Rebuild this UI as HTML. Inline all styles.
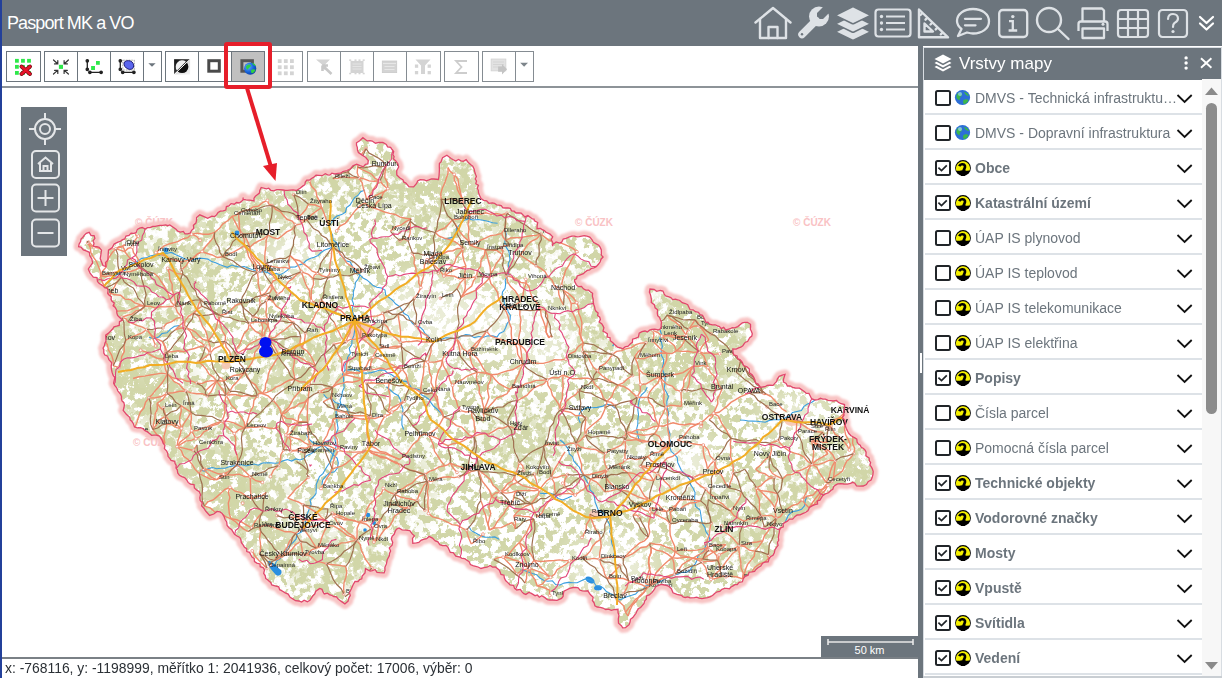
<!DOCTYPE html>
<html><head><meta charset="utf-8">
<style>
*{box-sizing:border-box;margin:0;padding:0}
html,body{width:1222px;height:678px;overflow:hidden;background:#fff;font-family:"Liberation Sans",sans-serif}
.hi{position:absolute}
</style></head><body>
<div style="position:absolute;left:0;top:0;width:1222px;height:46px;background:#6c757d"></div>
<div style="position:absolute;left:7px;top:12.5px;color:#fff;font-size:18px;letter-spacing:-0.9px;white-space:nowrap;line-height:21px">Pasport MK a VO</div>
<svg class="hi" style="left:752px;top:5px" width="42" height="36" viewBox="0 0 42 36"><g fill="none" stroke="#dee2e6" stroke-width="2.4" stroke-linejoin="round" stroke-linecap="round"><path d="M3.5 17.5 L21 3 L38.5 17.5"/><path d="M8 14 V33 H34 V14"/><path d="M16.5 33 V22 H25.5 V33"/></g></svg>
<svg class="hi" style="left:795px;top:5px" width="36" height="36" viewBox="0 0 36 36"><defs><mask id="wm"><rect width="36" height="36" fill="#fff"/><path d="M22 14 L22 8 L28 2 L40 -2 L40 6 L33 9 L28 14 Z" fill="#000"/></mask></defs><g fill="#dee2e6" mask="url(#wm)"><circle cx="24" cy="11.5" r="10"/></g><path d="M7 29.5 L21 15.5" stroke="#dee2e6" stroke-width="7.5" stroke-linecap="round"/><circle cx="7" cy="29.2" r="1.2" fill="#6c757d"/></svg>
<svg class="hi" style="left:835px;top:5px" width="36" height="36" viewBox="0 0 36 36"><g fill="#dee2e6" stroke="#6c757d" stroke-width="1.6" stroke-linejoin="round"><path d="M18 18 L34.5 26.2 Q35.5 26.8 34.5 27.4 L19 35 Q18 35.5 17 35 L1.5 27.4 Q0.5 26.8 1.5 26.2 Z"/><path d="M18 10 L34.5 18.2 Q35.5 18.8 34.5 19.4 L19 27 Q18 27.5 17 27 L1.5 19.4 Q0.5 18.8 1.5 18.2 Z"/><path d="M18 1.5 L34.5 9.7 Q35.5 10.3 34.5 10.9 L19 18.5 Q18 19 17 18.5 L1.5 10.9 Q0.5 10.3 1.5 9.7 Z"/></g></svg>
<svg class="hi" style="left:873px;top:7px" width="40" height="32" viewBox="0 0 40 32"><g fill="none" stroke="#dee2e6" stroke-width="2.2"><rect x="2.5" y="2.5" width="35" height="27" rx="3"/><path d="M13 9.5 H32 M13 16 H32 M13 22.5 H32"/></g><g fill="#dee2e6"><circle cx="8.5" cy="9.5" r="1.7"/><circle cx="8.5" cy="16" r="1.7"/><circle cx="8.5" cy="22.5" r="1.7"/></g></svg>
<svg class="hi" style="left:915px;top:5px" width="36" height="36" viewBox="0 0 36 36"><g fill="none" stroke="#dee2e6" stroke-width="2.4" stroke-linejoin="round" stroke-linecap="round"><path d="M4 4.5 L33 32.3 H4 Z"/><path d="M9.5 18.5 L18 26.5 H9.5 Z"/><path d="M7 8.5 L5.5 10 M12 13.2 L10.5 14.7 M17 18 L15.5 19.5 M22.2 22.9 L20.7 24.4 M27.3 27.8 L25.8 29.3"/></g></svg>
<svg class="hi" style="left:954px;top:5px" width="38" height="34" viewBox="0 0 38 34"><g fill="none" stroke="#dee2e6" stroke-width="2.3" stroke-linejoin="round" stroke-linecap="round"><path d="M7.5 24 C4.5 21.5 3 19 3 16 C3 9 10 4 19 4 C28 4 35 9 35 16.5 C35 23.5 28 28.5 19 28.5 C17 28.5 15 28 13 27.5 L4 31 Z"/><path d="M11 17.5 H27 M11 24 H21.5" transform="translate(0,-3.7)"/></g></svg>
<svg class="hi" style="left:996px;top:7px" width="34" height="32" viewBox="0 0 34 32"><g fill="none" stroke="#dee2e6" stroke-width="2.3"><rect x="3.2" y="3" width="28" height="27" rx="3.5"/><path d="M13 14.2 H16.8 V23.5 M12.6 23.5 H21.2"/></g><circle cx="16.8" cy="9.6" r="1.7" fill="#dee2e6"/></svg>
<svg class="hi" style="left:1034px;top:5px" width="38" height="36" viewBox="0 0 38 36"><g fill="none" stroke="#dee2e6" stroke-width="2.4" stroke-linecap="round"><circle cx="15" cy="15" r="12"/><path d="M24 24 L34.5 34"/></g></svg>
<svg class="hi" style="left:1074px;top:5px" width="38" height="36" viewBox="0 0 38 36"><g fill="none" stroke="#dee2e6" stroke-width="2.3" stroke-linejoin="round"><path d="M8.5 16 V3.5 H28 L30 5.5 V16"/><path d="M4.5 26 V19 C4.5 17.3 5.5 16.5 7 16.5 H31 C32.5 16.5 33.5 17.3 33.5 19 V26"/><rect x="8.5" y="23.5" width="21.5" height="9.5"/></g><circle cx="29" cy="19.2" r="1.5" fill="#dee2e6"/></svg>
<svg class="hi" style="left:1115px;top:7px" width="36" height="32" viewBox="0 0 36 32"><g fill="none" stroke="#dee2e6" stroke-width="2.2"><rect x="3" y="3" width="30" height="27" rx="3"/><path d="M13 3 V30 M23 3 V30 M3 12 H33 M3 21 H33"/></g></svg>
<svg class="hi" style="left:1156px;top:7px" width="34" height="32" viewBox="0 0 34 32"><g fill="none" stroke="#dee2e6" stroke-width="2.2"><rect x="3" y="3" width="28" height="27" rx="3.5"/><path d="M12 12 C12 8.5 14.5 7 17 7 C20 7 22 9 22 11.5 C22 14 20 15 18.5 16 C17.3 16.8 17 17.5 17 20" stroke-linecap="round"/></g><circle cx="17" cy="24.5" r="1.6" fill="#dee2e6"/></svg>
<svg class="hi" style="left:1197px;top:14px" width="19" height="18" viewBox="0 0 19 18"><g fill="none" stroke="#fff" stroke-width="2.2" stroke-linecap="round" stroke-linejoin="round"><path d="M3 3 L9.5 9 L16 3"/><path d="M3 9.5 L9.5 15.5 L16 9.5"/></g></svg>
<div style="position:absolute;left:0;top:46px;width:918px;height:41px;background:#fff"></div>
<div style="position:absolute;left:0;top:86px;width:918px;height:1.5px;background:#8d9398"></div>
<div style="position:absolute;left:6px;top:51px;width:35px;height:31px;border:1px solid #6c757d;background:#fff"></div>
<div style="position:absolute;left:44px;top:51px;width:118px;height:31px;border:1px solid #6c757d;background:#fff"></div>
<div style="position:absolute;left:77px;top:51px;width:1px;height:31px;background:#6c757d"></div>
<div style="position:absolute;left:110px;top:51px;width:1px;height:31px;background:#6c757d"></div>
<div style="position:absolute;left:143px;top:51px;width:1px;height:31px;background:#6c757d"></div>
<div style="position:absolute;left:165px;top:51px;width:100px;height:31px;border:1px solid #6c757d;background:#fff"></div>
<div style="position:absolute;left:198px;top:51px;width:1px;height:31px;background:#6c757d"></div>
<div style="position:absolute;left:231px;top:51px;width:1px;height:31px;background:#6c757d"></div>
<div style="position:absolute;left:232px;top:52px;width:32px;height:29px;background:#c0c0c0"></div>
<div style="position:absolute;left:269px;top:51px;width:34px;height:31px;border:1px solid #858c92;background:#fff"></div>
<div style="position:absolute;left:307px;top:51px;width:134px;height:31px;border:1px solid #858c92;background:#fff"></div>
<div style="position:absolute;left:340px;top:51px;width:1px;height:31px;background:#858c92"></div>
<div style="position:absolute;left:373px;top:51px;width:1px;height:31px;background:#858c92"></div>
<div style="position:absolute;left:406px;top:51px;width:1px;height:31px;background:#858c92"></div>
<div style="position:absolute;left:444px;top:51px;width:35px;height:31px;border:1px solid #858c92;background:#fff"></div>
<div style="position:absolute;left:482px;top:51px;width:52px;height:31px;border:1px solid #858c92;background:#fff"></div>
<div style="position:absolute;left:515px;top:51px;width:1px;height:31px;background:#858c92"></div>
<svg style="position:absolute;left:0;top:0" width="560" height="90" viewBox="0 0 560 90"><rect x="15.00" y="58.90" width="3.8" height="3.8" fill="#2ee84a"/><rect x="15.00" y="64.95" width="3.8" height="3.8" fill="#2ee84a"/><rect x="15.00" y="71.00" width="3.8" height="3.8" fill="#2ee84a"/><rect x="21.05" y="58.90" width="3.8" height="3.8" fill="#2ee84a"/><rect x="21.05" y="64.95" width="3.8" height="3.8" fill="#2ee84a"/><rect x="21.05" y="71.00" width="3.8" height="3.8" fill="#2ee84a"/><rect x="27.10" y="58.90" width="3.8" height="3.8" fill="#2ee84a"/><rect x="27.10" y="64.95" width="3.8" height="3.8" fill="#2ee84a"/><rect x="27.10" y="71.00" width="3.8" height="3.8" fill="#2ee84a"/><path d="M21.5 66.5 L30 74 M30 66.5 L21.5 74" stroke="#7a0a14" stroke-width="4" stroke-linecap="round"/><path d="M21.5 66.5 L30 74 M30 66.5 L21.5 74" stroke="#e8142a" stroke-width="2.4" stroke-linecap="round"/><rect x="58.9" y="64.8" width="4.1" height="4.1" fill="#2ee84a"/><g stroke="#333" stroke-width="1.2" fill="none" stroke-linecap="round"><path d="M53.5 60 L57.6 63.8 M57.8 60.6 V63.9 H54.5 M68.4 60 L64.3 63.8 M64.1 60.6 V63.9 H67.4 M53.5 74 L57.6 70.4 M54.5 70.3 H57.8 V73.5 M68.4 74 L64.3 70.4 M67.4 70.3 H64.1 V73.5"/></g><g stroke="#222" stroke-width="1.3" fill="#222"><path d="M87.3 60.7 V69.4 M89.9 72.3 H101.1"/><circle cx="87.3" cy="60.8" r="1.2"/><circle cx="87.3" cy="69.3" r="1.2"/><circle cx="89.9" cy="72.3" r="1.2"/><circle cx="101.1" cy="72.3" r="1.2"/></g><rect x="91.1" y="66" width="3.9" height="4" fill="#2ee84a"/><rect x="96" y="61" width="3.8" height="3.8" fill="#2ee84a"/><g stroke="#222" stroke-width="1.3" fill="#222"><path d="M120.3 60.7 V69.4 M122.7 72.3 H133.9"/><circle cx="120.3" cy="60.8" r="1.2"/><circle cx="120.3" cy="69.3" r="1.2"/><circle cx="122.7" cy="72.3" r="1.2"/><circle cx="133.9" cy="72.3" r="1.2"/></g><rect x="122.8" y="60.2" width="11.5" height="9.8" fill="none" stroke="#444" stroke-width="0.6" stroke-dasharray="0.8 0.8"/><path d="M124 63 C124.5 60.5 128 60.3 130.5 61 C133 62 134 64.5 133.5 67 C133 69.5 130 69.8 128 69 C125.5 68 123.6 65.5 124 63Z" fill="#5b66ee" stroke="#10106a" stroke-width="0.9"/><path d="M148.4 63.3 H155.6 L152 66.8Z" fill="#6c757d"/><defs><linearGradient id="ig" x1="0" y1="0" x2="1" y2="1"><stop offset="0" stop-color="#111"/><stop offset="0.5" stop-color="#333"/><stop offset="0.5" stop-color="#ddd"/><stop offset="1" stop-color="#f4f4f4"/></linearGradient><radialGradient id="gl" cx="0.35" cy="0.35" r="0.75"><stop offset="0" stop-color="#5fb0ff"/><stop offset="0.6" stop-color="#1560d8"/><stop offset="1" stop-color="#0a3a9a"/></radialGradient></defs><rect x="174.1" y="59.2" width="16" height="15.3" fill="url(#ig)"/><circle cx="182.1" cy="66.8" r="6.3" fill="#111"/><path d="M177 70.5 A6.3 6.3 0 0 1 186 61.8 Z" fill="#f0f0f0"/><path d="M174.1 74.5 L190.1 59.2" stroke="#fff" stroke-width="1"/><rect x="208.8" y="60.7" width="10.5" height="10.5" fill="none" stroke="#4a4a4a" stroke-width="3"/><rect x="241.9" y="60.7" width="10.5" height="10.5" fill="none" stroke="#555" stroke-width="3"/><circle cx="250.2" cy="68.6" r="6.1" fill="url(#gl)"/><path d="M246 66.5 C247.5 64 250 63.8 251 65.5 C250.5 67.5 248.5 67.5 248 69.5 C247 70 246 68.5 246 66.5Z M251 70 C252.5 68.8 254.8 69 255.5 70 C254.5 72.5 252.5 73.5 251.5 73 C251 72 251.2 71 251 70Z M252 62.8 C253.5 63 255.5 64.5 256 66 C254.5 66 253 65 252 62.8Z" fill="#30d040"/><rect x="277.80" y="59.20" width="3.8" height="3.8" fill="#d4d4d4"/><rect x="277.80" y="65.30" width="3.8" height="3.8" fill="#d4d4d4"/><rect x="277.80" y="71.40" width="3.8" height="3.8" fill="#d4d4d4"/><rect x="283.90" y="59.20" width="3.8" height="3.8" fill="#d4d4d4"/><rect x="283.90" y="65.30" width="3.8" height="3.8" fill="#d4d4d4"/><rect x="283.90" y="71.40" width="3.8" height="3.8" fill="#d4d4d4"/><rect x="290.00" y="59.20" width="3.8" height="3.8" fill="#d4d4d4"/><rect x="290.00" y="65.30" width="3.8" height="3.8" fill="#d4d4d4"/><rect x="290.00" y="71.40" width="3.8" height="3.8" fill="#d4d4d4"/><path d="M316 59.4 H330 L325 64.5 V70 L322 68 V64.5 Z" fill="#d4d4d4"/><path d="M322.5 65.5 L331.5 74 M322.5 65.5 V71 M322.5 65.5 H328" stroke="#c8c8c8" stroke-width="2.6" fill="none"/><rect x="350.5" y="60.8" width="13" height="12.2" fill="#d4d4d4"/><g fill="#fff"><rect x="352.5" y="59.4" width="2" height="1.4"/><rect x="356.5" y="59.4" width="2" height="1.4"/><rect x="360.5" y="59.4" width="2" height="1.4"/><rect x="352.5" y="73" width="2" height="1.4"/><rect x="356.5" y="73" width="2" height="1.4"/><rect x="360.5" y="73" width="2" height="1.4"/></g><g fill="#d4d4d4"><rect x="349.2" y="59.4" width="2" height="1.5"/><rect x="354.5" y="59.4" width="2" height="1.5"/><rect x="358.5" y="59.4" width="2" height="1.5"/><rect x="362.7" y="59.4" width="2" height="1.5"/><rect x="349.2" y="72.8" width="2" height="1.5"/><rect x="354.5" y="72.8" width="2" height="1.5"/><rect x="358.5" y="72.8" width="2" height="1.5"/><rect x="362.7" y="72.8" width="2" height="1.5"/></g><path d="M352.5 64 H361.5 M352.5 66.5 H361.5 M352.5 69 H361.5" stroke="#e8e8e8" stroke-width="0.8"/><rect x="382.3" y="61" width="14.4" height="11.6" fill="#d4d4d4" stroke="#cacaca" stroke-width="0.8"/><path d="M383 63.5 H396 M384.5 66.5 H394.5 M384.5 69.5 H394.5" stroke="#ececec" stroke-width="0.8"/><path d="M415.5 59.4 H430.5 L425 65.5 V74 H421 V65.5 Z" fill="#d4d4d4"/><g fill="#d4d4d4"><rect x="414.9" y="64.5" width="3.3" height="3.3"/><rect x="414.9" y="71" width="3.3" height="3.3"/><rect x="427.6" y="64.5" width="3.3" height="3.3"/><rect x="427.6" y="71" width="3.3" height="3.3"/></g><path d="M467 61 H456 L461.5 67 L456 73 H467" fill="none" stroke="#cdcdcd" stroke-width="1.8"/><rect x="491.1" y="59" width="14.8" height="11.9" fill="#e2e2e2" stroke="#d0d0d0" stroke-width="0.7"/><path d="M493 62 H504 M493 64.5 H504 M493 67 H504" stroke="#cfcfcf" stroke-width="0.7"/><path d="M498.1 66.5 H502 V63.9 L507.1 69.2 L502 74.5 V71.8 H498.1 Z" fill="#c4c4c4"/><path d="M520.2 62.7 H528 L524.1 66.8Z" fill="#7d858b"/></svg>
<div style="position:absolute;left:2px;top:88px;width:916px;height:569px;overflow:hidden">
<svg style="position:absolute;left:-2px;top:-88px" width="1222" height="678" viewBox="0 0 1222 678">
<defs>
<path id="czp" d="M79.2 243.8 L80.6 241.6 L81.0 239.0 L82.9 237.2 L84.2 235.4 L86.3 233.4 L89.2 232.4 L91.1 235.6 L94.1 235.6 L94.9 238.3 L93.0 240.9 L94.0 243.2 L93.4 246.3 L96.8 246.7 L99.1 247.4 L101.5 250.2 L100.9 254.5 L100.2 258.6 L101.6 262.1 L102.9 265.6 L105.9 266.6 L105.5 262.4 L107.6 260.5 L108.0 258.1 L108.2 254.1 L108.5 250.1 L112.3 247.6 L114.1 244.1 L117.9 242.1 L120.3 241.5 L122.2 239.9 L124.7 238.9 L126.0 236.1 L129.0 235.4 L131.1 233.1 L133.8 233.4 L136.1 232.7 L137.4 229.5 L139.7 228.2 L142.2 227.5 L145.2 229.1 L147.6 227.7 L150.2 227.6 L152.7 226.3 L155.2 226.4 L157.5 225.9 L159.9 225.4 L162.8 225.4 L165.6 224.9 L167.9 225.7 L169.8 225.0 L172.8 227.0 L176.0 229.3 L177.7 231.2 L180.3 232.1 L183.3 231.4 L185.0 233.9 L187.7 233.9 L190.2 233.0 L191.6 230.3 L193.8 228.5 L193.4 225.2 L195.9 223.1 L196.5 220.6 L196.6 217.6 L199.8 214.8 L204.0 216.7 L207.7 218.4 L211.9 216.2 L214.6 216.6 L216.5 214.9 L218.1 212.5 L220.4 211.2 L223.3 210.9 L225.8 210.0 L226.4 206.6 L229.0 206.0 L231.1 203.6 L234.3 204.2 L236.5 202.5 L239.7 202.8 L242.9 200.2 L243.2 197.5 L243.0 199.4 L246.0 199.9 L249.9 200.1 L254.0 200.9 L254.0 198.2 L255.4 196.3 L257.3 194.7 L259.4 193.1 L259.8 190.4 L261.2 187.4 L266.3 188.8 L268.7 188.2 L270.8 190.3 L273.7 190.9 L276.7 189.7 L279.9 189.7 L283.0 190.0 L285.3 190.4 L287.6 190.3 L289.8 190.1 L293.0 189.9 L296.3 190.5 L300.1 188.3 L303.0 185.9 L304.9 184.7 L305.3 182.1 L306.8 180.2 L309.7 180.1 L311.5 178.5 L313.6 177.4 L316.0 175.1 L318.9 175.3 L322.2 175.7 L325.3 173.7 L327.6 174.9 L329.9 175.1 L331.8 173.2 L334.9 174.0 L337.9 173.3 L340.6 173.2 L342.9 171.7 L347.0 170.5 L350.4 168.8 L352.9 165.7 L356.7 164.2 L360.0 165.7 L363.3 166.8 L365.4 164.3 L367.8 163.9 L368.3 160.6 L365.6 157.3 L362.2 155.1 L358.4 152.5 L357.5 150.0 L357.3 147.4 L356.5 145.2 L356.5 142.8 L359.7 140.8 L362.9 137.7 L365.3 139.4 L367.2 140.9 L369.9 140.7 L372.2 141.0 L375.5 143.2 L379.1 142.4 L382.8 142.5 L386.3 144.5 L387.6 146.9 L390.6 147.3 L392.1 149.5 L393.7 151.6 L392.8 154.5 L394.1 156.6 L393.5 159.0 L395.6 160.7 L397.9 163.7 L398.7 167.0 L396.7 170.7 L396.8 175.0 L399.6 177.7 L403.0 179.9 L403.9 182.2 L405.9 183.1 L408.9 186.6 L413.6 186.9 L416.6 183.5 L417.7 180.9 L420.2 179.7 L424.1 179.9 L426.4 180.8 L429.0 179.9 L431.5 178.8 L433.8 179.0 L438.4 179.5 L439.0 176.0 L439.3 172.0 L439.4 169.2 L439.3 166.3 L439.4 163.6 L441.1 161.6 L442.6 157.6 L446.9 155.2 L451.1 158.5 L453.3 159.8 L455.7 161.0 L458.5 159.5 L461.0 160.8 L463.3 161.4 L466.1 159.7 L467.7 161.7 L469.2 163.2 L470.8 164.7 L472.7 166.1 L474.1 168.9 L474.8 172.0 L475.5 174.2 L476.4 176.5 L475.2 178.9 L476.5 181.0 L475.8 183.7 L478.4 185.2 L477.3 188.2 L478.3 190.3 L478.5 192.7 L479.6 195.5 L481.0 198.6 L483.6 200.3 L486.7 200.9 L488.9 203.3 L492.3 202.9 L494.5 203.3 L496.6 204.8 L499.0 205.1 L501.2 205.6 L502.9 207.8 L505.2 208.0 L507.8 207.9 L510.2 208.3 L511.6 210.8 L514.1 211.2 L516.0 213.0 L518.8 213.0 L521.2 213.2 L523.0 214.9 L524.8 216.9 L527.9 215.6 L530.5 217.4 L532.4 218.9 L534.0 219.0 L534.4 220.9 L537.7 222.5 L537.2 225.4 L537.0 228.7 L540.5 228.4 L542.3 229.7 L544.3 230.6 L546.1 232.3 L550.0 234.1 L552.7 236.9 L551.2 239.7 L552.9 242.8 L552.6 246.2 L552.3 244.4 L554.4 243.4 L556.1 242.0 L559.6 243.1 L561.7 242.2 L563.2 239.0 L566.1 238.4 L568.9 237.2 L571.8 236.2 L574.4 236.1 L576.9 236.8 L579.3 236.7 L581.8 236.2 L584.2 235.7 L586.8 236.2 L589.8 237.0 L591.9 239.5 L593.4 242.3 L596.2 243.9 L598.7 245.3 L600.2 247.4 L601.3 249.9 L601.3 252.6 L601.3 255.1 L603.1 257.0 L601.0 259.2 L600.2 261.8 L598.4 264.3 L596.2 266.8 L593.9 267.8 L591.5 268.3 L589.7 270.0 L587.2 270.4 L585.2 271.9 L583.4 273.7 L580.3 274.8 L577.2 275.9 L576.5 278.8 L574.6 279.7 L574.7 281.6 L576.4 284.9 L578.5 286.7 L581.5 286.4 L583.4 288.8 L585.8 290.1 L588.6 290.2 L590.3 291.8 L592.6 293.3 L592.4 296.3 L593.2 299.2 L593.3 302.5 L593.8 304.7 L594.6 306.9 L595.0 309.2 L596.0 311.3 L598.1 313.1 L597.6 315.5 L599.7 317.2 L600.4 319.4 L599.1 322.1 L601.7 323.7 L603.0 325.8 L603.9 327.9 L603.0 331.2 L605.5 332.5 L607.4 333.9 L607.2 337.1 L610.0 337.7 L610.3 340.7 L612.9 342.7 L615.2 345.1 L617.4 347.1 L620.5 347.9 L622.9 348.8 L625.1 346.9 L628.2 346.2 L630.4 343.8 L632.4 342.3 L632.6 339.2 L635.3 338.3 L638.4 337.1 L639.2 333.2 L642.0 331.7 L645.0 331.0 L647.4 331.9 L649.6 330.2 L651.8 329.4 L654.8 329.1 L658.0 330.0 L660.2 329.0 L661.2 326.8 L661.2 324.3 L661.5 322.1 L660.5 320.0 L659.6 317.6 L657.7 315.8 L657.3 313.0 L657.6 309.7 L655.1 307.9 L654.3 304.7 L651.3 302.5 L651.4 299.4 L650.9 296.7 L650.4 294.4 L649.4 292.2 L650.0 289.0 L654.1 289.5 L656.6 291.3 L660.3 290.4 L662.9 291.0 L664.1 293.8 L665.6 296.0 L668.3 296.6 L670.8 297.6 L672.7 299.6 L675.4 299.1 L677.6 299.8 L679.8 300.5 L682.2 302.7 L685.3 303.5 L687.7 304.7 L688.9 307.2 L690.1 309.7 L693.1 309.8 L695.4 311.7 L698.4 312.3 L700.1 314.6 L702.5 315.3 L704.5 319.0 L705.9 322.4 L707.9 322.2 L709.5 324.2 L712.3 324.9 L715.3 324.8 L717.4 325.9 L719.5 326.6 L721.2 328.6 L723.7 327.4 L725.6 329.9 L728.0 329.3 L730.2 328.7 L732.2 327.6 L734.7 327.9 L737.8 326.6 L740.3 324.5 L742.3 322.9 L744.7 322.4 L747.5 322.3 L750.5 324.3 L750.6 326.8 L750.3 329.2 L751.4 331.2 L752.3 333.7 L751.8 336.1 L749.7 337.8 L747.6 341.5 L745.4 342.2 L744.2 343.6 L742.8 345.9 L740.8 347.2 L738.6 347.8 L736.1 349.1 L732.8 348.9 L733.0 352.1 L733.8 355.0 L737.1 355.9 L737.6 358.7 L740.2 359.8 L742.3 362.3 L743.5 365.5 L746.9 366.8 L749.3 369.0 L749.4 372.9 L752.1 374.8 L753.8 377.2 L754.9 380.0 L755.5 382.7 L758.1 384.1 L760.4 387.1 L762.4 387.0 L765.0 386.7 L767.2 385.4 L770.0 385.2 L773.1 385.4 L775.0 383.1 L776.7 381.5 L777.3 379.1 L779.2 376.3 L782.3 375.2 L785.0 374.5 L783.5 379.3 L783.4 382.0 L786.1 383.5 L787.4 386.0 L790.1 385.8 L792.6 387.3 L795.2 388.0 L799.5 388.1 L802.8 390.4 L804.6 391.8 L806.3 393.4 L808.9 393.4 L810.0 395.5 L811.5 398.6 L815.1 400.0 L817.9 399.6 L820.4 398.3 L822.8 399.2 L825.4 399.1 L828.0 400.4 L830.5 400.7 L833.3 401.0 L836.5 400.4 L838.3 402.3 L840.4 403.4 L844.5 404.6 L844.6 408.1 L843.7 410.9 L844.0 415.2 L842.3 417.7 L844.6 419.9 L845.5 422.5 L845.2 425.7 L846.2 428.2 L847.4 430.7 L848.7 433.3 L850.7 435.5 L852.8 436.7 L854.8 437.9 L856.8 439.2 L857.1 442.1 L858.3 444.1 L860.2 445.3 L861.2 447.3 L863.5 448.5 L865.1 450.1 L866.1 452.2 L865.9 455.9 L869.2 458.0 L869.3 460.5 L870.6 462.5 L869.9 465.2 L871.5 467.1 L872.5 469.2 L873.2 471.5 L872.9 474.6 L872.2 477.3 L871.1 480.1 L868.3 481.4 L866.4 484.5 L863.2 486.0 L859.7 486.1 L856.5 485.8 L854.8 483.2 L852.7 482.3 L850.4 483.4 L847.3 484.2 L844.0 484.0 L840.8 483.6 L837.6 483.9 L835.5 485.1 L833.7 486.6 L832.8 489.3 L830.8 490.5 L828.5 492.8 L825.3 493.9 L822.7 495.6 L821.0 498.3 L819.9 500.1 L817.3 501.0 L817.6 503.9 L814.9 504.6 L812.0 505.9 L809.5 507.5 L807.9 510.7 L805.2 512.5 L802.6 513.7 L800.1 514.9 L797.1 515.0 L794.8 516.7 L792.7 519.2 L789.5 519.1 L787.4 521.1 L785.0 522.4 L783.1 523.8 L783.3 526.8 L780.8 527.8 L779.6 529.8 L779.3 532.4 L778.7 534.8 L778.3 537.4 L778.7 540.2 L777.4 542.5 L778.1 545.4 L776.3 547.6 L774.9 549.9 L774.3 552.7 L773.0 555.2 L770.4 556.8 L769.0 558.8 L768.2 561.9 L765.2 562.0 L762.6 563.2 L760.8 566.1 L758.2 567.5 L755.9 569.4 L754.6 571.3 L752.0 571.8 L749.1 572.1 L748.1 575.2 L745.2 576.3 L743.3 578.5 L742.4 581.8 L739.1 582.4 L737.3 584.5 L734.9 584.6 L733.0 585.9 L731.1 586.9 L729.4 588.8 L726.9 588.4 L724.5 588.4 L721.9 589.3 L719.8 591.5 L717.1 591.8 L714.9 593.2 L712.8 595.3 L710.5 596.7 L707.6 597.6 L704.5 598.1 L701.9 598.6 L699.1 598.1 L696.7 597.2 L694.4 597.6 L690.0 597.8 L687.8 596.9 L685.3 597.5 L683.1 596.8 L681.3 595.3 L677.0 594.3 L673.0 592.8 L671.4 588.7 L668.6 586.2 L664.5 585.0 L661.1 584.4 L657.5 585.8 L655.5 587.0 L654.5 589.2 L652.1 592.4 L649.2 594.9 L646.4 596.0 L646.4 598.9 L644.7 600.9 L643.9 603.7 L642.2 605.6 L640.6 607.5 L638.3 608.8 L637.0 610.8 L636.0 613.3 L634.4 615.4 L632.8 617.6 L630.4 619.3 L630.0 622.1 L629.1 624.7 L625.5 627.6 L622.7 627.9 L621.4 625.7 L618.5 623.2 L618.3 619.0 L619.0 615.2 L618.0 612.6 L618.0 609.3 L613.9 609.6 L611.3 610.3 L608.7 609.1 L605.7 609.5 L603.0 608.0 L600.3 607.3 L597.2 607.0 L594.9 605.9 L594.1 602.9 L592.4 600.5 L593.2 597.3 L590.3 594.6 L587.8 590.8 L584.8 591.2 L582.4 590.9 L580.1 590.3 L578.2 587.9 L575.8 587.3 L573.2 587.5 L569.6 588.3 L566.3 590.0 L563.9 591.2 L563.4 593.5 L563.1 596.4 L561.5 598.4 L557.0 600.3 L552.3 600.0 L549.7 600.0 L547.3 599.6 L544.6 597.4 L541.7 595.8 L539.3 597.2 L537.4 595.0 L535.1 595.7 L533.0 594.4 L530.9 593.2 L528.8 592.5 L525.9 594.4 L523.8 593.6 L522.0 591.9 L520.4 589.4 L516.8 590.0 L514.6 588.4 L513.5 585.3 L510.0 584.8 L507.8 582.6 L505.6 580.6 L504.3 577.8 L504.0 575.2 L501.0 574.4 L499.4 570.2 L497.4 568.6 L495.4 567.0 L492.6 567.1 L490.1 565.5 L487.0 567.2 L484.0 567.7 L481.0 568.5 L478.1 567.0 L475.7 566.3 L472.9 565.7 L470.4 564.6 L469.2 561.7 L466.9 560.3 L464.8 558.7 L462.1 558.3 L460.0 557.1 L455.8 556.1 L453.2 552.7 L450.3 552.3 L449.2 549.9 L448.0 547.3 L446.0 545.4 L442.5 545.7 L439.8 544.6 L437.9 541.8 L435.3 540.9 L432.4 538.1 L429.1 536.4 L426.6 538.7 L423.4 539.4 L421.0 540.3 L418.8 542.4 L416.4 542.8 L412.8 543.3 L412.5 538.4 L414.4 535.8 L412.2 533.9 L409.8 530.7 L405.6 530.2 L402.1 529.8 L399.0 528.0 L396.5 529.2 L395.4 530.9 L394.1 534.3 L392.1 536.4 L391.3 539.0 L392.7 542.2 L392.1 545.2 L389.3 547.9 L390.6 551.1 L389.5 553.4 L389.3 555.8 L387.2 559.8 L386.4 563.9 L384.9 567.3 L385.0 570.2 L384.1 572.9 L379.7 572.6 L377.0 572.3 L375.1 569.5 L372.4 570.6 L370.1 571.0 L365.5 568.6 L365.0 572.9 L362.1 576.1 L361.8 578.8 L359.6 579.6 L358.1 581.5 L355.0 581.5 L353.1 584.8 L351.4 588.8 L350.4 590.8 L349.4 592.8 L350.3 595.4 L348.8 598.1 L348.1 601.1 L344.9 603.9 L341.3 601.4 L338.0 598.9 L336.6 596.8 L333.7 596.5 L331.7 595.3 L329.4 594.6 L327.4 593.1 L324.3 593.9 L322.9 591.6 L322.0 589.3 L319.7 588.5 L318.1 589.6 L315.6 591.5 L314.8 593.9 L313.0 595.7 L311.7 597.6 L309.9 600.2 L307.3 601.7 L304.1 600.2 L301.6 602.1 L298.8 601.0 L295.5 600.7 L292.8 598.9 L290.1 597.3 L288.2 594.1 L285.2 592.9 L283.0 591.5 L281.2 590.4 L279.7 589.7 L278.7 586.8 L275.0 585.9 L271.8 585.0 L270.7 582.4 L268.9 580.9 L267.6 579.8 L265.7 578.4 L265.3 575.8 L263.7 573.3 L264.5 569.9 L263.1 567.5 L260.2 566.7 L260.0 563.9 L256.8 563.1 L254.5 561.6 L254.2 558.5 L252.0 557.0 L250.8 554.8 L249.6 552.4 L246.8 551.6 L246.7 548.7 L244.5 547.3 L243.1 544.9 L241.4 542.7 L240.9 539.8 L239.8 537.4 L237.0 536.0 L234.5 534.4 L233.0 531.9 L231.5 529.4 L229.0 527.7 L227.1 525.5 L226.7 522.0 L225.1 519.5 L224.0 516.4 L222.3 513.6 L220.1 511.9 L217.0 511.4 L213.8 514.0 L209.6 515.4 L207.4 513.0 L205.5 510.9 L203.9 508.2 L201.6 505.8 L202.3 502.7 L200.2 500.5 L199.8 497.7 L200.5 494.6 L199.3 491.8 L196.6 489.9 L194.4 487.9 L194.0 484.5 L190.4 484.1 L188.1 482.4 L186.6 479.7 L184.6 477.6 L181.9 476.6 L179.4 475.3 L177.7 473.0 L177.3 469.8 L176.0 468.0 L176.2 465.4 L175.1 463.5 L174.7 461.3 L171.1 460.4 L169.9 458.6 L168.0 456.3 L167.7 453.2 L166.5 450.8 L164.4 448.6 L164.9 445.4 L163.1 443.2 L162.3 440.8 L161.2 438.8 L159.5 436.0 L156.3 435.2 L154.0 435.2 L151.6 435.3 L149.8 433.7 L147.5 431.9 L145.0 430.6 L143.0 428.7 L140.7 427.7 L137.4 427.8 L134.5 427.0 L133.4 423.7 L131.8 421.3 L130.2 419.9 L129.8 417.5 L128.2 415.9 L126.3 414.2 L124.8 412.3 L123.2 410.3 L124.0 407.5 L124.4 404.9 L123.9 402.7 L122.0 401.0 L121.4 398.9 L121.5 396.5 L120.6 394.4 L119.2 392.6 L117.7 390.8 L116.8 387.9 L114.7 385.4 L113.6 383.1 L114.2 380.3 L114.9 377.5 L113.2 375.5 L112.1 372.4 L111.4 369.2 L111.2 366.1 L111.8 362.7 L108.9 359.7 L107.7 356.2 L104.9 355.1 L103.8 353.0 L103.8 350.4 L103.1 348.0 L104.5 345.5 L104.9 343.2 L106.0 341.0 L105.8 338.4 L105.7 335.0 L108.2 333.4 L110.5 331.3 L112.6 329.0 L114.0 326.9 L116.6 326.2 L119.2 325.4 L119.5 321.6 L122.3 320.0 L119.4 317.2 L117.6 315.4 L116.8 313.0 L116.8 310.3 L115.3 307.6 L113.1 305.7 L114.3 303.0 L112.0 301.2 L111.0 299.3 L111.3 296.7 L109.2 295.3 L107.7 293.6 L108.1 290.6 L107.4 288.4 L104.6 287.6 L103.1 285.9 L101.2 284.6 L99.0 283.3 L97.5 281.5 L97.0 277.7 L93.3 277.2 L91.7 275.2 L90.1 273.1 L88.3 269.1 L90.5 265.8 L92.6 263.0 L91.9 259.0 L89.8 255.7 L89.4 252.3 L86.2 250.9 L83.3 249.9 L81.1 247.0 L78.6 246.6Z"/>
<clipPath id="cz"><use href="#czp"/></clipPath>
<filter id="tex" x="60" y="120" width="840" height="520" filterUnits="userSpaceOnUse" color-interpolation-filters="sRGB"><feTurbulence type="fractalNoise" baseFrequency="0.13" numOctaves="4" seed="9"/><feColorMatrix type="matrix" values="0 0 0 0 0.82 0 0 0 0 0.84 0 0 0 0 0.66 16 0 0 0 -7.8"/></filter>
<filter id="tex2" x="60" y="120" width="840" height="520" filterUnits="userSpaceOnUse" color-interpolation-filters="sRGB"><feTurbulence type="fractalNoise" baseFrequency="0.13" numOctaves="4" seed="9"/><feColorMatrix type="matrix" values="0 0 0 0 0.82 0 0 0 0 0.84 0 0 0 0 0.66 16 0 0 0 -6.9"/></filter>
<filter id="tex3" x="60" y="120" width="840" height="520" filterUnits="userSpaceOnUse" color-interpolation-filters="sRGB"><feTurbulence type="fractalNoise" baseFrequency="0.13" numOctaves="4" seed="4"/><feColorMatrix type="matrix" values="0 0 0 0 0.82 0 0 0 0 0.84 0 0 0 0 0.66 16 0 0 0 -7.6"/></filter>
<filter id="blur"><feGaussianBlur stdDeviation="14"/></filter>
<filter id="hb" x="0" y="0" width="1222" height="678" filterUnits="userSpaceOnUse"><feGaussianBlur stdDeviation="1.0"/></filter>
<mask id="fm" maskUnits="userSpaceOnUse" x="0" y="0" width="1222" height="678"><g filter="url(#blur)" fill="#fff"><ellipse cx="260" cy="212" rx="95" ry="20" transform="rotate(-17 260 212)"/><ellipse cx="170" cy="278" rx="45" ry="30" transform="rotate(0 170 278)"/><ellipse cx="118" cy="360" rx="22" ry="60" transform="rotate(0 118 360)"/><ellipse cx="298" cy="365" rx="35" ry="32" transform="rotate(0 298 365)"/><ellipse cx="235" cy="495" rx="85" ry="35" transform="rotate(42 235 495)"/><ellipse cx="335" cy="560" rx="55" ry="22" transform="rotate(0 335 560)"/><ellipse cx="440" cy="192" rx="60" ry="28" transform="rotate(0 440 192)"/><ellipse cx="520" cy="235" rx="35" ry="18" transform="rotate(15 520 235)"/><ellipse cx="588" cy="305" rx="18" ry="38" transform="rotate(0 588 305)"/><ellipse cx="597" cy="320" rx="14" ry="30" transform="rotate(0 597 320)"/><ellipse cx="695" cy="345" rx="55" ry="45" transform="rotate(20 695 345)"/><ellipse cx="690" cy="318" rx="35" ry="30" transform="rotate(0 690 318)"/><ellipse cx="720" cy="350" rx="30" ry="25" transform="rotate(0 720 350)"/><ellipse cx="675" cy="355" rx="35" ry="40" transform="rotate(0 675 355)"/><ellipse cx="700" cy="335" rx="30" ry="25" transform="rotate(0 700 335)"/><ellipse cx="840" cy="490" rx="40" ry="38" transform="rotate(0 840 490)"/><ellipse cx="800" cy="510" rx="35" ry="25" transform="rotate(0 800 510)"/><ellipse cx="850" cy="470" rx="25" ry="25" transform="rotate(0 850 470)"/><ellipse cx="770" cy="560" rx="30" ry="22" transform="rotate(-30 770 560)"/><ellipse cx="525" cy="440" rx="35" ry="25" transform="rotate(0 525 440)"/><ellipse cx="618" cy="475" rx="22" ry="30" transform="rotate(0 618 475)"/><ellipse cx="400" cy="485" rx="35" ry="30" transform="rotate(0 400 485)"/><ellipse cx="160" cy="395" rx="35" ry="30" transform="rotate(0 160 395)"/><ellipse cx="735" cy="520" rx="25" ry="25" transform="rotate(0 735 520)"/></g></mask>
</defs>
<g font-family="Liberation Sans" font-size="10" font-weight="bold" fill="#f9c2c4" text-anchor="middle"><text x="594" y="226">© ČÚZK</text><text x="812" y="226">© ČÚZK</text><text x="154" y="226">© ČÚZK</text><text x="152" y="446">© ČÚZK</text></g>
<use href="#czp" fill="#fff" stroke="#f8c4c4" stroke-width="10" stroke-linejoin="round" filter="url(#hb)"/>
<use href="#czp" fill="#fff"/>
<g clip-path="url(#cz)">
<rect x="60" y="120" width="840" height="520" filter="url(#tex)"/>
<g mask="url(#fm)"><rect x="60" y="120" width="840" height="520" filter="url(#tex2)"/><rect x="60" y="120" width="840" height="520" filter="url(#tex3)"/></g>
<g filter="url(#blur)" fill="#fff" opacity="0.55"><ellipse cx="290" cy="258" rx="35" ry="25" transform="rotate(0 290 258)"/><ellipse cx="450" cy="325" rx="75" ry="35" transform="rotate(-10 450 325)"/><ellipse cx="680" cy="465" rx="40" ry="35" transform="rotate(0 680 465)"/><ellipse cx="610" cy="565" rx="50" ry="30" transform="rotate(0 610 565)"/><ellipse cx="795" cy="415" rx="35" ry="22" transform="rotate(0 795 415)"/><ellipse cx="310" cy="520" rx="22" ry="20" transform="rotate(0 310 520)"/><ellipse cx="420" cy="300" rx="40" ry="25" transform="rotate(0 420 300)"/><ellipse cx="540" cy="340" rx="30" ry="40" transform="rotate(0 540 340)"/></g>
<g fill="#2a8fe0"><path d="M268 561 C272 560 276 566 281 570 C283 574 279 577 276 575 C273 572 270 568 268 565Z"/><ellipse cx="590" cy="580" rx="5" ry="3" transform="rotate(30 590 580)"/><ellipse cx="598" cy="588" rx="4" ry="2.5"/><circle cx="368" cy="515" r="2.2"/><circle cx="374" cy="523" r="2"/><circle cx="365" cy="530" r="1.8"/><circle cx="166" cy="250" r="2.5"/><circle cx="237" cy="233" r="2.4"/></g>
<g fill="#f7c6b4" opacity="0.9"><ellipse cx="360" cy="331" rx="14" ry="10"/><circle cx="594" cy="515" r="5"/><ellipse cx="792" cy="420" rx="8" ry="6"/><circle cx="226" cy="365" r="4.5"/><circle cx="665" cy="447" r="4"/><circle cx="829" cy="427" r="4"/></g>
<g fill="none" stroke="#3a9ee0" stroke-width="1.1"><path d="M149.0 337.2 L153.8 338.6 L158.6 337.1 L162.0 333.5 L167.0 332.8 L170.4 329.1 L174.5 326.3 L179.5 325.6"/><path d="M807.2 495.9 L805.2 500.5 L804.7 505.5 L801.5 509.3 L796.8 510.9 L791.9 511.8 L788.3 515.4 L786.1 519.9 L784.4 524.5 L783.0 529.4 L782.1 534.3"/><path d="M386.4 386.8 L390.3 390.0 L394.0 393.3 L398.4 395.7 L400.6 400.2 L401.5 405.1 L403.0 409.9 L402.3 414.9 L401.9 419.8 L401.9 424.8 L403.6 429.5"/><path d="M323.6 394.3 L326.9 398.0 L331.9 398.8 L335.3 402.5 L340.0 404.0 L344.8 405.5 L347.6 409.6 L348.6 414.5"/><path d="M615.4 408.3 L611.4 405.3 L606.6 404.2 L602.1 406.4 L597.2 407.4 L592.2 407.8 L587.2 407.4 L582.8 409.8 L579.4 413.5 L578.5 418.4 L580.3 423.1"/><path d="M499.2 539.2 L494.8 536.9 L489.8 537.2 L484.8 537.1 L480.0 535.6 L475.7 533.1 L471.3 530.7 L468.8 526.3"/><path d="M612.5 346.0 L615.9 342.4 L619.1 338.5 L621.6 334.2 L621.4 329.2 L620.6 324.2 L620.5 319.2 L619.4 314.3 L618.5 309.4 L615.3 305.6 L614.7 300.6"/><path d="M321.9 484.9 L322.7 480.0 L326.0 476.2 L329.6 472.8 L334.5 471.8 L337.6 467.9 L338.3 462.9 L337.1 458.0 L333.2 454.9 L329.9 451.1 L326.3 447.7 L322.6 444.3 L317.6 444.1 L312.8 442.5 L309.0 439.2 L306.4 435.0"/><path d="M443.4 239.0 L448.4 238.4 L453.2 237.0 L456.1 232.9 L456.7 227.9 L460.1 224.3 L463.5 220.6 L468.2 218.9 L473.0 220.0 L478.0 219.5 L482.9 220.3 L487.8 221.2 L492.6 222.7 L497.6 223.2"/><path d="M647.3 387.2 L645.0 391.7 L641.3 395.0 L639.3 399.6 L638.4 404.5 L637.8 409.5 L638.5 414.4 L637.9 419.4 L637.8 424.4 L636.6 429.2 L637.6 434.1 L638.8 438.9 L642.1 442.7"/><path d="M572.0 495.9 L567.5 498.1 L562.8 499.9 L558.1 498.4 L554.6 494.8 L549.9 493.1 L544.9 493.6 L540.0 493.2"/><path d="M275.0 565.0 L276.5 560.9 L280.4 558.6 L282.1 554.7 L285.3 551.9 L287.1 548.0 L290.0 545.0 L293.4 542.2 L296.1 538.9 L297.1 534.3 L301.3 532.1 L303.0 528.0 L305.2 524.3 L305.4 520.1 L306.4 516.1 L308.0 512.2 L309.5 508.4 L311.1 504.5 L310.0 500.0 L313.4 497.0 L316.0 493.6 L316.2 489.0 L316.3 484.4 L317.9 480.5 L319.5 476.6 L322.9 473.6 L325.0 470.0 L327.4 466.0 L330.0 462.2 L331.8 458.0 L333.2 453.7 L335.3 449.6 L336.3 445.2 L335.0 440.0 L335.1 435.9 L336.8 432.1 L338.1 428.2 L337.3 424.0 L336.8 419.9 L336.4 415.8 L336.0 411.7 L338.3 407.9 L340.9 404.2 L340.0 400.0 L341.8 395.9 L342.4 391.6 L344.2 387.5 L343.7 383.0 L343.6 378.6 L342.6 374.0 L345.0 370.0 L344.8 365.4 L346.9 361.4 L347.7 357.1 L350.4 353.2 L349.2 348.4 L351.8 344.5 L352.0 340.0 L353.9 335.4 L354.6 330.7 L355.3 325.9 L355.0 321.0 L354.9 316.7 L352.6 312.8 L352.1 308.6 L353.6 304.1 L352.0 300.0 L353.4 295.8 L353.3 291.2 L355.0 287.2 L355.3 282.7 L358.1 279.0 L360.0 275.0"/><path d="M505.0 230.0 L506.3 234.2 L505.1 238.8 L504.8 243.2 L506.3 247.4 L508.9 251.4 L509.5 255.7 L510.0 260.0 L508.1 263.8 L509.0 268.2 L508.6 272.3 L507.6 276.3 L505.2 279.9 L505.6 284.2 L505.1 288.3 L502.5 291.9 L502.0 296.0 L504.1 299.7 L504.4 304.1 L507.3 307.6 L508.1 311.7 L510.4 315.4 L510.0 320.0 L507.3 323.3 L505.7 327.5 L503.8 331.4 L499.4 333.4 L497.0 337.0 L492.6 335.9 L488.0 335.8 L483.4 337.3 L478.9 336.5 L474.3 337.6 L470.0 335.0 L465.8 334.6 L461.9 335.9 L458.2 338.2 L454.1 338.8 L449.8 338.1 L445.6 337.7 L441.8 339.3 L437.8 340.0 L434.0 342.0 L430.7 339.6 L428.4 336.1 L425.1 333.7 L423.0 329.9 L419.9 327.2 L415.7 325.9 L412.5 323.3 L410.0 320.0 L408.2 315.8 L404.1 313.6 L401.7 310.0 L399.3 306.3 L395.5 303.8 L392.7 300.5 L389.3 297.7 L385.7 295.0 L385.0 290.0 L381.4 288.0 L376.9 287.3 L373.1 285.6 L370.0 282.6 L366.8 279.9 L363.0 278.1 L360.0 275.0 L356.6 272.7 L353.7 269.9 L352.2 265.7 L350.3 261.9 L345.7 260.7 L343.4 257.3 L340.0 255.0 L339.6 250.6 L338.5 246.6 L336.7 242.8 L333.0 240.0 L332.6 235.1 L330.3 230.7 L329.0 226.0 L331.5 222.5 L333.7 218.7 L337.0 216.0 L341.6 214.6 L345.3 212.3 L346.6 207.6 L350.0 205.0 L352.3 201.3 L354.6 197.6 L358.2 195.2 L360.7 191.7 L365.0 190.0"/><path d="M660.0 330.0 L661.4 334.1 L659.7 338.4 L661.5 342.5 L662.4 346.6 L661.1 350.9 L661.2 355.1 L663.5 359.1 L663.5 363.3 L662.3 367.6 L663.3 371.8 L664.9 375.8 L665.0 380.0 L665.0 384.2 L664.1 388.5 L666.6 392.5 L668.4 396.6 L666.9 400.9 L666.9 405.1 L667.3 409.3 L668.8 413.4 L667.4 417.7 L667.9 421.9 L667.5 426.1 L668.8 430.2 L670.0 434.4 L669.3 438.6 L671.2 442.7 L670.0 447.0 L671.1 451.3 L674.5 454.3 L677.3 457.6 L677.7 462.4 L679.5 466.3 L681.3 470.3 L684.3 473.4 L687.2 476.7 L690.0 480.0 L690.6 484.6 L693.2 488.5 L695.1 492.6 L694.6 497.5 L694.9 502.2 L695.8 506.6 L700.0 510.0 L700.8 514.5 L701.4 519.1 L702.3 523.5 L704.9 527.4 L706.0 531.8 L708.8 535.6 L710.0 540.0 L707.4 543.1 L705.4 546.5 L704.3 550.6 L701.0 553.3 L697.9 556.0 L697.0 560.3 L695.3 563.9 L692.3 566.7 L690.0 570.0 L686.3 572.4 L681.7 572.3 L677.9 574.1 L673.6 574.9 L669.6 576.4 L665.8 578.4 L662.1 580.7 L658.2 582.6 L653.6 582.5 L650.0 585.0 L645.8 586.0 L642.9 589.5 L638.8 590.7 L635.7 593.9 L631.7 595.3 L627.6 596.5 L623.8 598.1 L620.0 600.0"/><path d="M520.0 570.0 L524.4 570.5 L528.4 572.0 L532.4 573.6 L536.5 574.7 L539.8 578.0 L543.6 580.2 L547.7 581.3 L552.4 580.8 L555.6 584.5 L560.0 585.0 L564.1 583.1 L568.4 582.4 L572.8 582.7 L577.2 582.7 L581.3 580.7 L585.4 578.9 L590.0 580.0 L593.6 581.8 L595.9 585.6 L600.4 586.0 L603.7 588.4 L606.4 591.5 L609.9 593.5 L613.7 595.0 L616.6 597.9 L620.0 600.0"/><path d="M740.0 420.0 L744.2 420.2 L748.4 421.0 L752.6 421.1 L756.8 421.3 L761.0 421.7 L765.2 422.2 L769.4 420.4 L773.6 419.7 L777.8 419.7 L782.0 420.0 L785.6 417.6 L789.6 416.0 L792.5 412.4 L796.9 411.5 L801.4 410.6 L803.9 406.4 L807.5 404.1 L811.5 402.4 L815.0 400.0"/><path d="M96.0 292.0 L99.4 289.2 L103.6 287.6 L105.8 283.4 L109.7 281.3 L112.7 278.1 L116.0 275.3 L119.8 273.1 L123.7 271.0 L127.3 268.6 L130.0 265.0 L134.0 263.0 L137.9 261.1 L141.6 258.4 L146.1 257.9 L150.0 255.9 L154.4 255.0 L159.2 255.4 L163.0 253.0 L167.2 253.2 L171.5 252.4 L175.3 254.6 L179.2 256.3 L183.1 257.9 L186.9 259.7 L190.9 260.7 L195.4 259.1 L199.7 258.1 L203.9 258.5 L207.9 259.1 L211.7 261.6 L215.7 262.7 L219.5 264.6 L223.5 265.9 L227.4 267.3 L232.0 265.0 L235.9 266.4 L239.9 267.0 L244.2 266.6 L248.0 268.1 L251.9 269.5 L255.8 270.8 L259.7 272.1 L264.0 271.6 L268.0 272.7 L271.7 274.9 L276.2 273.4 L280.0 275.0 L283.7 272.9 L287.2 270.4 L290.4 267.1 L295.2 267.0 L298.9 264.9 L303.1 263.7 L306.2 260.5 L310.0 258.4 L314.2 257.2 L318.1 255.5 L321.3 252.3 L324.9 250.0 L329.0 248.5 L333.0 247.0"/><path d="M200.0 470.0 L204.3 471.1 L208.3 468.6 L212.4 467.5 L216.7 468.7 L220.9 468.3 L225.1 468.3 L229.1 466.8 L233.3 465.9 L237.5 465.9 L241.5 464.6 L245.9 466.0 L250.0 465.0 L254.1 464.0 L258.4 465.2 L262.4 463.0 L266.6 462.8 L270.8 462.9 L275.1 463.3 L279.2 462.7 L283.2 460.7 L287.3 459.6 L291.7 461.1 L295.7 458.9 L300.0 460.0 L303.9 458.6 L306.7 455.6 L310.5 454.1 L313.8 451.8 L316.5 448.6 L320.1 446.8 L323.1 444.1 L326.1 441.4 L330.0 440.0"/><path d="M450.0 420.0 L446.1 417.9 L442.6 415.4 L440.0 412.0 L437.0 409.0 L433.7 406.3 L431.1 402.9 L428.8 399.2 L425.2 396.8 L421.3 394.7 L420.0 390.0 L416.0 388.8 L411.8 388.2 L409.2 384.2 L406.1 381.4 L401.7 381.1 L398.3 378.8 L394.7 377.0 L391.3 374.6 L387.5 373.1 L384.5 370.1 L380.0 370.0 L375.6 371.5 L371.2 372.6 L366.9 373.3 L362.5 372.9 L358.1 370.5 L353.8 369.4 L349.4 369.9 L345.0 370.0"/><path d="M560.0 440.0 L563.6 442.7 L566.1 446.1 L568.4 449.5 L569.3 453.9 L572.6 456.7 L573.7 460.9 L576.4 464.2 L579.4 467.2 L581.0 471.1 L583.2 474.7 L585.1 478.3 L587.2 482.0 L589.6 485.4 L590.0 490.0 L593.4 493.0 L594.5 497.4 L595.1 502.0 L596.7 506.0 L598.3 510.1 L602.8 512.4 L604.9 516.2 L607.0 520.0 L609.2 523.7 L610.5 527.6 L609.7 531.9 L611.8 535.7 L611.3 539.9 L612.0 544.0 L613.7 547.8 L614.8 551.7 L613.4 556.2 L615.0 560.0"/></g>
<g fill="none" stroke="#f08a6c" stroke-width="1.4"><path d="M355.0 321.0 L357.2 323.0 L360.0 324.3"/><path d="M355.0 321.0 L349.7 318.9 L345.3 315.1 L341.3 310.9 L336.0 308.6 L331.6 305.0 L325.7 303.8 L321.1 300.4"/><path d="M355.0 321.0 L360.4 318.5 L366.1 317.3 L371.8 316.4 L377.7 315.9 L383.0 313.3"/><path d="M355.0 321.0 L353.0 320.6 L352.0 322.3"/><path d="M232.0 362.0 L231.0 356.7 L229.6 351.4 L226.1 346.9 L225.2 341.6"/><path d="M232.0 362.0 L234.9 358.5 L235.8 353.9"/><path d="M782.0 420.0 L789.4 419.4 L796.7 420.8"/><path d="M670.0 447.0 L669.5 441.3 L669.1 435.7 L667.9 430.1 L667.7 424.4"/><path d="M670.0 447.0 L665.8 444.1 L661.8 441.0 L659.2 436.3 L654.6 433.8"/><path d="M670.0 447.0 L664.1 447.2 L659.0 443.8 L653.8 441.2 L647.8 441.6"/><path d="M670.0 447.0 L663.8 448.0 L659.0 452.1 L652.8 453.1 L647.7 456.5"/><path d="M463.0 204.0 L462.9 198.7 L459.7 194.2 L457.4 189.5 L456.6 184.4 L454.2 179.8 L454.2 174.4"/><path d="M329.0 226.0 L326.4 219.9 L324.3 213.7 L321.6 207.6"/><path d="M520.0 302.0 L515.1 305.0 L510.2 307.9 L504.1 307.8"/><path d="M520.0 302.0 L518.5 296.0 L515.2 291.0 L510.7 286.6 L507.5 281.6 L506.1 275.5"/><path d="M520.0 302.0 L522.9 296.0 L523.8 289.4 L526.2 283.2"/><path d="M520.0 345.0 L518.5 340.0 L519.2 335.0 L520.4 330.0 L520.2 325.0 L521.0 320.0 L519.8 315.0 L520.0 310.0"/><path d="M520.0 345.0 L521.1 351.3 L521.7 357.7 L523.0 364.0"/><path d="M520.0 345.0 L517.7 343.9 L515.3 343.6"/><path d="M520.0 345.0 L524.2 348.6 L526.9 353.3 L528.3 358.8 L531.8 362.8"/><path d="M303.0 520.0 L303.0 524.0 L303.0 528.0"/><path d="M303.0 520.0 L297.4 517.4 L291.2 517.2"/><path d="M303.0 520.0 L308.5 520.0 L314.0 519.6 L319.5 518.7 L324.9 520.1"/><path d="M303.0 528.0 L299.2 530.5 L295.6 533.3"/><path d="M303.0 528.0 L306.5 532.9 L310.1 537.8 L313.1 543.0 L316.4 548.1"/><path d="M303.0 528.0 L308.9 527.1 L314.7 526.0 L320.1 523.9 L324.9 520.1"/><path d="M478.0 470.0 L471.5 471.3 L465.5 474.4 L459.3 476.6"/><path d="M478.0 470.0 L482.4 473.0 L486.6 476.3 L490.6 479.8 L492.9 485.0 L496.8 488.6 L500.5 492.3"/><path d="M478.0 470.0 L480.2 475.5 L482.2 481.2 L486.0 485.9 L489.7 490.7 L491.6 496.3"/><path d="M724.0 532.0 L722.1 531.4 L720.5 530.1"/><path d="M724.0 532.0 L728.6 534.5 L732.5 537.7 L735.8 541.6 L739.2 545.5"/><path d="M268.0 235.0 L263.9 238.7 L258.7 240.9 L253.9 243.6 L249.8 247.3"/><path d="M268.0 235.0 L272.7 237.5 L278.0 238.9"/><path d="M268.0 235.0 L266.1 240.6 L266.0 246.3 L265.1 252.0 L264.7 257.8 L265.2 263.6"/><path d="M320.0 308.0 L319.5 304.0 L321.1 300.4"/><path d="M320.0 308.0 L316.1 312.8 L313.6 318.4 L310.5 323.7"/><path d="M320.0 308.0 L316.7 303.3 L311.4 300.9"/><path d="M181.0 262.0 L176.0 260.0 L170.6 259.0 L166.0 256.1 L160.8 254.6 L155.8 252.5"/><path d="M181.0 262.0 L186.9 260.7 L192.4 258.5 L197.0 254.4 L202.1 251.5"/><path d="M110.0 293.0 L115.0 294.8 L120.6 295.3 L124.9 299.1 L130.4 299.5 L134.9 302.8 L140.0 304.6 L145.0 306.2"/><path d="M110.0 293.0 L110.9 299.4 L112.5 305.6 L115.5 311.4"/><path d="M110.0 293.0 L114.0 287.7 L117.1 281.7 L121.8 276.9"/><path d="M371.0 446.0 L374.5 441.5 L377.1 436.5 L377.6 430.6 L379.7 425.4 L382.2 420.4 L385.2 415.7"/><path d="M371.0 446.0 L375.8 448.3 L380.1 451.5 L385.5 452.4 L390.1 455.2 L394.7 457.7 L399.7 459.4"/><path d="M306.0 453.0 L305.4 451.9 L305.0 453.1"/><path d="M434.0 342.0 L429.9 339.0 L426.3 335.4 L422.0 332.7 L418.3 329.2 L415.5 324.7"/><path d="M434.0 342.0 L431.1 346.6 L431.0 352.1 L429.5 357.1 L427.9 362.1"/><path d="M434.0 342.0 L428.4 341.8 L422.8 342.0 L417.2 340.7 L411.7 341.5 L406.1 341.6 L400.6 342.7"/><path d="M829.0 425.0 L833.0 420.4 L838.8 418.0 L843.3 414.0"/><path d="M829.0 425.0 L832.3 429.2 L834.9 434.1 L839.7 437.1 L843.5 440.9 L846.8 445.2 L849.4 450.0"/><path d="M850.0 413.0 L851.1 418.0 L851.6 423.1 L852.7 428.1 L852.3 433.3 L852.9 438.3 L852.6 443.5 L854.7 448.4 L853.7 453.6"/><path d="M850.0 413.0 L846.4 412.1 L843.3 414.0"/><path d="M828.0 442.0 L822.3 442.3 L816.9 441.0 L811.4 439.6"/><path d="M828.0 442.0 L824.4 437.7 L822.7 432.3"/><path d="M828.0 450.0 L822.7 446.2 L816.7 443.5 L811.4 439.6"/><path d="M828.0 450.0 L826.3 451.7 L827.7 453.8"/><path d="M828.0 450.0 L832.7 454.7 L835.4 460.6"/><path d="M749.0 393.0 L744.3 395.1 L739.7 397.2 L735.3 399.9 L730.9 402.4 L727.1 406.1 L723.0 409.2 L719.0 412.3 L713.6 413.3"/><path d="M307.0 220.0 L311.1 215.0 L316.2 211.2 L321.6 207.6"/><path d="M307.0 220.0 L306.1 219.8 L305.4 220.3"/><path d="M246.0 238.0 L248.1 242.5 L249.8 247.3"/><path d="M433.0 256.0 L433.1 260.0 L433.0 264.0"/><path d="M433.0 256.0 L437.8 253.8 L443.0 253.7 L447.7 251.3 L452.9 250.7 L457.7 248.4 L463.0 248.8"/><path d="M433.0 256.0 L430.5 258.6 L427.1 259.8"/><path d="M433.0 264.0 L437.0 267.7 L440.7 271.6 L443.9 276.0"/><path d="M433.0 264.0 L429.5 262.6 L427.1 259.8"/><path d="M374.0 208.0 L368.9 206.6 L365.0 203.0"/><path d="M374.0 208.0 L379.2 209.9 L384.4 212.0 L389.7 213.4 L395.2 214.5 L400.2 217.1 L405.6 218.2 L411.2 219.0"/><path d="M374.0 208.0 L376.7 202.7 L381.1 198.5 L383.3 192.8 L387.8 188.7"/><path d="M660.0 467.0 L663.3 462.3 L667.1 458.2 L672.6 456.3 L677.2 453.2 L681.3 449.4"/><path d="M660.0 467.0 L656.1 463.3 L651.2 460.7 L647.7 456.5"/><path d="M660.0 467.0 L653.5 466.6 L647.1 466.1 L640.6 466.1"/><path d="M713.0 474.0 L716.6 474.1 L720.0 472.9"/><path d="M713.0 474.0 L715.2 467.4 L714.5 460.6"/><path d="M713.0 474.0 L706.4 474.7 L699.6 474.5 L693.4 477.5"/><path d="M645.0 583.0 L647.8 584.7 L650.8 583.6"/><path d="M645.0 583.0 L646.7 578.1 L648.1 573.1 L650.0 568.1 L648.6 562.7 L649.0 557.5 L651.2 552.7 L651.1 547.4"/><path d="M527.0 567.0 L528.6 566.8 L529.4 568.3"/><path d="M527.0 567.0 L531.2 564.3 L534.1 560.2"/><path d="M527.0 567.0 L526.1 561.9 L523.7 557.3 L522.5 552.3 L521.2 547.3 L519.4 542.5"/><path d="M527.0 567.0 L522.7 563.9 L518.2 561.1 L513.1 559.8 L508.4 557.7 L503.1 557.1"/><path d="M510.0 505.0 L506.0 501.7 L500.5 501.3 L495.9 499.2 L491.6 496.3"/><path d="M510.0 505.0 L506.3 508.9 L503.8 513.9 L500.2 517.9 L496.9 522.2 L494.3 527.0 L489.4 530.0"/><path d="M510.0 505.0 L512.7 501.5 L513.9 497.2"/><path d="M460.0 356.0 L459.8 349.9 L458.4 344.0 L456.5 338.3"/><path d="M300.0 391.0 L296.6 394.7 L293.4 398.6 L291.0 403.1 L288.6 407.5 L284.6 410.7 L281.4 414.6"/><path d="M300.0 391.0 L305.1 388.3 L309.4 384.3"/><path d="M167.0 424.0 L172.1 424.7 L176.5 427.6 L181.5 428.5"/><path d="M167.0 424.0 L165.5 430.4 L163.8 436.8 L164.9 443.4"/><path d="M141.0 267.0 L139.6 261.7 L136.8 257.0 L133.5 252.6 L132.3 247.2"/><path d="M141.0 267.0 L137.0 263.1 L131.9 260.3 L128.2 256.1 L124.7 251.6"/><path d="M141.0 267.0 L135.9 269.6 L130.7 271.5 L125.1 272.1 L119.4 271.3"/><path d="M237.0 465.0 L238.0 459.6 L236.9 454.5 L234.7 449.4 L235.7 444.0 L235.6 438.7 L234.3 433.6"/><path d="M237.0 465.0 L232.9 468.6 L228.3 471.6 L223.5 474.2"/><path d="M237.0 465.0 L241.9 468.4 L246.2 472.5 L250.3 476.8"/><path d="M399.0 506.0 L403.9 508.0 L409.1 507.1"/><path d="M399.0 513.0 L394.5 516.3 L392.2 521.6 L389.4 526.4 L384.5 529.5 L381.4 534.0 L378.4 538.8 L373.9 542.1"/><path d="M399.0 513.0 L403.8 509.5 L409.1 507.1"/><path d="M483.0 413.0 L484.1 417.0 L483.0 421.0"/><path d="M483.0 413.0 L483.8 407.7 L482.5 402.7 L481.6 397.6 L479.1 392.8 L479.4 387.5 L477.4 382.6 L476.3 377.6 L477.2 372.3"/><path d="M483.0 413.0 L486.9 409.7 L490.0 405.4 L493.5 401.7 L496.8 397.8 L502.1 396.0 L507.0 393.8 L509.8 389.2"/><path d="M483.0 413.0 L484.9 407.7 L487.2 402.5 L489.0 397.2 L487.7 391.2 L487.9 385.5 L490.4 380.3 L491.3 374.8"/><path d="M521.0 430.0 L514.4 428.4 L508.2 425.8"/><path d="M617.0 489.0 L611.1 490.9 L605.0 491.9"/><path d="M617.0 489.0 L622.6 490.1 L628.1 491.7 L633.2 494.5 L638.4 496.9 L643.8 498.7 L649.5 499.6"/><path d="M617.0 489.0 L612.9 485.5 L608.8 481.9 L606.0 477.1"/><path d="M640.0 507.0 L644.0 502.3 L649.5 499.6"/><path d="M640.0 507.0 L636.7 511.4 L632.9 515.4"/><path d="M640.0 507.0 L644.5 510.2 L649.7 511.9"/><path d="M680.0 500.0 L676.1 495.7 L671.8 491.6 L669.5 486.0 L665.2 482.0 L661.3 477.6 L657.4 473.3"/><path d="M680.0 500.0 L676.3 504.8 L671.3 508.0 L666.6 511.6"/><path d="M680.0 500.0 L676.9 504.1 L674.6 508.9 L670.2 511.8"/><path d="M680.0 500.0 L685.2 499.5 L690.4 499.8 L695.6 500.4 L700.7 500.9"/><path d="M783.0 513.0 L787.3 509.0 L792.1 505.6 L798.0 503.8 L802.3 499.8"/><path d="M783.0 513.0 L780.4 516.7 L776.1 518.4"/><path d="M770.0 456.0 L764.8 459.9 L760.6 465.0 L755.7 469.2"/><path d="M770.0 456.0 L771.6 449.8 L770.8 443.4"/><path d="M660.0 377.0 L661.5 371.0 L664.2 365.4 L666.8 359.7 L666.7 353.3"/><path d="M660.0 377.0 L665.8 376.2 L671.5 374.9 L677.3 374.0 L683.0 372.7 L688.0 369.3 L693.1 366.2"/><path d="M660.0 377.0 L663.5 380.9 L667.1 384.5 L672.1 386.1 L675.7 389.9 L680.9 391.2"/><path d="M660.0 377.0 L658.1 382.8 L653.6 387.1 L649.9 391.8 L647.7 397.4"/><path d="M660.0 377.0 L655.0 378.7 L650.4 381.4 L645.8 384.0 L640.4 384.6"/><path d="M660.0 377.0 L661.7 381.9 L662.7 386.9 L664.2 391.9 L663.9 397.1 L663.7 402.4 L665.6 407.2"/><path d="M660.0 377.0 L654.8 375.1 L649.0 374.7 L643.4 373.7 L639.0 369.5"/><path d="M563.0 375.0 L558.1 377.8 L552.3 377.5 L547.2 379.8"/><path d="M563.0 375.0 L567.8 377.0 L572.5 378.8 L577.7 378.6 L582.8 378.2 L587.9 378.1 L592.7 379.9"/><path d="M563.0 375.0 L562.8 380.8 L563.2 386.7 L562.4 392.4 L562.4 398.3 L560.2 403.9 L560.3 409.8"/><path d="M523.0 364.0 L520.4 359.2 L517.7 354.3 L517.2 348.7 L515.3 343.6"/><path d="M523.0 364.0 L520.5 369.1 L518.4 374.5 L515.8 379.5 L513.8 384.9 L509.8 389.2"/><path d="M523.0 364.0 L518.0 366.6 L513.1 369.5 L507.7 370.8 L502.3 372.4 L497.1 374.3 L491.3 374.8"/><path d="M563.0 290.0 L568.3 293.4 L573.0 297.4 L576.7 302.6"/><path d="M563.0 290.0 L565.9 294.4 L569.1 298.7 L571.3 303.6"/><path d="M520.0 255.0 L523.8 250.5 L527.0 245.4 L531.2 241.3 L536.8 238.6 L540.7 234.1"/><path d="M520.0 255.0 L525.3 258.5 L530.7 262.1 L536.0 265.6"/><path d="M465.0 278.0 L459.6 278.8 L454.5 276.3 L449.3 275.6 L443.9 276.0"/><path d="M465.0 278.0 L465.2 283.2 L465.2 288.3 L463.6 293.1 L460.9 297.6"/><path d="M465.0 278.0 L464.8 272.1 L466.0 266.3"/><path d="M465.0 278.0 L460.2 282.8 L456.9 288.8"/><path d="M465.0 278.0 L470.8 277.6 L476.6 276.7"/><path d="M470.0 245.0 L469.0 239.8 L468.2 234.7 L469.0 229.5 L468.0 224.3 L469.1 219.2 L470.0 214.0"/><path d="M470.0 245.0 L474.9 247.0 L480.0 248.4 L485.2 249.8"/><path d="M470.0 245.0 L475.4 243.3 L480.2 240.3 L485.4 238.1 L490.5 235.6 L496.2 234.9 L501.6 233.3"/><path d="M470.0 245.0 L467.9 240.2 L463.8 236.8 L460.6 232.8 L457.8 228.4 L455.2 224.0 L452.3 219.8"/><path d="M470.0 214.0 L475.3 213.5 L480.6 214.2 L485.8 212.8 L491.1 214.3 L496.4 213.4 L501.7 214.7 L507.0 213.3"/><path d="M470.0 214.0 L464.4 216.8 L458.6 219.1 L452.3 219.8"/><path d="M241.0 303.0 L235.4 305.7 L230.8 310.0 L225.9 314.0 L219.6 315.3"/><path d="M262.0 269.0 L259.1 263.5 L254.6 258.9 L250.9 253.8 L249.8 247.3"/><path d="M262.0 269.0 L264.6 266.9 L265.2 263.6"/><path d="M262.0 269.0 L260.6 271.9 L257.4 272.4"/><path d="M333.0 247.0 L337.4 250.2 L340.7 254.5 L344.0 258.8 L347.1 263.3 L351.6 266.3 L356.0 269.5 L360.0 273.0"/><path d="M333.0 247.0 L331.6 251.9 L331.4 257.0 L330.4 262.0 L329.8 267.0 L330.1 272.2 L328.1 277.1"/><path d="M293.0 354.0 L294.9 348.6 L299.1 344.8"/><path d="M293.0 354.0 L297.5 356.3 L301.8 358.7 L306.1 361.3 L310.8 363.3 L315.2 365.7"/><path d="M293.0 354.0 L294.6 359.0 L294.0 364.2 L292.9 369.4 L294.0 374.4 L295.0 379.5"/><path d="M389.0 383.0 L388.4 388.7 L389.9 394.6 L390.0 400.3 L389.6 406.1 L387.8 411.7"/><path d="M389.0 383.0 L383.5 383.3 L377.9 383.5 L372.4 382.8 L366.9 383.4"/><path d="M389.0 383.0 L393.8 378.8 L398.1 374.1 L402.2 369.2"/><path d="M420.0 436.0 L424.0 434.0 L428.4 434.8"/><path d="M420.0 436.0 L417.7 440.9 L413.4 443.9 L410.3 448.1 L407.5 452.5 L403.8 456.1 L399.7 459.4"/><path d="M252.0 499.0 L256.7 496.7 L262.0 495.7 L266.2 492.3"/><path d="M252.0 499.0 L246.4 496.2 L241.3 492.6 L235.0 491.2 L230.0 487.3"/><path d="M252.0 499.0 L250.7 493.5 L250.5 488.0 L250.4 482.4 L250.3 476.8"/><path d="M283.0 556.0 L288.0 553.1 L292.1 549.2 L295.7 544.5 L300.7 541.7"/><path d="M283.0 556.0 L284.6 550.9 L287.4 546.6 L289.3 541.7 L292.3 537.4 L295.6 533.3"/><path d="M283.0 556.0 L282.4 555.7 L282.0 556.2"/><path d="M132.0 432.0 L137.5 434.0 L143.2 435.0 L148.9 436.5 L154.6 437.6 L159.6 440.8 L164.9 443.4"/><path d="M132.0 432.0 L134.8 427.3 L136.9 422.3 L138.5 417.1 L140.4 412.0 L144.0 407.8 L145.5 402.4 L148.9 398.1"/><path d="M104.0 340.0 L107.1 335.1 L110.6 330.4 L113.4 325.4 L117.4 321.1 L121.8 317.3"/><path d="M104.0 340.0 L106.0 335.3 L107.2 330.2 L110.4 326.0 L111.1 320.7 L112.0 315.5 L115.5 311.4"/><path d="M104.0 340.0 L107.3 344.6 L108.5 350.0 L111.5 354.8 L113.1 360.0 L113.3 365.8"/><path d="M245.0 372.0 L241.1 376.7 L237.2 381.5 L232.9 385.9 L229.8 391.3"/><path d="M245.0 372.0 L248.5 367.6 L251.8 363.0 L254.0 357.9 L255.0 352.1 L258.8 347.8 L260.6 342.5 L263.5 337.7"/><path d="M245.0 372.0 L239.8 374.7 L233.8 375.5 L228.5 378.0 L223.7 381.4"/><path d="M245.0 372.0 L247.7 376.9 L250.5 381.7 L255.5 384.8 L258.2 389.7 L262.2 393.6"/><path d="M365.0 203.0 L359.9 205.9 L355.8 209.9 L352.3 214.4 L348.8 219.0 L345.2 223.4 L339.9 226.1 L336.7 230.9"/><path d="M386.0 166.0 L385.0 171.8 L384.8 177.5 L387.5 183.0 L387.8 188.7"/><path d="M615.0 598.0 L619.6 601.9 L623.9 606.1 L625.4 612.3"/><path d="M720.0 570.0 L714.9 574.1 L711.0 579.4"/><path d="M720.0 570.0 L723.2 565.9 L726.1 561.6 L729.3 557.6 L732.5 553.5 L737.1 550.4 L739.2 545.5"/><path d="M720.0 570.0 L719.2 565.0 L718.4 560.0 L719.1 554.9"/><path d="M720.0 577.0 L715.6 578.5 L711.0 579.4"/><path d="M720.0 577.0 L722.9 576.0 L726.0 576.7"/><path d="M722.0 389.0 L718.7 385.1 L717.2 380.0 L714.0 376.0 L710.3 372.4 L708.0 367.7"/><path d="M722.0 389.0 L720.0 393.8 L717.6 398.4 L717.8 403.9 L715.6 408.6 L713.6 413.3"/><path d="M685.0 340.0 L679.3 338.3 L673.5 337.5 L667.8 335.7 L661.7 336.1"/><path d="M685.0 340.0 L681.6 346.1 L676.4 350.9"/><path d="M540.7 234.1 L544.8 237.1 L548.9 240.3 L554.0 241.2 L559.1 242.3 L563.7 244.2 L568.4 246.1 L572.9 248.4 L576.9 251.7"/><path d="M540.7 234.1 L535.8 235.4 L530.7 235.7 L525.7 236.6 L520.7 237.5 L515.6 237.6 L510.5 238.0 L505.9 240.7"/><path d="M450.2 463.1 L447.6 464.9 L444.5 465.7"/><path d="M450.2 463.1 L455.8 465.5 L461.7 467.2 L467.3 469.8"/><path d="M450.2 463.1 L453.2 468.0 L457.0 472.4"/><path d="M249.8 247.3 L250.2 252.6 L251.5 257.7 L254.8 262.2 L256.7 267.1 L257.4 272.4"/><path d="M308.5 477.2 L304.2 481.3 L300.0 485.4 L295.4 489.2 L291.7 493.8 L287.7 498.2"/><path d="M135.4 233.4 L136.1 235.6 L138.3 236.1"/><path d="M370.4 369.4 L370.8 363.2 L373.1 357.5"/><path d="M370.4 369.4 L375.7 369.2 L381.0 368.0 L386.3 369.4 L391.6 367.8 L396.9 367.0 L402.2 369.2"/><path d="M370.4 369.4 L364.2 370.5 L358.6 373.2"/><path d="M338.3 450.3 L335.2 456.3 L333.0 462.5 L332.2 469.1"/><path d="M338.3 450.3 L337.5 445.1 L337.3 439.8 L334.8 434.8 L335.2 429.4 L334.6 424.1 L332.8 419.0"/><path d="M338.3 450.3 L344.1 451.6 L350.0 452.0 L355.9 452.1 L361.7 451.6 L367.5 449.5"/><path d="M338.3 450.3 L333.1 447.9 L328.0 445.5 L322.1 445.6"/><path d="M400.0 240.7 L403.8 239.2 L407.8 239.9"/><path d="M420.9 287.6 L418.7 283.0 L418.9 277.7 L416.2 273.2 L415.9 268.1 L414.0 263.4 L414.6 258.0 L412.5 253.3"/><path d="M420.9 287.6 L418.0 293.4 L414.1 298.6"/><path d="M420.9 287.6 L421.8 282.0 L423.5 276.5 L424.0 270.8 L424.5 265.1 L427.1 259.8"/><path d="M619.2 463.7 L622.5 469.2 L627.9 472.8"/><path d="M619.2 463.7 L622.9 462.9 L624.9 459.8"/><path d="M380.5 345.6 L385.6 347.2 L390.8 348.1 L396.0 348.0 L401.2 346.3"/><path d="M400.6 465.7 L396.5 462.2 L391.2 461.0 L386.9 457.8 L381.7 456.4 L376.4 455.3 L371.5 453.2 L367.5 449.5"/><path d="M400.6 465.7 L400.5 465.1 L400.4 464.4"/><path d="M400.6 465.7 L405.3 468.0 L410.1 469.8 L415.1 471.2 L420.1 472.6 L424.9 474.6"/><path d="M504.1 307.8 L500.9 303.2 L498.5 298.3 L497.6 292.6 L494.7 287.9 L490.9 283.7 L489.4 278.3"/><path d="M504.1 307.8 L506.6 312.6 L508.4 317.6 L509.3 323.0 L511.4 327.9 L511.2 333.6 L511.7 339.1 L515.3 343.6"/><path d="M199.2 473.5 L195.1 469.4 L192.1 464.3 L188.4 459.8 L183.6 456.2 L181.3 450.6 L177.0 446.6"/><path d="M199.2 473.5 L204.8 476.4 L210.4 479.1 L216.8 479.7"/><path d="M199.2 473.5 L200.9 470.8 L203.4 468.8"/><path d="M597.2 371.1 L600.3 366.3 L605.5 363.4 L609.1 359.1 L612.4 354.5"/><path d="M597.2 371.1 L601.7 375.5 L606.8 379.1 L612.2 382.2 L617.8 385.2"/><path d="M597.2 371.1 L593.0 366.7 L590.1 361.3 L587.5 355.8 L583.1 351.6"/><path d="M326.6 563.9 L321.7 562.4 L316.7 561.4 L312.7 557.7 L308.3 554.9 L302.8 555.0"/><path d="M326.6 563.9 L332.9 564.7 L339.3 565.4 L345.6 566.5"/><path d="M627.9 472.8 L630.9 477.8 L634.2 482.5 L638.7 486.2 L641.6 491.2 L644.6 496.2 L649.5 499.6"/><path d="M627.9 472.8 L633.4 473.4 L638.3 475.6 L643.1 478.3 L648.3 479.9 L653.7 480.7"/><path d="M639.5 517.3 L636.6 514.9 L632.9 515.4"/><path d="M514.8 475.6 L517.4 469.2 L519.4 462.6"/><path d="M514.8 475.6 L512.5 480.8 L507.4 483.8 L504.2 488.2 L500.5 492.3"/><path d="M514.8 475.6 L515.0 479.5 L517.5 482.4"/><path d="M357.6 167.1 L357.2 172.6 L358.8 177.8"/><path d="M357.6 167.1 L362.2 169.6 L367.0 171.8 L371.7 174.2 L375.2 178.5 L379.9 180.8"/><path d="M357.6 167.1 L358.9 162.1 L360.2 157.1 L362.7 152.6 L366.0 148.5"/><path d="M300.7 541.7 L301.9 548.3 L302.8 555.0"/><path d="M278.0 238.9 L282.4 235.5 L286.7 231.9 L291.9 229.5 L295.4 225.0"/><path d="M581.9 557.5 L575.8 559.6 L569.5 560.8"/><path d="M581.9 557.5 L586.6 555.0 L590.2 551.1 L592.6 546.2 L596.0 542.3 L600.5 539.5"/><path d="M581.9 557.5 L587.6 559.4 L593.6 558.4 L599.5 559.2"/><path d="M443.6 417.1 L440.8 422.4 L437.7 427.5 L433.1 431.1 L428.4 434.8"/><path d="M443.6 417.1 L448.7 418.7 L452.4 422.4 L456.5 425.6 L461.6 427.0 L465.3 430.9 L468.9 434.8 L474.0 436.4"/><path d="M443.6 417.1 L441.3 412.4 L438.5 407.8 L437.5 402.4 L435.3 397.6 L432.6 393.0"/><path d="M443.6 417.1 L442.2 412.0 L438.8 407.6 L437.9 402.3 L437.3 396.8 L433.9 392.5"/><path d="M517.8 400.5 L522.2 397.8 L526.8 395.4 L530.3 391.4 L534.0 387.8 L538.8 385.7 L543.8 383.9 L547.2 379.8"/><path d="M122.7 246.7 L123.6 245.2 L125.3 244.9"/><path d="M122.7 246.7 L118.9 246.7 L115.7 248.9"/><path d="M122.7 246.7 L124.2 249.0 L124.7 251.6"/><path d="M175.2 306.3 L170.1 306.5 L165.1 306.9 L160.1 306.7 L155.1 308.0 L150.1 306.2 L145.0 306.2"/><path d="M175.2 306.3 L171.2 302.2 L169.1 296.9 L167.2 291.5 L164.6 286.5 L161.4 282.0 L158.5 277.1 L154.1 273.3"/><path d="M175.2 306.3 L177.4 312.3 L181.9 316.9"/><path d="M175.2 306.3 L175.2 300.6 L174.2 295.2 L172.1 290.0 L172.2 284.3 L169.8 279.2 L169.4 273.6 L167.7 268.3"/><path d="M373.1 357.5 L374.6 353.1 L377.2 349.3"/><path d="M373.1 357.5 L378.5 358.1 L383.1 360.7 L387.8 362.9 L392.7 364.8 L397.1 367.9 L402.2 369.2"/><path d="M373.1 357.5 L368.7 360.8 L366.5 366.0 L363.3 370.3 L358.6 373.2"/><path d="M607.3 469.5 L605.2 464.4 L604.0 459.1 L605.0 453.5"/><path d="M607.3 469.5 L605.5 473.1 L606.0 477.1"/><path d="M607.3 469.5 L602.2 473.7 L596.6 476.9 L590.5 479.2"/><path d="M607.3 469.5 L601.6 471.5 L595.7 472.8 L590.0 474.5 L583.9 475.1"/><path d="M605.5 407.5 L604.8 407.1 L605.0 406.3"/><path d="M605.5 407.5 L603.3 412.9 L600.8 418.1 L596.4 421.8 L591.7 425.5 L587.4 429.3 L585.5 434.9"/><path d="M180.8 405.6 L181.3 411.3 L179.8 417.1 L179.6 422.8 L181.5 428.5"/><path d="M180.8 405.6 L185.9 408.8 L191.0 412.2"/><path d="M332.2 469.1 L329.6 474.1 L326.6 478.8 L324.1 483.9 L321.0 488.5"/><path d="M332.2 469.1 L337.0 467.3 L341.9 465.8 L346.2 463.3 L350.2 460.0 L354.1 456.6 L358.0 453.3 L363.3 452.4 L367.5 449.5"/><path d="M424.8 361.2 L426.5 361.1 L427.9 362.1"/><path d="M424.8 361.2 L423.7 366.4 L423.7 371.7 L422.9 376.9 L421.7 382.1 L420.8 387.3 L421.2 392.7"/><path d="M666.7 353.3 L661.5 349.9 L657.2 345.4 L652.8 340.9"/><path d="M666.7 353.3 L671.9 353.6 L676.4 350.9"/><path d="M666.7 353.3 L660.6 353.0 L655.0 355.0 L649.3 356.5 L643.7 358.9 L637.7 358.4"/><path d="M693.1 366.2 L689.8 370.8 L686.7 375.4 L683.9 380.3 L683.6 386.3 L680.9 391.2"/><path d="M693.1 366.2 L698.1 366.3 L703.2 365.4 L708.0 367.7"/><path d="M693.1 366.2 L690.3 371.8 L689.8 378.1 L689.0 384.2 L686.7 390.0"/><path d="M125.8 340.1 L131.1 337.4 L136.5 335.1 L142.0 332.8 L146.9 329.5"/><path d="M125.8 340.1 L124.1 345.6 L124.3 351.5 L121.6 356.6 L121.1 362.3 L119.0 367.6"/><path d="M672.4 557.9 L667.6 561.2 L663.5 565.1 L659.5 569.0 L655.8 573.2 L653.8 578.8 L650.8 583.6"/><path d="M672.4 557.9 L677.5 558.2 L682.6 557.6 L687.8 557.1 L692.9 558.3"/><path d="M672.4 557.9 L674.4 555.2 L675.0 551.8"/><path d="M672.4 557.9 L667.6 554.2 L662.4 551.3 L656.4 550.1 L651.1 547.4"/><path d="M672.4 557.9 L673.9 563.2 L674.2 568.5 L674.6 573.9"/><path d="M290.6 450.8 L295.9 450.2 L300.7 447.8 L306.2 448.2 L311.0 445.6"/><path d="M290.6 450.8 L290.4 445.7 L290.8 440.5 L288.0 435.8"/><path d="M290.6 450.8 L298.0 450.9 L305.0 453.1"/><path d="M628.0 616.0 L629.9 610.5 L632.3 605.2 L636.4 601.0 L639.2 596.1 L643.7 592.2 L647.1 587.6"/><path d="M628.0 616.0 L626.8 614.1 L625.4 612.3"/><path d="M645.8 342.8 L642.6 348.0 L637.9 352.0 L634.6 357.0"/><path d="M645.8 342.8 L640.6 343.1 L635.8 344.7 L631.4 347.6 L626.4 348.7 L621.7 350.6 L616.6 351.4 L612.4 354.5"/><path d="M290.0 255.5 L294.0 259.3 L299.6 260.7 L303.8 264.2 L308.3 267.3 L312.2 271.2 L317.5 273.1"/><path d="M290.0 255.5 L288.3 262.0 L289.8 268.6"/><path d="M290.0 255.5 L294.8 260.2 L298.4 265.8 L301.3 271.8"/><path d="M251.6 528.0 L246.7 525.2 L241.8 522.2 L236.8 519.7 L231.0 518.8"/><path d="M251.6 528.0 L254.7 522.0 L258.5 516.6 L263.0 511.6"/><path d="M155.8 252.5 L159.8 249.3 L163.9 246.2 L168.4 244.1 L173.4 242.8 L178.2 241.3 L182.7 239.0 L187.7 237.7 L191.5 234.2"/><path d="M232.2 216.2 L235.8 215.4 L238.6 212.8"/><path d="M232.2 216.2 L234.4 220.7 L236.8 225.1 L239.0 229.7 L241.8 233.9"/><path d="M232.2 216.2 L228.0 220.5 L222.9 223.8 L219.3 228.6 L214.6 232.4"/><path d="M658.8 425.9 L663.4 426.2 L667.7 424.4"/><path d="M658.8 425.9 L656.4 421.3 L654.8 416.5 L654.2 411.3 L652.8 406.3 L649.3 402.3 L647.7 397.4"/><path d="M658.8 425.9 L657.1 430.0 L654.6 433.8"/><path d="M658.8 425.9 L653.3 426.8 L648.2 429.2 L642.8 430.2 L637.1 429.6 L631.9 432.2 L626.3 432.1"/><path d="M658.8 425.9 L659.8 419.2 L663.1 413.4 L665.6 407.2"/><path d="M607.0 578.7 L611.5 574.5 L615.9 570.2 L619.6 565.3"/><path d="M607.0 578.7 L604.6 574.1 L603.5 568.9 L600.8 564.3 L599.5 559.2"/><path d="M607.0 578.7 L612.6 578.1 L618.0 578.2 L623.5 578.5 L628.7 580.8"/><path d="M229.8 391.3 L227.6 393.2 L225.9 395.4"/><path d="M647.1 587.6 L649.5 586.1 L650.8 583.6"/><path d="M647.1 587.6 L644.2 592.4 L640.4 596.3 L635.5 599.3 L632.3 603.8 L628.8 608.0 L625.4 612.3"/><path d="M647.1 587.6 L641.3 584.5 L635.0 582.7 L628.7 580.8"/><path d="M647.1 587.6 L651.4 584.8 L656.1 582.7 L660.3 579.7 L664.6 576.9 L669.7 575.7 L674.6 573.9"/><path d="M485.2 249.8 L487.1 255.3 L488.4 261.0 L490.0 266.5 L490.6 272.3 L489.4 278.3"/><path d="M485.2 249.8 L491.2 250.0 L497.2 250.6 L502.3 254.5"/><path d="M485.2 249.8 L484.3 255.4 L481.0 260.3 L480.7 266.2 L477.3 271.0 L476.6 276.7"/><path d="M549.8 595.6 L549.5 592.9 L550.0 590.4"/><path d="M343.8 593.8 L343.7 588.3 L344.0 582.8 L345.8 577.5 L346.8 572.1 L345.6 566.5"/><path d="M796.7 420.8 L802.5 424.9 L808.6 428.8"/><path d="M796.7 420.8 L796.5 427.2 L796.2 433.7"/><path d="M461.2 202.0 L461.3 196.1 L460.1 190.5 L458.7 185.0 L458.0 179.3 L454.2 174.4"/><path d="M564.7 487.1 L564.6 480.5 L567.4 474.6"/><path d="M564.7 487.1 L570.4 490.5 L575.2 495.1"/><path d="M308.3 398.2 L307.6 404.2 L307.5 410.2 L307.2 416.3 L307.6 422.3"/><path d="M308.3 398.2 L304.6 402.3 L299.3 403.7 L295.2 407.0 L290.0 408.5 L286.2 412.5 L281.4 414.6"/><path d="M308.3 398.2 L305.6 402.6 L303.7 407.4 L301.0 411.7 L298.6 416.3 L298.1 421.6"/><path d="M308.3 398.2 L309.0 391.3 L309.4 384.3"/><path d="M387.8 411.7 L392.8 407.4 L398.7 404.4 L404.3 400.9"/><path d="M387.8 411.7 L389.8 412.9 L391.9 412.1"/><path d="M809.0 507.8 L812.2 503.0 L815.6 498.2 L819.2 493.8 L822.6 489.1 L826.2 484.5 L831.6 481.5"/><path d="M809.0 507.8 L813.9 504.2 L818.1 500.1 L820.7 494.6 L825.0 490.5 L827.9 485.3"/><path d="M809.0 507.8 L805.3 504.1 L802.3 499.8"/><path d="M105.3 287.9 L107.8 292.4 L109.8 297.1 L112.2 301.7 L114.6 306.2 L115.5 311.4"/><path d="M105.3 287.9 L102.2 282.2 L100.5 275.9"/><path d="M238.6 212.8 L238.9 218.2 L239.4 223.5 L239.6 228.8 L241.8 233.9"/><path d="M238.6 212.8 L243.5 211.0 L248.7 209.8 L253.1 206.9 L258.5 206.1 L262.6 202.5 L267.4 200.4"/><path d="M209.9 353.4 L208.0 349.7 L205.4 346.4"/><path d="M209.9 353.4 L214.3 348.6 L220.3 345.8 L225.2 341.6"/><path d="M209.9 353.4 L204.4 357.8 L198.7 362.0"/><path d="M209.9 353.4 L210.3 346.9 L208.2 340.8"/><path d="M680.8 508.3 L685.3 505.2 L690.2 503.0 L695.7 502.5 L700.7 500.9"/><path d="M231.0 518.8 L225.6 516.6 L220.6 513.2 L214.8 511.9 L210.2 507.9 L204.5 506.2"/><path d="M231.0 518.8 L235.5 521.7 L239.4 525.4 L243.4 528.9 L248.1 531.5"/><path d="M231.0 518.8 L229.3 513.6 L228.8 508.3 L228.3 503.1 L229.9 497.8 L228.3 492.6 L230.0 487.3"/><path d="M257.3 395.8 L252.1 396.2 L246.8 395.4 L241.6 396.2 L236.4 394.8 L231.1 394.5 L225.9 395.4"/><path d="M257.3 395.8 L253.9 400.6 L253.2 406.5 L250.2 411.6 L248.6 417.1 L246.9 422.7 L244.8 428.1"/><path d="M257.3 395.8 L259.1 393.3 L262.2 393.6"/><path d="M181.5 428.5 L184.3 422.8 L187.9 417.7 L191.0 412.2"/><path d="M181.5 428.5 L180.2 434.6 L178.0 440.4 L177.0 446.6"/><path d="M181.5 428.5 L176.2 424.5 L170.0 421.6 L165.8 416.2"/><path d="M605.0 453.5 L600.0 452.2 L595.6 449.5 L590.3 449.0 L585.2 448.2 L580.2 446.9 L576.0 443.4"/><path d="M605.0 453.5 L610.0 450.1 L615.7 447.8 L621.1 445.1 L625.0 440.1"/><path d="M227.4 474.9 L221.9 476.8 L216.8 479.7"/><path d="M227.4 474.9 L225.7 473.1 L223.5 474.2"/><path d="M227.4 474.9 L233.2 475.0 L239.0 474.1 L244.5 476.5 L250.3 476.8"/><path d="M710.5 494.1 L714.6 497.3 L718.1 501.3 L722.7 504.0 L726.3 507.8 L730.5 511.0"/><path d="M710.5 494.1 L707.8 492.0 L705.8 489.2"/><path d="M657.4 473.3 L655.8 477.1 L653.7 480.7"/><path d="M657.4 473.3 L651.6 471.4 L646.4 467.9 L640.6 466.1"/><path d="M305.4 333.1 L304.9 338.2 L304.1 343.1 L301.7 347.7"/><path d="M680.9 391.2 L681.3 398.7 L681.6 406.2"/><path d="M576.0 443.4 L581.3 439.8 L585.5 434.9"/><path d="M576.0 443.4 L576.7 448.9 L578.2 454.1 L579.9 459.3 L581.6 464.5 L581.5 470.1 L583.9 475.1"/><path d="M576.0 443.4 L570.5 443.2 L565.2 445.1 L559.7 445.1 L554.2 444.7 L548.7 444.0 L543.5 446.3"/><path d="M272.1 205.6 L275.6 209.3 L280.3 211.5 L283.5 215.6 L287.0 219.3 L292.2 221.0 L295.4 225.0"/><path d="M272.1 205.6 L268.7 203.9 L267.4 200.4"/><path d="M157.0 403.4 L162.9 399.3 L167.0 393.3"/><path d="M157.0 403.4 L157.5 408.8 L155.2 413.8 L154.8 419.1 L153.4 424.2 L152.8 429.4"/><path d="M157.0 403.4 L160.2 407.5 L164.2 411.0 L165.8 416.2"/><path d="M725.8 544.5 L720.4 549.5 L713.5 552.0"/><path d="M725.8 544.5 L719.6 545.3 L713.2 544.9 L707.3 547.6"/><path d="M701.8 562.2 L707.0 561.4 L712.2 561.2 L717.3 560.2"/><path d="M701.8 562.2 L701.2 560.2 L702.8 558.9"/><path d="M701.8 562.2 L705.7 567.5 L707.4 573.9 L711.0 579.4"/><path d="M701.8 562.2 L697.5 559.9 L692.9 558.3"/><path d="M756.3 487.9 L761.0 485.6 L764.7 481.7 L768.9 478.7 L774.2 477.6"/><path d="M756.3 487.9 L756.7 493.6 L759.2 498.9 L759.6 504.6 L759.2 510.4 L761.1 515.9"/><path d="M756.3 487.9 L760.5 491.3 L764.4 494.9 L768.1 498.8 L771.7 502.8 L774.7 507.4"/><path d="M756.3 487.9 L761.2 490.8 L766.7 491.3 L772.1 492.3 L777.4 493.6"/><path d="M666.6 511.6 L662.1 508.9 L658.6 504.9 L654.0 502.3 L649.5 499.6"/><path d="M666.6 511.6 L660.9 510.7 L655.4 508.7 L649.7 507.8"/><path d="M667.7 424.4 L673.1 422.8 L678.8 424.2 L684.4 425.0 L689.9 423.7 L695.5 424.5 L700.9 422.9"/><path d="M667.7 424.4 L667.5 418.6 L667.6 412.8 L665.6 407.2"/><path d="M647.7 397.4 L642.4 397.5 L637.1 397.2"/><path d="M525.8 279.3 L526.1 281.3 L526.2 283.2"/><path d="M529.4 568.3 L534.8 570.1 L540.2 572.1 L545.5 574.4 L550.5 577.3"/><path d="M529.4 568.3 L526.7 572.9 L526.6 578.3 L524.9 583.2"/><path d="M529.4 568.3 L522.5 570.2 L516.5 574.0"/><path d="M529.4 568.3 L531.1 574.5 L535.0 579.7 L537.1 585.8"/><path d="M191.0 412.2 L191.4 418.4 L190.5 424.6 L191.7 430.7"/><path d="M196.6 383.1 L201.7 383.6 L206.5 381.5 L211.5 380.6 L216.6 381.2"/><path d="M196.6 383.1 L191.9 381.1 L186.6 381.2 L181.9 379.1 L176.7 378.8 L171.8 377.4 L167.5 374.1"/><path d="M321.6 207.6 L315.3 205.0 L308.5 204.3"/><path d="M321.6 207.6 L319.9 201.9 L317.0 196.7 L315.9 190.8 L311.5 186.3 L309.5 180.7"/><path d="M205.4 346.4 L199.8 346.7 L194.5 348.5 L189.1 349.7 L183.8 351.7 L178.1 350.8 L172.6 351.6 L167.1 352.3"/><path d="M205.4 346.4 L201.4 342.8 L196.6 340.0 L192.8 336.3 L190.2 331.3 L186.1 327.8"/><path d="M278.6 465.6 L280.4 460.5 L280.8 454.9 L283.5 450.0"/><path d="M278.6 465.6 L273.5 470.2 L270.6 476.5"/><path d="M202.1 251.5 L207.2 253.5 L212.3 255.0 L217.2 257.5 L222.9 256.8"/><path d="M202.1 251.5 L197.2 254.2 L193.3 258.2 L188.8 261.4 L185.7 266.3 L181.3 269.6"/><path d="M202.1 251.5 L205.4 246.8 L209.2 242.5 L212.9 238.1 L214.6 232.4"/><path d="M650.8 583.6 L649.3 578.4 L650.6 573.2 L649.3 568.1 L648.5 562.9 L649.1 557.7 L650.9 552.6 L651.1 547.4"/><path d="M650.8 583.6 L655.6 581.7 L660.1 579.3 L665.3 578.4 L669.9 576.1 L674.6 573.9"/><path d="M274.8 560.3 L278.8 558.9 L282.0 556.2"/><path d="M274.8 560.3 L275.5 558.7 L275.8 557.0"/><path d="M333.9 516.4 L336.8 521.3 L339.8 526.0 L344.3 529.4 L348.4 533.2 L353.4 536.1 L356.6 540.6"/><path d="M333.9 516.4 L333.7 514.5 L332.3 513.2"/><path d="M333.9 516.4 L339.1 517.4 L343.9 519.8 L349.3 519.8 L354.5 520.6 L359.5 522.4"/><path d="M540.5 310.2 L543.2 309.3 L545.7 310.6"/><path d="M540.5 310.2 L538.5 305.4 L535.5 301.3 L532.2 297.3 L530.4 292.5 L529.2 287.4 L526.2 283.2"/><path d="M540.5 310.2 L541.3 316.0 L543.5 321.3 L545.4 326.8 L546.3 332.6 L549.0 337.8"/><path d="M782.6 478.9 L777.3 476.5 L772.5 473.6 L769.2 468.7"/><path d="M782.6 478.9 L786.8 475.0 L792.6 474.4 L797.2 471.3 L802.4 469.6 L807.3 467.2 L811.8 464.1"/><path d="M332.8 419.0 L338.1 417.8 L343.4 419.0 L348.7 417.8 L354.0 417.8 L359.3 418.7 L364.6 419.3 L369.9 418.0"/><path d="M332.8 419.0 L331.9 424.9 L328.9 429.8 L327.1 435.3 L324.0 440.2 L322.1 445.6"/><path d="M313.2 278.6 L314.3 275.1 L317.5 273.1"/><path d="M313.2 278.6 L307.9 274.0 L301.3 271.8"/><path d="M313.2 278.6 L313.6 284.2 L311.5 289.7 L311.2 295.2 L311.4 300.9"/><path d="M165.5 351.8 L164.8 346.5 L162.6 341.7"/><path d="M165.5 351.8 L164.2 355.5 L163.3 359.2"/><path d="M278.6 356.6 L275.6 360.8 L273.1 365.2 L270.2 369.5 L268.3 374.2 L267.7 379.4 L265.6 384.1 L265.2 389.4 L262.2 393.6"/><path d="M278.6 356.6 L277.2 351.6 L274.8 347.2 L272.1 342.9 L269.4 338.5"/><path d="M162.6 341.7 L156.5 338.7 L151.0 335.1 L146.9 329.5"/><path d="M162.6 341.7 L165.2 346.8 L167.1 352.3"/><path d="M552.3 337.2 L550.4 336.0 L549.0 337.8"/><path d="M811.4 439.6 L815.0 443.7 L819.5 446.8 L824.4 449.3 L827.7 453.8"/><path d="M811.4 439.6 L812.5 445.7 L813.7 451.8 L813.2 457.9 L811.8 464.1"/><path d="M567.4 474.6 L562.0 475.7 L556.9 477.5 L551.3 477.5"/><path d="M762.8 540.8 L756.9 542.0 L750.9 542.8 L745.2 544.7 L739.2 545.5"/><path d="M762.8 540.8 L759.1 546.1 L755.0 551.1"/><path d="M762.8 540.8 L764.5 535.7 L767.8 531.6 L770.6 527.2 L774.3 523.4 L776.1 518.4"/><path d="M121.8 317.3 L126.7 315.5 L131.8 314.2 L135.9 310.9 L141.1 310.0 L145.0 306.2"/><path d="M121.8 317.3 L125.8 318.5 L128.1 321.9"/><path d="M769.0 557.8 L767.5 556.5 L768.4 554.8"/><path d="M769.0 557.8 L765.1 562.0 L759.5 564.0 L754.9 567.2 L751.7 572.3 L747.1 575.6 L742.4 578.8"/><path d="M632.3 375.5 L627.5 378.8 L623.2 382.8 L617.8 385.2"/><path d="M216.6 381.2 L213.8 386.3 L211.3 391.5 L207.4 395.8"/><path d="M216.6 381.2 L220.2 380.7 L223.7 381.4"/><path d="M216.6 381.2 L213.4 377.1 L208.9 374.1 L206.3 369.4 L202.9 365.4 L198.7 362.0"/><path d="M216.6 381.2 L219.9 385.8 L223.2 390.4 L225.9 395.4"/><path d="M216.6 381.2 L210.8 385.7 L205.5 390.7"/><path d="M266.8 568.4 L262.9 564.2 L258.7 560.3 L255.0 556.0 L252.2 550.9"/><path d="M334.0 344.3 L339.9 342.9 L345.8 341.9"/><path d="M427.5 481.6 L423.7 485.8 L421.5 490.8 L418.8 495.6 L417.1 500.9"/><path d="M427.5 481.6 L432.8 481.1 L437.9 478.7 L443.1 477.3 L448.5 476.8 L454.0 477.6 L459.3 476.6"/><path d="M427.5 481.6 L428.4 486.9 L427.3 492.2 L428.2 497.5 L427.7 502.9 L428.2 508.2 L428.5 513.5"/><path d="M466.5 530.1 L468.4 537.3 L471.3 544.0"/><path d="M466.5 530.1 L461.8 527.9 L457.3 525.3 L452.0 524.6 L447.4 522.0 L442.7 519.8 L437.8 518.1 L432.7 516.9 L428.5 513.5"/><path d="M369.9 418.0 L369.1 416.9 L370.2 416.1"/><path d="M369.9 418.0 L365.1 415.7 L359.8 415.7 L354.4 415.8 L349.2 415.3 L344.7 412.0 L339.5 411.6 L334.7 409.3"/><path d="M369.9 418.0 L367.9 423.2 L366.9 428.4 L367.0 433.6 L368.3 439.0 L368.0 444.3 L367.5 449.5"/><path d="M369.9 418.0 L375.1 418.5 L380.1 416.6 L385.2 415.7"/><path d="M708.0 367.7 L706.1 361.9 L704.0 356.2 L699.4 351.8"/><path d="M317.5 273.1 L322.4 276.0 L328.1 277.1"/><path d="M489.4 278.3 L485.3 282.5 L480.9 286.2 L476.4 289.8 L471.2 292.4 L465.7 294.5 L460.9 297.6"/><path d="M489.4 278.3 L491.3 273.2 L494.1 268.5 L496.2 263.5 L499.7 259.2 L502.3 254.5"/><path d="M700.9 422.9 L705.0 419.5 L708.9 415.8 L713.6 413.3"/><path d="M700.9 422.9 L695.5 425.2 L690.2 427.9 L686.4 432.6 L682.7 437.5 L677.3 439.9"/><path d="M700.9 422.9 L702.5 424.6 L701.1 426.5"/><path d="M225.2 341.6 L225.5 336.0 L222.4 331.2 L220.8 326.0 L219.5 320.8 L219.6 315.3"/><path d="M531.3 503.8 L526.2 506.0 L521.5 508.6 L517.2 511.9 L513.8 516.3"/><path d="M531.3 503.8 L534.7 499.5 L538.0 495.1 L539.7 489.7"/><path d="M531.3 503.8 L534.0 510.5 L537.2 516.9"/><path d="M409.6 387.4 L415.8 389.3 L421.2 392.7"/><path d="M409.6 387.4 L407.7 381.1 L406.2 374.6 L402.2 369.2"/><path d="M373.9 542.1 L372.2 535.5 L371.6 528.7"/><path d="M373.9 542.1 L376.7 536.7 L378.0 530.7 L378.5 524.6 L381.0 519.0"/><path d="M266.2 300.6 L266.6 306.7 L265.9 313.0 L267.4 319.1"/><path d="M266.2 300.6 L268.5 298.1 L268.2 294.7"/><path d="M266.2 300.6 L269.7 299.6 L272.9 301.3"/><path d="M507.0 213.3 L505.8 218.3 L505.6 223.7 L504.8 228.8 L501.6 233.3"/><path d="M93.9 247.0 L91.2 244.6 L88.6 242.1"/><path d="M93.9 247.0 L90.4 245.7 L87.8 242.8"/><path d="M93.9 247.0 L99.3 248.3 L104.7 249.7 L110.2 249.1 L115.7 248.9"/><path d="M637.1 397.2 L640.3 391.3 L640.4 384.6"/><path d="M637.1 397.2 L632.9 393.2 L628.6 389.3 L623.8 386.3 L617.8 385.2"/><path d="M307.6 422.3 L302.9 421.6 L298.1 421.6"/><path d="M307.6 422.3 L307.7 428.2 L308.3 434.1 L308.7 439.9 L311.0 445.6"/><path d="M145.0 306.2 L138.9 305.8 L133.3 308.4 L127.6 310.7 L121.5 310.9 L115.5 311.4"/><path d="M383.2 488.5 L388.7 492.0 L394.8 494.3"/><path d="M383.2 488.5 L381.4 493.5 L377.2 496.9 L373.7 500.7 L369.7 504.3 L367.1 508.8 L365.8 514.2 L363.4 518.8 L359.5 522.4"/><path d="M345.8 341.9 L341.5 337.7 L339.1 332.5 L336.3 327.5 L334.1 322.1"/><path d="M345.8 341.9 L350.4 339.4 L355.5 339.1 L360.5 338.0"/><path d="M345.8 341.9 L347.6 337.1 L350.1 332.5 L349.7 327.0 L352.0 322.3"/><path d="M536.0 265.6 L540.8 268.4 L545.1 271.7 L547.8 276.5 L552.0 279.9 L554.2 285.3 L558.4 288.6"/><path d="M513.8 516.3 L518.9 515.4 L523.8 516.6 L528.9 516.6 L533.6 518.9"/><path d="M513.8 516.3 L515.5 522.5 L515.3 529.0"/><path d="M138.3 236.1 L134.4 241.1 L132.3 247.2"/><path d="M167.0 393.3 L161.4 396.5 L155.3 397.8 L148.9 398.1"/><path d="M167.0 393.3 L173.3 392.7 L179.6 391.3 L186.0 391.2"/><path d="M207.4 395.8 L202.3 393.6 L196.6 393.8 L191.2 392.9 L186.0 391.2"/><path d="M303.3 504.9 L298.4 502.0 L293.0 500.2 L287.7 498.2"/><path d="M303.3 504.9 L308.0 507.4 L312.5 510.2 L317.3 512.6 L320.8 516.8 L324.9 520.1"/><path d="M204.5 506.2 L207.8 501.8 L213.1 500.0 L217.1 496.6 L221.1 493.1 L224.9 489.3 L230.0 487.3"/><path d="M625.0 440.1 L630.7 440.2 L636.5 439.6 L642.1 442.0 L647.8 441.6"/><path d="M625.0 440.1 L625.6 446.6 L625.0 453.2 L624.9 459.8"/><path d="M741.5 491.6 L740.1 497.2 L737.3 502.0 L734.1 506.6 L730.5 511.0"/><path d="M605.0 491.9 L600.9 486.8 L596.5 482.1 L590.5 479.2"/><path d="M241.8 233.9 L244.4 239.5 L244.4 245.7"/><path d="M146.9 329.5 L142.4 327.2 L137.6 325.7 L132.9 323.7 L128.1 321.9"/><path d="M146.9 329.5 L150.8 334.5 L153.5 340.1 L155.6 346.0"/><path d="M731.0 438.4 L728.4 434.0 L726.0 429.5 L722.9 425.5 L720.6 420.9 L718.4 416.2 L713.6 413.3"/><path d="M731.0 438.4 L730.3 444.3 L730.9 450.1 L730.3 456.0 L732.3 461.7 L733.3 467.5 L733.2 473.3"/><path d="M717.3 560.2 L716.7 555.5 L713.5 552.0"/><path d="M404.3 400.9 L400.4 404.9 L396.9 409.3 L391.9 412.1"/><path d="M444.5 465.7 L440.9 461.0 L437.9 456.1 L434.5 451.3 L433.4 445.3 L431.2 439.9 L428.4 434.8"/><path d="M444.5 465.7 L439.2 466.9 L434.5 469.7 L429.4 471.4 L424.9 474.6"/><path d="M755.7 469.2 L759.8 472.4 L764.8 473.7 L769.0 476.7 L774.2 477.6"/><path d="M281.4 414.6 L286.4 418.4 L292.7 419.0 L298.1 421.6"/><path d="M281.4 414.6 L279.8 409.1 L276.7 404.4 L272.8 400.2"/><path d="M281.4 414.6 L283.6 421.5 L288.3 427.0"/><path d="M441.1 199.1 L440.8 193.5 L442.3 188.3 L444.6 183.3 L446.3 178.2 L448.1 173.1 L448.0 167.5"/><path d="M163.3 359.2 L164.5 364.3 L165.4 369.4 L167.5 374.1"/><path d="M163.3 359.2 L157.2 358.2 L151.6 355.7 L146.4 352.1 L140.6 350.3"/><path d="M826.1 482.4 L822.8 477.6 L819.6 472.8 L816.9 467.5 L811.8 464.1"/><path d="M826.1 482.4 L829.1 477.2 L830.4 471.3 L832.4 465.8 L835.4 460.6"/><path d="M654.6 433.8 L648.9 434.6 L643.2 435.2 L637.6 434.2 L631.9 433.2 L626.3 432.1"/><path d="M344.3 374.7 L340.2 378.7 L336.2 382.8 L332.6 387.3"/><path d="M344.3 374.7 L341.8 370.0 L341.9 364.5 L341.5 359.2 L338.2 354.8 L336.7 349.8"/><path d="M344.3 374.7 L346.7 373.9 L346.4 371.5"/><path d="M344.3 374.7 L350.2 375.9 L356.1 377.5 L362.0 378.9"/><path d="M344.3 374.7 L351.3 372.5 L358.6 373.2"/><path d="M177.0 446.6 L182.6 447.9 L188.1 449.3 L193.7 450.5"/><path d="M177.0 446.6 L181.4 443.9 L185.7 441.1 L190.9 440.4 L195.8 438.7"/><path d="M177.0 446.6 L180.1 442.1 L184.4 438.7 L188.8 435.4 L191.7 430.7"/><path d="M565.0 451.9 L561.8 456.8 L559.2 461.9 L556.0 466.8 L553.2 471.9 L551.3 477.5"/><path d="M471.8 411.3 L465.8 412.0 L460.0 410.4"/><path d="M471.8 411.3 L471.8 416.4 L474.0 421.2 L474.3 426.2 L475.3 431.2 L474.0 436.4"/><path d="M702.8 558.9 L708.1 555.5 L713.5 552.0"/><path d="M702.8 558.9 L697.8 558.6 L692.9 558.3"/><path d="M702.8 558.9 L705.9 553.6 L707.3 547.6"/><path d="M822.7 432.3 L815.4 431.5 L808.6 428.8"/><path d="M713.5 552.0 L711.6 550.5 L709.2 550.0"/><path d="M713.5 552.0 L710.0 550.3 L707.3 547.6"/><path d="M647.8 441.6 L642.0 440.3 L636.3 438.6 L630.7 436.7 L626.3 432.1"/><path d="M647.7 456.5 L642.1 458.2 L636.5 459.5 L630.5 458.2 L624.9 459.8"/><path d="M295.6 533.3 L290.6 531.6 L285.3 531.8 L280.4 529.8 L275.4 527.8 L270.4 526.2 L265.3 525.0 L259.7 527.0"/><path d="M201.9 306.3 L197.5 309.4 L193.7 313.2"/><path d="M428.4 434.8 L433.7 436.8 L438.8 439.2 L442.8 443.5 L448.0 445.7"/><path d="M197.0 444.9 L195.4 447.7 L193.7 450.5"/><path d="M417.1 500.9 L411.6 499.2 L405.8 498.2 L400.1 496.9 L394.8 494.3"/><path d="M605.0 406.3 L606.7 404.1 L606.8 401.4"/><path d="M460.0 410.4 L457.6 405.7 L456.3 400.6 L453.6 395.9 L452.8 390.7 L452.5 385.3"/><path d="M443.9 276.0 L449.1 272.7 L454.4 269.9 L460.1 267.8 L466.0 266.3"/><path d="M443.9 276.0 L446.3 270.9 L450.5 267.1 L454.5 263.1 L456.2 257.5 L459.7 253.2 L463.0 248.8"/><path d="M407.8 239.9 L410.0 233.9 L410.3 227.6 L410.3 221.3"/><path d="M623.6 593.8 L627.0 587.7 L628.7 580.8"/><path d="M263.5 337.7 L265.1 331.5 L268.0 325.7"/><path d="M263.5 337.7 L260.4 333.8 L255.5 331.5 L252.0 327.8 L249.2 323.5"/><path d="M263.5 337.7 L258.4 339.5 L253.5 341.9 L248.8 344.5 L245.3 348.9 L240.5 351.5 L235.8 353.9"/><path d="M263.5 337.7 L261.9 332.8 L262.7 327.5 L261.4 322.4"/><path d="M551.3 477.5 L546.7 480.8 L542.9 485.1 L539.7 489.7"/><path d="M551.3 477.5 L554.2 482.7 L554.7 488.4 L555.7 494.1"/><path d="M547.2 379.8 L541.6 380.2 L536.0 380.4 L530.8 382.5 L525.4 383.6 L520.6 387.1 L514.9 387.2 L509.8 389.2"/><path d="M547.2 379.8 L548.1 385.4 L551.0 390.0 L552.4 395.4 L555.8 399.9 L558.9 404.5 L560.3 409.8"/><path d="M831.6 481.5 L834.0 477.0 L838.5 474.0 L842.6 470.8 L844.5 465.8 L846.7 461.1 L850.7 457.8 L853.7 453.6"/><path d="M831.6 481.5 L833.7 476.5 L834.3 471.2 L835.0 466.0 L835.4 460.6"/><path d="M606.8 401.4 L611.7 396.8 L614.0 390.5 L617.8 385.2"/><path d="M606.8 401.4 L603.2 397.7 L601.5 392.6 L599.1 388.0 L594.9 384.6 L592.7 379.9"/><path d="M606.8 401.4 L611.4 402.4 L614.8 405.7"/><path d="M720.0 472.9 L722.9 478.0 L725.4 483.4 L729.0 488.0"/><path d="M720.0 472.9 L716.0 467.3 L714.5 460.6"/><path d="M308.5 204.3 L305.8 209.5 L302.2 213.8 L297.8 217.7"/><path d="M517.4 490.6 L523.0 490.6 L528.5 490.4 L534.1 490.8 L539.7 489.7"/><path d="M517.4 490.6 L511.9 492.4 L506.3 493.1 L500.5 492.3"/><path d="M517.4 490.6 L514.7 493.4 L513.9 497.2"/><path d="M223.7 381.4 L222.1 378.6 L219.2 377.2"/><path d="M289.8 268.6 L284.9 267.4 L279.7 267.9 L274.8 266.9 L269.8 266.3 L265.2 263.6"/><path d="M133.1 378.5 L138.8 376.8 L144.5 376.1 L150.2 375.0 L155.9 374.1 L161.6 373.1 L167.5 374.1"/><path d="M448.0 445.7 L453.1 443.6 L458.7 442.8 L463.7 440.6 L468.6 437.7 L474.0 436.4"/><path d="M298.1 421.6 L299.3 422.2 L298.1 422.8"/><path d="M778.2 440.7 L774.4 441.7 L770.8 443.4"/><path d="M778.2 440.7 L781.6 444.7 L785.4 448.2 L789.6 451.3 L794.5 453.1 L799.7 454.6 L804.2 457.1 L807.5 461.3 L811.8 464.1"/><path d="M483.0 534.1 L479.4 537.7 L475.4 540.9 L471.3 544.0"/><path d="M539.7 489.7 L534.0 488.3 L528.2 487.1 L522.5 485.7 L517.5 482.4"/><path d="M539.7 489.7 L537.2 484.8 L535.9 479.5 L534.2 474.3"/><path d="M713.6 413.3 L712.2 417.2 L709.1 419.8"/><path d="M515.3 343.6 L509.9 342.8 L505.1 340.7 L500.0 339.3 L495.1 337.6 L490.2 335.7 L486.5 331.1"/><path d="M322.9 392.7 L321.2 392.3 L319.4 391.9"/><path d="M569.5 560.8 L564.5 560.6 L559.4 559.9 L554.3 560.5 L549.3 560.8 L544.2 561.3 L539.2 561.4 L534.1 560.2"/><path d="M569.5 560.8 L565.9 564.4 L561.6 567.0 L557.2 569.6 L554.5 574.3 L550.5 577.3"/><path d="M282.0 556.2 L278.8 555.6 L275.8 557.0"/><path d="M448.0 167.5 L450.3 171.7 L454.2 174.4"/><path d="M305.4 220.3 L301.2 220.0 L297.8 217.7"/><path d="M305.4 220.3 L301.0 223.9 L295.4 225.0"/><path d="M486.5 331.1 L483.7 335.8 L480.2 340.1 L477.6 345.0 L474.2 349.3 L469.3 352.4"/><path d="M486.5 331.1 L483.1 335.6 L479.4 339.8 L475.3 343.7 L471.8 348.1 L467.7 352.0"/><path d="M332.6 387.3 L332.0 392.9 L331.5 398.5 L332.7 403.9 L334.7 409.3"/><path d="M332.6 387.3 L325.7 388.7 L319.4 391.9"/><path d="M332.6 387.3 L337.1 384.5 L342.1 383.4 L346.9 381.8 L352.4 382.3 L357.4 381.0 L362.0 378.9"/><path d="M677.3 439.9 L682.3 441.8 L687.6 442.2 L692.7 443.8 L698.0 444.5 L703.3 445.0"/><path d="M661.7 336.1 L667.9 335.1 L674.1 335.3 L680.2 336.5 L686.4 335.7"/><path d="M661.7 336.1 L666.0 339.2 L670.3 342.3 L674.4 345.6 L676.4 350.9"/><path d="M661.7 336.1 L658.0 332.5 L653.2 330.5"/><path d="M460.9 297.6 L463.9 293.3 L467.4 289.4 L471.7 286.1 L473.5 280.9 L476.6 276.7"/><path d="M279.6 426.7 L273.9 428.5 L268.1 428.0 L262.2 426.4 L256.4 427.3 L250.6 427.3 L244.8 428.1"/><path d="M533.6 518.9 L531.0 523.7 L528.4 528.6 L526.0 533.6 L522.8 538.2 L519.4 542.5"/><path d="M744.2 521.4 L739.0 518.7 L734.1 515.7 L730.5 511.0"/><path d="M744.2 521.4 L749.5 518.5 L755.7 518.3 L761.1 515.9"/><path d="M132.3 247.2 L127.9 248.4 L124.7 251.6"/><path d="M474.0 436.4 L478.8 434.6 L483.9 433.9 L489.2 433.7 L493.8 431.2 L498.2 428.2 L503.6 428.1 L508.2 425.8"/><path d="M371.9 568.1 L368.9 563.8 L365.7 559.6 L363.5 554.8 L361.2 550.1 L360.2 544.6 L356.6 540.6"/><path d="M316.4 548.1 L321.2 546.2 L326.5 546.9 L331.4 545.2 L336.7 545.7 L341.4 542.9 L346.5 542.6 L351.5 541.1 L356.6 540.6"/><path d="M316.4 548.1 L311.6 549.9 L307.8 553.5 L302.8 555.0"/><path d="M316.4 548.1 L320.1 543.1 L322.0 537.1 L324.3 531.3 L327.3 525.9"/><path d="M301.3 271.8 L303.0 276.6 L304.8 281.5 L306.6 286.2 L309.4 290.7 L309.8 296.0 L311.4 300.9"/><path d="M301.3 271.8 L296.5 274.7 L292.7 278.6 L288.2 281.8 L285.2 286.6 L282.1 291.3 L277.5 294.4"/><path d="M466.0 266.3 L463.9 260.7 L462.6 254.9 L463.0 248.8"/><path d="M501.6 233.3 L503.2 237.3 L505.9 240.7"/><path d="M371.6 528.7 L376.6 524.1 L381.0 519.0"/><path d="M371.6 528.7 L366.3 524.2 L359.5 522.4"/><path d="M576.7 302.6 L578.8 307.4 L578.5 312.7 L580.6 317.5 L581.9 322.5 L581.7 327.7 L580.9 333.0 L580.8 338.3 L583.3 343.0"/><path d="M576.7 302.6 L574.0 303.3 L571.3 303.6"/><path d="M563.6 305.1 L560.8 299.9 L558.9 294.5 L558.4 288.6"/><path d="M579.0 390.5 L575.6 394.6 L570.8 397.5 L566.7 401.0 L564.1 405.9 L560.3 409.8"/><path d="M477.2 372.3 L471.9 374.1 L466.7 376.3 L462.2 379.7 L456.9 381.7 L452.5 385.3"/><path d="M477.2 372.3 L473.9 367.9 L471.5 363.0 L470.3 357.8 L469.3 352.4"/><path d="M477.2 372.3 L484.4 373.0 L491.3 374.8"/><path d="M181.9 316.9 L176.4 318.4 L171.8 321.6 L166.5 323.5 L162.8 328.0"/><path d="M366.7 199.8 L365.3 194.1 L363.4 188.6 L362.2 182.8 L358.8 177.8"/><path d="M366.7 199.8 L370.2 195.2 L372.8 190.0 L376.2 185.3 L379.9 180.8"/><path d="M366.7 199.8 L372.2 197.4 L377.5 194.7 L382.9 192.2 L387.8 188.7"/><path d="M652.8 340.9 L653.9 335.7 L653.2 330.5"/><path d="M167.5 374.1 L164.9 378.5 L162.2 382.8 L158.9 386.7 L155.5 390.4 L152.4 394.4 L148.9 398.1"/><path d="M167.5 374.1 L170.9 377.9 L174.2 381.7 L179.0 384.0 L182.2 387.9 L186.0 391.2"/><path d="M360.0 324.3 L360.9 331.1 L360.5 338.0"/><path d="M565.9 359.2 L560.2 359.9 L554.4 359.8 L548.9 361.9 L543.3 363.4 L537.6 363.3 L531.8 362.8"/><path d="M565.9 359.2 L569.3 354.1 L575.0 351.5 L578.3 346.4 L583.3 343.0"/><path d="M634.6 357.0 L637.3 363.1 L639.0 369.5"/><path d="M634.6 357.0 L635.8 358.5 L637.7 358.4"/><path d="M216.8 479.7 L219.8 476.6 L223.5 474.2"/><path d="M216.8 479.7 L211.4 477.3 L207.3 473.1 L203.4 468.8"/><path d="M667.1 315.1 L670.8 319.4 L675.9 322.4 L680.0 326.3 L683.3 331.0 L686.4 335.7"/><path d="M692.9 558.3 L686.8 556.6 L680.4 555.7 L675.0 551.8"/><path d="M692.9 558.3 L698.0 555.2 L703.4 552.5 L707.3 547.6"/><path d="M692.9 558.3 L687.5 561.2 L682.3 564.4 L678.8 569.7 L674.6 573.9"/><path d="M222.9 256.8 L228.3 254.1 L233.9 251.8 L239.2 248.9 L244.4 245.7"/><path d="M752.7 524.6 L757.6 520.8 L761.1 515.9"/><path d="M649.7 507.8 L650.2 509.9 L649.7 511.9"/><path d="M582.0 537.5 L583.2 536.6 L583.3 535.0"/><path d="M276.1 279.8 L272.2 274.6 L267.7 269.7 L265.2 263.6"/><path d="M276.1 279.8 L273.0 281.1 L271.5 284.0"/><path d="M164.9 443.4 L161.5 438.2 L156.6 434.2 L152.8 429.4"/><path d="M623.8 437.0 L625.7 434.9 L626.3 432.1"/><path d="M523.6 470.4 L522.8 465.8 L519.4 462.6"/><path d="M283.5 450.0 L285.7 442.9 L288.0 435.8"/><path d="M600.5 539.5 L601.2 546.1 L599.8 552.6 L599.5 559.2"/><path d="M600.5 539.5 L599.2 534.1 L595.9 529.6 L593.5 524.6 L591.5 519.5 L590.0 514.2"/><path d="M394.8 494.3 L398.5 490.6 L403.2 488.3 L407.4 485.4 L412.1 483.1 L415.6 479.2 L419.7 476.0 L424.9 474.6"/><path d="M311.0 445.6 L305.2 443.2 L300.0 439.5 L294.0 437.8 L288.0 435.8"/><path d="M311.0 445.6 L316.5 445.2 L322.1 445.6"/><path d="M269.8 292.8 L272.1 288.7 L271.5 284.0"/><path d="M288.0 435.8 L291.8 431.8 L294.8 427.2 L298.1 422.8"/><path d="M288.0 435.8 L286.6 436.4 L285.9 435.0"/><path d="M356.6 540.6 L352.2 537.2 L346.9 535.4 L342.7 531.8 L338.1 528.7 L333.4 525.9 L327.3 525.9"/><path d="M356.6 540.6 L357.1 534.5 L357.1 528.2 L359.5 522.4"/><path d="M381.0 519.0 L375.6 519.3 L370.2 519.9 L364.9 521.6 L359.5 522.4"/><path d="M330.4 398.1 L326.7 399.9 L323.2 401.9"/><path d="M545.7 310.6 L547.6 315.9 L547.6 321.4 L546.6 327.0 L546.2 332.6 L549.0 337.8"/><path d="M703.3 445.0 L703.2 451.1 L704.3 457.1 L706.3 462.9 L707.5 468.9"/><path d="M703.3 445.0 L707.9 449.6 L710.1 455.9 L714.5 460.6"/><path d="M261.0 295.8 L265.5 292.8 L268.4 288.4 L271.5 284.0"/><path d="M261.0 295.8 L259.7 290.0 L258.2 284.2 L258.2 278.2 L257.4 272.4"/><path d="M261.0 295.8 L264.7 296.1 L268.2 294.7"/><path d="M261.0 295.8 L259.6 300.1 L260.5 304.5"/><path d="M827.9 485.3 L823.2 489.0 L817.3 490.5 L813.1 495.0 L807.0 496.2 L802.3 499.8"/><path d="M175.1 329.9 L179.7 325.4 L184.7 321.3"/><path d="M175.1 329.9 L180.5 328.2 L186.1 327.8"/><path d="M391.9 412.1 L389.0 414.8 L385.2 415.7"/><path d="M315.2 365.7 L314.3 372.2 L311.6 378.2 L309.4 384.3"/><path d="M315.2 365.7 L313.0 360.3 L310.4 355.3 L306.9 350.9 L301.7 347.7"/><path d="M225.9 395.4 L228.9 399.9 L231.1 404.9 L235.2 408.7 L238.2 413.2 L241.6 417.5 L244.2 422.2 L244.8 428.1"/><path d="M225.9 395.4 L225.2 400.6 L224.4 405.7 L225.0 411.0 L224.0 416.1 L221.9 421.1"/><path d="M390.5 231.3 L394.9 226.9 L400.9 225.2 L405.7 221.6 L411.2 219.0"/><path d="M739.2 545.5 L744.7 546.6 L749.4 550.2 L755.0 551.1"/><path d="M739.2 545.5 L734.4 548.4 L729.0 549.9 L724.1 552.4 L719.1 554.9"/><path d="M739.2 545.5 L739.0 551.1 L739.7 556.7 L740.8 562.1 L741.0 567.7 L743.2 573.1 L742.4 578.8"/><path d="M726.0 576.7 L731.6 576.1 L737.1 577.0 L742.4 578.8"/><path d="M121.8 276.9 L116.4 277.3 L111.2 275.4 L105.8 276.8 L100.5 275.9"/><path d="M119.0 367.6 L116.1 366.7 L113.3 365.8"/><path d="M208.2 340.8 L211.9 336.3 L214.8 331.5 L216.6 326.2 L217.8 320.6 L219.6 315.3"/><path d="M208.2 340.8 L207.1 335.5 L205.5 330.5 L202.5 326.2 L200.7 321.3 L198.8 316.4 L193.7 313.2"/><path d="M208.2 340.8 L203.0 339.5 L199.1 336.0 L195.5 332.0 L190.9 329.7 L186.1 327.8"/><path d="M640.4 384.6 L639.5 379.6 L639.3 374.5 L639.0 369.5"/><path d="M509.8 389.2 L504.4 386.7 L499.2 383.7 L495.1 379.5 L491.3 374.8"/><path d="M500.5 492.3 L495.5 493.0 L491.6 496.3"/><path d="M500.5 492.3 L506.5 489.6 L511.3 484.9 L517.5 482.4"/><path d="M491.6 496.3 L489.9 501.8 L488.8 507.4 L490.7 513.2 L489.3 518.7 L488.0 524.2 L489.4 530.0"/><path d="M711.0 523.0 L709.9 529.1 L709.2 535.3 L706.9 541.3 L707.3 547.6"/><path d="M707.5 468.9 L710.5 464.2 L714.5 460.6"/><path d="M606.0 477.1 L600.9 477.9 L595.5 477.3 L590.5 479.2"/><path d="M585.5 434.9 L584.6 429.3 L585.4 423.8 L585.8 418.2"/><path d="M650.4 543.3 L655.7 544.2 L661.0 544.8 L665.8 546.9 L670.7 548.5 L675.0 551.8"/><path d="M650.4 543.3 L646.5 546.8 L641.1 547.5 L636.9 550.6 L632.8 553.6 L628.2 555.8 L623.4 557.7"/><path d="M432.6 393.0 L433.0 392.3 L433.9 392.5"/><path d="M802.3 499.8 L804.9 495.0 L807.3 490.2 L806.9 484.6 L806.5 479.1 L807.0 473.7 L808.9 468.8 L811.8 464.1"/><path d="M555.7 494.1 L562.2 493.9 L568.8 493.4 L575.2 495.1"/><path d="M555.7 494.1 L551.3 498.1 L547.7 502.7 L544.4 507.6 L541.9 513.2 L537.2 516.9"/><path d="M234.3 433.6 L238.9 429.6 L244.8 428.1"/><path d="M234.3 433.6 L230.0 429.6 L225.5 425.8 L221.9 421.1"/><path d="M244.8 428.1 L239.3 425.6 L233.9 422.8 L228.1 421.4 L221.9 421.1"/><path d="M272.8 400.2 L268.1 395.9 L262.2 393.6"/><path d="M349.3 357.0 L346.6 364.0 L346.4 371.5"/><path d="M360.5 338.0 L364.9 340.5 L368.8 343.7 L372.4 347.4 L377.2 349.3"/><path d="M360.5 338.0 L358.6 332.2 L356.0 326.9 L352.0 322.3"/><path d="M489.4 530.0 L488.2 525.0 L486.5 520.2 L485.6 515.1 L483.4 510.4 L482.7 505.3 L480.7 500.6"/><path d="M489.4 530.0 L495.0 527.9 L501.3 527.6 L506.8 524.8 L512.4 522.5"/><path d="M346.4 371.5 L352.5 372.6 L358.6 373.2"/><path d="M653.7 480.7 L650.1 475.1 L644.9 471.0 L640.6 466.1"/><path d="M761.1 515.9 L766.3 515.6 L771.5 515.5 L776.1 518.4"/><path d="M452.3 219.8 L448.9 224.1 L445.0 227.8 L440.0 230.0 L435.2 232.5"/><path d="M695.1 319.9 L697.7 322.4 L699.1 325.7"/><path d="M695.1 319.9 L692.0 324.7 L688.7 329.4"/><path d="M681.6 406.2 L676.2 405.8 L670.8 405.2 L665.6 407.2"/><path d="M585.8 418.2 L581.1 415.5 L575.3 415.6 L570.8 412.3 L565.5 411.2 L560.3 409.8"/><path d="M686.4 335.7 L686.7 332.3 L688.7 329.4"/><path d="M686.4 335.7 L690.1 339.4 L693.7 343.1 L696.6 347.4 L699.4 351.8"/><path d="M506.1 275.5 L511.3 277.0 L516.4 278.8 L520.7 282.4 L526.2 283.2"/><path d="M182.6 274.0 L177.1 273.6 L172.4 270.8 L167.7 268.3"/><path d="M309.4 384.3 L304.8 382.0 L299.6 381.7 L295.0 379.5"/><path d="M293.1 322.7 L288.4 319.1 L284.3 314.8 L281.4 309.5 L276.3 306.2 L272.9 301.3"/><path d="M293.1 322.7 L288.7 326.4 L284.5 330.3 L279.6 333.4 L275.3 337.1 L269.4 338.5"/><path d="M259.7 527.0 L260.6 532.4 L259.6 537.8 L260.4 543.2 L260.7 548.6 L259.5 554.0"/><path d="M367.5 449.5 L371.7 452.8 L376.4 454.7 L380.9 457.5 L386.3 458.1 L391.1 460.0 L395.4 463.0 L400.4 464.4"/><path d="M367.5 449.5 L372.7 451.7 L378.3 452.7 L383.9 453.4 L389.2 455.3 L394.5 457.2 L399.7 459.4"/><path d="M298.1 422.8 L292.7 423.8 L288.3 427.0"/><path d="M534.1 560.2 L531.4 554.9 L527.9 550.3 L523.8 546.3 L519.4 542.5"/><path d="M534.1 560.2 L537.9 564.7 L541.9 569.1 L546.1 573.2 L550.5 577.3"/><path d="M675.0 551.8 L674.6 546.0 L672.1 540.6 L670.2 535.0 L669.9 529.2 L670.1 523.3"/><path d="M675.0 551.8 L680.3 549.9 L685.7 550.1 L691.3 550.6 L696.7 550.1 L702.0 549.1 L707.3 547.6"/><path d="M575.2 495.1 L579.6 491.7 L584.3 488.6 L588.6 485.1 L590.5 479.2"/><path d="M766.1 394.0 L771.1 396.5 L774.7 400.5 L778.4 404.6 L781.9 408.8 L786.6 411.6"/><path d="M766.1 394.0 L764.2 394.4 L763.0 392.8"/><path d="M223.5 474.2 L218.2 473.8 L213.3 471.9 L208.5 469.7 L203.4 468.8"/><path d="M268.0 325.7 L268.0 322.4 L267.4 319.1"/><path d="M268.0 325.7 L270.2 331.9 L269.4 338.5"/><path d="M268.0 325.7 L265.2 323.1 L261.4 322.4"/><path d="M827.7 453.8 L822.3 457.1 L816.8 460.2 L811.8 464.1"/><path d="M755.0 551.1 L754.2 556.3 L750.9 560.4 L747.6 564.4 L745.7 569.1 L744.3 574.1 L742.4 578.8"/><path d="M705.8 489.2 L700.9 486.1 L696.5 482.5 L693.4 477.5"/><path d="M676.4 350.9 L682.1 351.4 L687.9 351.2 L693.6 352.4 L699.4 351.8"/><path d="M125.3 244.9 L120.5 247.0 L115.7 248.9"/><path d="M452.5 385.3 L450.0 380.5 L448.6 375.2 L446.1 370.4 L443.3 365.6 L442.3 360.2"/><path d="M195.8 438.7 L193.8 434.7 L191.7 430.7"/><path d="M195.8 438.7 L200.5 436.3 L203.9 431.9 L208.6 429.5 L212.3 425.5 L217.6 424.1 L221.9 421.1"/><path d="M435.2 232.5 L439.2 236.2 L444.4 238.1 L449.7 239.6 L454.7 241.6 L459.2 244.7 L463.0 248.8"/><path d="M288.3 427.0 L287.9 431.2 L285.9 435.0"/><path d="M200.1 240.3 L196.5 236.3 L191.5 234.2"/><path d="M469.3 352.4 L474.0 355.1 L477.7 358.8 L480.6 363.4 L483.1 368.2 L486.1 372.6 L491.3 374.8"/><path d="M469.3 352.4 L468.1 353.5 L467.7 352.0"/><path d="M295.0 379.5 L289.6 380.0 L285.0 382.3 L280.8 385.2 L276.0 387.1 L271.8 390.2 L267.2 392.4 L262.2 393.6"/><path d="M300.8 337.0 L299.9 342.5 L301.7 347.7"/><path d="M427.9 362.1 L435.2 362.0 L442.3 360.2"/><path d="M427.9 362.1 L429.1 367.1 L429.4 372.3 L431.6 377.1 L431.0 382.5 L433.1 387.3 L433.9 392.5"/><path d="M774.7 507.4 L775.3 512.9 L776.1 518.4"/><path d="M774.7 507.4 L777.3 500.7 L777.4 493.6"/><path d="M421.2 392.7 L427.6 394.0 L433.9 392.5"/><path d="M184.7 321.3 L188.4 316.4 L193.7 313.2"/><path d="M184.7 321.3 L184.3 324.8 L186.1 327.8"/><path d="M271.5 284.0 L274.2 289.4 L277.5 294.4"/><path d="M502.3 254.5 L503.0 250.8 L501.0 247.8"/><path d="M267.4 319.1 L260.1 318.7 L253.1 316.5"/><path d="M267.4 319.1 L265.0 321.9 L261.4 322.4"/><path d="M599.5 559.2 L605.4 557.6 L611.3 557.0 L617.3 557.0 L623.4 557.7"/><path d="M719.6 353.8 L714.4 354.4 L709.5 352.8 L704.3 353.4 L699.4 351.8"/><path d="M257.4 272.4 L254.9 267.0 L251.9 261.8 L248.7 256.8 L247.2 251.0 L244.4 245.7"/><path d="M397.9 314.1 L398.9 319.8 L399.8 325.5 L400.5 331.2 L400.5 337.0 L400.6 342.7"/><path d="M649.7 511.9 L650.6 517.0 L648.9 521.9 L648.6 526.9 L649.8 532.0 L648.2 537.0"/><path d="M649.7 511.9 L655.2 514.2 L660.4 516.8 L665.6 519.3 L670.1 523.3"/><path d="M377.2 349.3 L383.1 347.9 L389.2 347.4 L395.1 346.3 L401.2 346.3"/><path d="M512.4 522.5 L514.1 525.6 L515.3 529.0"/><path d="M383.0 313.3 L384.6 318.3 L383.2 323.4"/><path d="M193.7 313.2 L197.3 309.5 L198.5 304.5 L200.7 300.0"/><path d="M843.3 414.0 L843.5 419.3 L844.5 424.4 L844.6 429.7 L845.6 434.8 L848.3 439.6 L850.3 444.6 L849.4 450.0"/><path d="M733.2 473.3 L732.1 478.3 L730.1 483.1 L729.0 488.0"/><path d="M214.6 232.4 L208.9 234.2 L203.1 234.3 L197.2 233.1 L191.5 234.2"/><path d="M519.4 542.5 L515.4 546.3 L511.8 550.4 L508.4 554.9 L503.1 557.1"/><path d="M648.2 537.0 L644.4 540.8 L639.4 543.2 L635.3 546.7 L631.2 550.2 L627.5 554.2 L623.4 557.7"/><path d="M590.0 514.2 L589.6 519.8 L586.4 524.5 L586.1 530.2 L583.3 535.0"/><path d="M699.1 325.7 L704.9 330.0 L711.1 333.9"/><path d="M699.1 325.7 L693.4 326.2 L688.7 329.4"/><path d="M699.1 325.7 L702.8 330.2 L706.0 334.9 L708.8 340.0"/><path d="M191.7 430.7 L197.2 430.5 L202.0 428.3 L207.1 426.9 L212.0 424.7 L216.9 422.8 L221.9 421.1"/><path d="M249.2 323.5 L248.2 329.1 L244.2 333.4 L241.9 338.4 L240.1 343.7 L236.9 348.4 L235.8 353.9"/><path d="M249.2 323.5 L255.2 321.8 L261.4 322.4"/><path d="M358.8 177.8 L353.6 177.7 L348.4 177.6 L343.1 176.5 L338.0 178.4 L332.8 178.6"/><path d="M358.8 177.8 L364.1 178.8 L369.1 180.9 L374.5 181.2 L379.9 180.8"/><path d="M442.3 360.2 L444.2 355.2 L448.4 351.7 L451.9 347.8 L454.8 343.4 L456.5 338.3"/><path d="M442.3 360.2 L441.4 365.7 L438.5 370.7 L437.0 376.0 L435.8 381.5 L435.8 387.2 L433.9 392.5"/><path d="M87.8 242.8 L90.2 247.3 L90.8 252.5 L93.2 257.0 L96.3 261.2 L98.3 265.9 L100.1 270.6 L100.5 275.9"/><path d="M508.5 245.6 L504.4 245.5 L501.0 247.8"/><path d="M811.8 464.1 L817.9 464.6 L823.7 462.8 L829.3 460.2 L835.4 460.6"/><path d="M268.2 294.7 L270.2 298.3 L272.9 301.3"/><path d="M670.2 511.8 L671.2 517.5 L670.1 523.3"/><path d="M550.5 577.3 L545.9 579.9 L542.3 584.1 L537.1 585.8"/><path d="M400.6 342.7 L397.0 339.0 L392.9 335.7 L389.7 331.5 L387.2 326.8 L383.2 323.4"/><path d="M327.3 525.9 L327.5 522.4 L324.9 520.1"/><path d="M493.9 559.6 L498.3 557.6 L503.1 557.1"/><path d="M115.7 248.9 L120.2 250.1 L124.7 251.6"/><path d="M115.7 248.9 L112.1 252.8 L109.2 257.1 L107.2 261.9 L106.1 267.2 L102.6 271.2 L100.5 275.9"/><path d="M332.3 513.2 L337.8 515.0 L343.1 517.1 L348.4 519.5 L354.0 520.9 L359.5 522.4"/><path d="M427.2 481.3 L426.4 477.8 L424.9 474.6"/><path d="M516.5 574.0 L513.7 569.3 L510.6 564.9 L506.6 561.1 L503.1 557.1"/><path d="M456.5 338.3 L459.9 343.1 L462.6 348.5 L467.7 352.0"/><path d="M537.1 585.8 L543.7 587.5 L550.0 590.4"/><path d="M262.4 482.3 L255.8 480.7 L250.3 476.8"/><path d="M119.4 271.3 L113.0 272.6 L106.6 273.7 L100.5 275.9"/><path d="M501.0 247.8 L501.6 249.9 L503.3 251.1"/><path d="M583.1 351.6 L582.3 347.3 L583.3 343.0"/><path d="M583.3 343.0 L581.5 338.2 L579.3 333.5 L579.7 328.0 L576.6 323.5 L575.5 318.5 L573.2 313.8 L570.9 309.1 L571.3 303.6"/><path d="M699.4 351.8 L701.6 347.1 L704.7 343.1 L708.8 340.0"/><path d="M379.9 180.8 L383.4 185.3 L387.8 188.7"/><path d="M561.5 285.8 L562.5 280.4 L564.2 275.3 L565.7 270.1 L568.7 265.7 L571.0 260.8 L573.6 256.1 L576.9 251.7"/><path d="M152.8 429.4 L156.6 424.5 L160.2 419.4 L165.8 416.2"/></g>
<g fill="#fff" stroke="#ee8f7c" stroke-width="0.8"><circle cx="540.7" cy="234.1" r="1.4"/><circle cx="308.5" cy="477.2" r="1.4"/><circle cx="370.4" cy="369.4" r="1.4"/><circle cx="338.3" cy="450.3" r="1.4"/><circle cx="400.0" cy="240.7" r="1.4"/><circle cx="420.9" cy="287.6" r="1.4"/><circle cx="400.6" cy="465.7" r="1.4"/><circle cx="504.1" cy="307.8" r="1.4"/><circle cx="597.2" cy="371.1" r="1.4"/><circle cx="326.6" cy="563.9" r="1.4"/><circle cx="639.5" cy="517.3" r="1.4"/><circle cx="721.7" cy="526.0" r="1.4"/><circle cx="347.4" cy="172.0" r="1.4"/><circle cx="300.7" cy="541.7" r="1.4"/><circle cx="175.2" cy="306.3" r="1.4"/><circle cx="373.1" cy="357.5" r="1.4"/><circle cx="607.3" cy="469.5" r="1.4"/><circle cx="438.3" cy="272.9" r="1.4"/><circle cx="290.6" cy="450.8" r="1.4"/><circle cx="645.8" cy="342.8" r="1.4"/><circle cx="251.6" cy="528.0" r="1.4"/><circle cx="155.8" cy="252.5" r="1.4"/><circle cx="229.8" cy="391.3" r="1.4"/><circle cx="549.8" cy="595.6" r="1.4"/><circle cx="343.8" cy="593.8" r="1.4"/><circle cx="461.2" cy="202.0" r="1.4"/><circle cx="564.7" cy="487.1" r="1.4"/><circle cx="209.9" cy="353.4" r="1.4"/><circle cx="257.3" cy="395.8" r="1.4"/><circle cx="181.5" cy="428.5" r="1.4"/><circle cx="605.0" cy="453.5" r="1.4"/><circle cx="657.4" cy="473.3" r="1.4"/><circle cx="305.4" cy="333.1" r="1.4"/><circle cx="680.9" cy="391.2" r="1.4"/><circle cx="576.0" cy="443.4" r="1.4"/><circle cx="272.1" cy="205.6" r="1.4"/><circle cx="701.8" cy="562.2" r="1.4"/><circle cx="756.3" cy="487.9" r="1.4"/><circle cx="525.8" cy="279.3" r="1.4"/><circle cx="529.4" cy="568.3" r="1.4"/><circle cx="196.6" cy="383.1" r="1.4"/><circle cx="205.4" cy="346.4" r="1.4"/><circle cx="278.6" cy="465.6" r="1.4"/><circle cx="202.1" cy="251.5" r="1.4"/><circle cx="333.9" cy="516.4" r="1.4"/><circle cx="165.5" cy="351.8" r="1.4"/><circle cx="278.6" cy="356.6" r="1.4"/><circle cx="619.6" cy="565.3" r="1.4"/><circle cx="811.4" cy="439.6" r="1.4"/><circle cx="567.4" cy="474.6" r="1.4"/><circle cx="121.8" cy="317.3" r="1.4"/><circle cx="632.3" cy="375.5" r="1.4"/><circle cx="266.8" cy="568.4" r="1.4"/><circle cx="334.0" cy="344.3" r="1.4"/><circle cx="427.5" cy="481.6" r="1.4"/><circle cx="466.5" cy="530.1" r="1.4"/><circle cx="708.0" cy="367.7" r="1.4"/><circle cx="317.5" cy="273.1" r="1.4"/><circle cx="252.2" cy="550.9" r="1.4"/><circle cx="700.9" cy="422.9" r="1.4"/><circle cx="225.2" cy="341.6" r="1.4"/><circle cx="328.1" cy="277.1" r="1.4"/><circle cx="373.9" cy="542.1" r="1.4"/><circle cx="266.2" cy="300.6" r="1.4"/><circle cx="507.0" cy="213.3" r="1.4"/><circle cx="93.9" cy="247.0" r="1.4"/><circle cx="637.1" cy="397.2" r="1.4"/><circle cx="383.2" cy="488.5" r="1.4"/><circle cx="345.8" cy="341.9" r="1.4"/><circle cx="536.0" cy="265.6" r="1.4"/><circle cx="138.3" cy="236.1" r="1.4"/><circle cx="167.0" cy="393.3" r="1.4"/><circle cx="207.4" cy="395.8" r="1.4"/><circle cx="303.3" cy="504.9" r="1.4"/><circle cx="625.0" cy="440.1" r="1.4"/><circle cx="241.8" cy="233.9" r="1.4"/><circle cx="146.9" cy="329.5" r="1.4"/><circle cx="415.5" cy="324.7" r="1.4"/><circle cx="686.7" cy="390.0" r="1.4"/><circle cx="404.3" cy="400.9" r="1.4"/><circle cx="177.0" cy="446.6" r="1.4"/><circle cx="768.4" cy="554.8" r="1.4"/><circle cx="167.1" cy="352.3" r="1.4"/><circle cx="428.4" cy="434.8" r="1.4"/><circle cx="417.1" cy="500.9" r="1.4"/><circle cx="460.0" cy="410.4" r="1.4"/><circle cx="443.9" cy="276.0" r="1.4"/><circle cx="299.1" cy="344.8" r="1.4"/><circle cx="407.8" cy="239.9" r="1.4"/><circle cx="623.6" cy="593.8" r="1.4"/><circle cx="263.5" cy="337.7" r="1.4"/><circle cx="551.3" cy="477.5" r="1.4"/><circle cx="547.2" cy="379.8" r="1.4"/><circle cx="831.6" cy="481.5" r="1.4"/><circle cx="720.0" cy="472.9" r="1.4"/><circle cx="403.5" cy="413.6" r="1.4"/><circle cx="778.2" cy="440.7" r="1.4"/><circle cx="483.0" cy="534.1" r="1.4"/><circle cx="539.7" cy="489.7" r="1.4"/><circle cx="713.6" cy="413.3" r="1.4"/><circle cx="569.5" cy="560.8" r="1.4"/><circle cx="282.0" cy="556.2" r="1.4"/><circle cx="370.2" cy="416.1" r="1.4"/><circle cx="486.5" cy="331.1" r="1.4"/><circle cx="661.7" cy="336.1" r="1.4"/><circle cx="459.3" cy="476.6" r="1.4"/><circle cx="412.5" cy="253.3" r="1.4"/><circle cx="132.3" cy="247.2" r="1.4"/><circle cx="474.0" cy="436.4" r="1.4"/><circle cx="198.7" cy="362.0" r="1.4"/><circle cx="371.9" cy="568.1" r="1.4"/><circle cx="301.3" cy="271.8" r="1.4"/><circle cx="371.6" cy="528.7" r="1.4"/><circle cx="576.7" cy="302.6" r="1.4"/><circle cx="579.0" cy="390.5" r="1.4"/><circle cx="711.0" cy="579.4" r="1.4"/><circle cx="709.2" cy="550.0" r="1.4"/><circle cx="181.9" cy="316.9" r="1.4"/><circle cx="193.7" cy="450.5" r="1.4"/><circle cx="652.8" cy="340.9" r="1.4"/><circle cx="565.9" cy="359.2" r="1.4"/><circle cx="740.5" cy="361.4" r="1.4"/><circle cx="162.8" cy="328.0" r="1.4"/><circle cx="409.1" cy="507.1" r="1.4"/><circle cx="163.4" cy="407.8" r="1.4"/><circle cx="649.5" cy="499.6" r="1.4"/><circle cx="752.7" cy="524.6" r="1.4"/><circle cx="582.0" cy="537.5" r="1.4"/><circle cx="623.8" cy="437.0" r="1.4"/><circle cx="387.6" cy="311.6" r="1.4"/><circle cx="523.6" cy="470.4" r="1.4"/><circle cx="283.5" cy="450.0" r="1.4"/><circle cx="394.8" cy="494.3" r="1.4"/><circle cx="311.0" cy="445.6" r="1.4"/><circle cx="288.0" cy="435.8" r="1.4"/><circle cx="356.6" cy="540.6" r="1.4"/><circle cx="703.3" cy="445.0" r="1.4"/><circle cx="519.4" cy="462.6" r="1.4"/><circle cx="261.0" cy="295.8" r="1.4"/><circle cx="774.2" cy="477.6" r="1.4"/><circle cx="827.9" cy="485.3" r="1.4"/><circle cx="391.9" cy="412.1" r="1.4"/><circle cx="148.9" cy="398.1" r="1.4"/><circle cx="277.1" cy="515.6" r="1.4"/><circle cx="225.9" cy="395.4" r="1.4"/><circle cx="270.3" cy="565.0" r="1.4"/><circle cx="739.2" cy="545.5" r="1.4"/><circle cx="321.0" cy="488.5" r="1.4"/><circle cx="726.0" cy="576.7" r="1.4"/><circle cx="121.8" cy="276.9" r="1.4"/><circle cx="119.0" cy="367.6" r="1.4"/><circle cx="640.4" cy="384.6" r="1.4"/><circle cx="500.5" cy="492.3" r="1.4"/><circle cx="361.9" cy="270.2" r="1.4"/><circle cx="711.0" cy="523.0" r="1.4"/><circle cx="336.7" cy="349.8" r="1.4"/><circle cx="140.6" cy="350.3" r="1.4"/><circle cx="293.8" cy="194.9" r="1.4"/><circle cx="454.2" cy="174.4" r="1.4"/><circle cx="585.5" cy="434.9" r="1.4"/><circle cx="467.3" cy="469.8" r="1.4"/><circle cx="802.3" cy="499.8" r="1.4"/><circle cx="234.3" cy="433.6" r="1.4"/><circle cx="272.8" cy="400.2" r="1.4"/><circle cx="761.1" cy="515.9" r="1.4"/><circle cx="585.8" cy="418.2" r="1.4"/><circle cx="686.4" cy="335.7" r="1.4"/><circle cx="506.1" cy="275.5" r="1.4"/><circle cx="230.0" cy="487.3" r="1.4"/><circle cx="309.4" cy="384.3" r="1.4"/><circle cx="293.1" cy="322.7" r="1.4"/><circle cx="321.1" cy="300.4" r="1.4"/><circle cx="302.8" cy="555.0" r="1.4"/><circle cx="440.4" cy="298.2" r="1.4"/><circle cx="265.2" cy="263.6" r="1.4"/><circle cx="297.8" cy="217.7" r="1.4"/><circle cx="626.3" cy="432.1" r="1.4"/><circle cx="295.4" cy="225.0" r="1.4"/><circle cx="414.1" cy="298.6" r="1.4"/><circle cx="319.4" cy="391.9" r="1.4"/><circle cx="367.5" cy="449.5" r="1.4"/><circle cx="219.6" cy="315.3" r="1.4"/><circle cx="575.2" cy="495.1" r="1.4"/><circle cx="155.6" cy="346.0" r="1.4"/><circle cx="223.5" cy="474.2" r="1.4"/><circle cx="705.8" cy="489.2" r="1.4"/><circle cx="452.5" cy="385.3" r="1.4"/><circle cx="424.8" cy="510.0" r="1.4"/><circle cx="195.8" cy="438.7" r="1.4"/><circle cx="200.1" cy="240.3" r="1.4"/><circle cx="469.3" cy="352.4" r="1.4"/><circle cx="701.1" cy="426.5" r="1.4"/><circle cx="427.9" cy="362.1" r="1.4"/><circle cx="665.6" cy="407.2" r="1.4"/><circle cx="186.0" cy="391.2" r="1.4"/><circle cx="853.7" cy="453.6" r="1.4"/><circle cx="267.4" cy="319.1" r="1.4"/><circle cx="463.0" cy="248.8" r="1.4"/><circle cx="362.0" cy="378.9" r="1.4"/><circle cx="599.5" cy="559.2" r="1.4"/><circle cx="427.1" cy="259.8" r="1.4"/><circle cx="719.6" cy="353.8" r="1.4"/><circle cx="257.4" cy="272.4" r="1.4"/><circle cx="764.5" cy="527.2" r="1.4"/><circle cx="649.7" cy="511.9" r="1.4"/><circle cx="612.4" cy="354.5" r="1.4"/><circle cx="267.4" cy="200.4" r="1.4"/><circle cx="428.5" cy="513.5" r="1.4"/><circle cx="203.4" cy="468.8" r="1.4"/><circle cx="336.7" cy="230.9" r="1.4"/><circle cx="383.0" cy="313.3" r="1.4"/><circle cx="640.6" cy="466.1" r="1.4"/><circle cx="88.6" cy="242.1" r="1.4"/><circle cx="776.1" cy="518.4" r="1.4"/><circle cx="181.3" cy="269.6" r="1.4"/><circle cx="733.2" cy="473.3" r="1.4"/><circle cx="352.0" cy="322.3" r="1.4"/><circle cx="592.7" cy="379.9" r="1.4"/><circle cx="614.8" cy="405.7" r="1.4"/><circle cx="366.9" cy="383.4" r="1.4"/><circle cx="699.1" cy="325.7" r="1.4"/><circle cx="191.7" cy="430.7" r="1.4"/><circle cx="249.2" cy="323.5" r="1.4"/><circle cx="358.8" cy="177.8" r="1.4"/><circle cx="253.1" cy="316.5" r="1.4"/><circle cx="200.7" cy="300.0" r="1.4"/><circle cx="87.8" cy="242.8" r="1.4"/><circle cx="811.8" cy="464.1" r="1.4"/><circle cx="385.2" cy="415.7" r="1.4"/><circle cx="268.2" cy="294.7" r="1.4"/><circle cx="670.1" cy="523.3" r="1.4"/><circle cx="550.5" cy="577.3" r="1.4"/><circle cx="400.6" cy="342.7" r="1.4"/><circle cx="191.5" cy="234.2" r="1.4"/><circle cx="327.3" cy="525.9" r="1.4"/><circle cx="115.7" cy="248.9" r="1.4"/><circle cx="767.1" cy="406.8" r="1.4"/><circle cx="332.3" cy="513.2" r="1.4"/><circle cx="558.4" cy="288.6" r="1.4"/><circle cx="427.2" cy="481.3" r="1.4"/><circle cx="562.7" cy="483.2" r="1.4"/><circle cx="711.1" cy="333.9" r="1.4"/><circle cx="516.5" cy="574.0" r="1.4"/><circle cx="456.5" cy="338.3" r="1.4"/><circle cx="433.9" cy="392.5" r="1.4"/><circle cx="534.2" cy="474.3" r="1.4"/><circle cx="260.5" cy="304.5" r="1.4"/><circle cx="503.1" cy="557.1" r="1.4"/><circle cx="457.0" cy="472.4" r="1.4"/><circle cx="242.7" cy="503.2" r="1.4"/><circle cx="262.4" cy="482.3" r="1.4"/><circle cx="653.2" cy="330.5" r="1.4"/><circle cx="501.0" cy="247.8" r="1.4"/><circle cx="402.2" cy="369.2" r="1.4"/><circle cx="849.4" cy="450.0" r="1.4"/><circle cx="583.1" cy="351.6" r="1.4"/><circle cx="688.7" cy="329.4" r="1.4"/><circle cx="719.1" cy="554.9" r="1.4"/><circle cx="270.6" cy="476.5" r="1.4"/><circle cx="235.8" cy="353.9" r="1.4"/><circle cx="699.4" cy="351.8" r="1.4"/><circle cx="379.9" cy="180.8" r="1.4"/><circle cx="561.5" cy="285.8" r="1.4"/><circle cx="714.5" cy="460.6" r="1.4"/><circle cx="476.6" cy="276.7" r="1.4"/><circle cx="693.4" cy="477.5" r="1.4"/><circle cx="623.4" cy="557.7" r="1.4"/><circle cx="309.5" cy="180.7" r="1.4"/><circle cx="165.8" cy="416.2" r="1.4"/><circle cx="269.4" cy="338.5" r="1.4"/><circle cx="285.9" cy="435.0" r="1.4"/><circle cx="366.0" cy="148.5" r="1.4"/><circle cx="560.3" cy="409.8" r="1.4"/><circle cx="383.2" cy="323.4" r="1.4"/><circle cx="221.9" cy="421.1" r="1.4"/><circle cx="674.6" cy="573.9" r="1.4"/><circle cx="311.4" cy="300.9" r="1.4"/><circle cx="424.9" cy="474.6" r="1.4"/><circle cx="277.5" cy="294.4" r="1.4"/><circle cx="624.9" cy="459.8" r="1.4"/><circle cx="835.4" cy="460.6" r="1.4"/><circle cx="576.9" cy="251.7" r="1.4"/><circle cx="387.8" cy="188.7" r="1.4"/><circle cx="186.1" cy="327.8" r="1.4"/><circle cx="763.0" cy="392.8" r="1.4"/><circle cx="250.3" cy="476.8" r="1.4"/><circle cx="167.7" cy="268.3" r="1.4"/></g>
<g fill="none" stroke="#a07050" stroke-width="1.2"><path d="M610.0 516.0 L607.0 520.3 L604.8 524.8 L604.8 530.3 L603.4 535.2 L600.5 539.5"/><path d="M610.0 516.0 L604.9 516.7 L599.8 517.0 L594.8 516.7 L590.0 514.2"/><path d="M782.0 420.0 L781.6 425.3 L780.0 430.3 L780.0 435.7 L778.2 440.7"/><path d="M782.0 420.0 L778.1 414.4 L772.1 411.1 L767.1 406.8"/><path d="M463.0 204.0 L466.0 209.3 L470.0 214.0"/><path d="M463.0 204.0 L461.6 203.4 L461.2 202.0"/><path d="M303.0 520.0 L303.7 515.0 L303.6 509.9 L303.3 504.9"/><path d="M303.0 528.0 L299.4 524.1 L294.9 521.1 L291.2 517.2"/><path d="M478.0 470.0 L483.1 471.8 L488.5 471.8 L493.8 472.3 L499.1 473.0 L504.5 472.5 L509.6 474.2 L514.8 475.6"/><path d="M478.0 470.0 L478.1 464.3 L477.4 458.7 L475.5 453.2 L476.4 447.5 L475.9 441.8 L474.0 436.4"/><path d="M478.0 470.0 L472.6 471.0 L467.3 469.8"/><path d="M478.0 470.0 L478.8 475.1 L480.6 480.0 L481.0 485.1 L479.9 490.4 L480.6 495.4 L480.7 500.6"/><path d="M268.0 235.0 L269.6 229.2 L269.4 223.2 L271.4 217.5 L272.2 211.7 L272.1 205.6"/><path d="M268.0 235.0 L262.8 234.1 L257.6 232.8 L252.3 233.1 L247.0 233.9 L241.8 233.9"/><path d="M181.0 262.0 L180.6 265.8 L181.3 269.6"/><path d="M434.0 342.0 L430.7 346.3 L428.7 351.2 L426.3 356.0 L424.8 361.2"/><path d="M434.0 342.0 L439.4 339.9 L445.3 340.3 L450.7 338.1 L456.5 338.3"/><path d="M829.0 425.0 L827.8 430.6 L826.9 436.3 L828.0 442.0"/><path d="M829.0 425.0 L823.4 425.7 L817.9 425.8 L812.6 424.5 L807.2 424.5 L802.1 421.6 L796.7 420.8"/><path d="M749.0 393.0 L754.3 395.4 L757.8 400.2 L762.6 403.2 L767.1 406.8"/><path d="M749.0 393.0 L756.0 392.7 L763.0 392.8"/><path d="M307.0 220.0 L310.2 224.4 L313.5 228.6 L318.6 231.1 L321.7 235.6 L326.6 238.3 L329.6 242.8 L333.0 247.0"/><path d="M246.0 238.0 L244.9 234.9 L241.8 233.9"/><path d="M433.0 256.0 L428.0 254.2 L422.7 255.0 L417.8 253.2 L412.5 253.3"/><path d="M433.0 256.0 L434.7 250.2 L434.5 244.3 L433.3 238.2 L435.2 232.5"/><path d="M433.0 264.0 L434.9 268.9 L438.3 272.9"/><path d="M520.0 310.0 L514.8 308.7 L509.7 306.6 L504.1 307.8"/><path d="M520.0 310.0 L525.1 310.1 L530.2 310.7 L535.4 310.2 L540.5 310.2"/><path d="M660.0 467.0 L659.0 470.3 L657.4 473.3"/><path d="M660.0 467.0 L664.8 468.3 L669.4 470.5 L674.1 472.3 L679.3 472.3 L683.6 475.5 L688.5 476.3 L693.4 477.5"/><path d="M713.0 474.0 L711.2 478.9 L711.7 484.0 L710.8 489.0 L710.5 494.1"/><path d="M510.0 505.0 L515.3 504.9 L520.6 504.3 L525.9 503.4 L531.3 503.8"/><path d="M510.0 505.0 L508.1 499.8 L504.6 495.9 L500.5 492.3"/><path d="M460.0 356.0 L463.9 360.5 L467.7 365.1 L472.0 369.1 L477.2 372.3"/><path d="M167.0 424.0 L161.9 424.9 L157.7 428.0 L152.8 429.4"/><path d="M167.0 424.0 L165.2 420.3 L165.8 416.2"/><path d="M141.0 267.0 L142.0 272.6 L141.5 278.3 L143.2 283.8 L144.8 289.3 L146.2 294.8 L144.6 300.6 L145.0 306.2"/><path d="M141.0 267.0 L146.9 271.5 L154.1 273.3"/><path d="M237.0 465.0 L231.7 469.4 L227.4 474.9"/><path d="M237.0 465.0 L239.1 459.9 L241.3 454.9 L242.4 449.6 L241.9 444.0 L241.4 438.4 L242.2 433.0 L244.8 428.1"/><path d="M399.0 506.0 L396.5 500.3 L394.8 494.3"/><path d="M399.0 506.0 L394.6 504.4 L390.0 504.9"/><path d="M483.0 413.0 L488.0 411.4 L492.8 408.9 L497.7 407.1 L503.2 406.8 L507.6 403.2 L512.5 401.2 L517.8 400.5"/><path d="M483.0 413.0 L488.3 415.0 L493.9 416.5 L498.9 419.2 L503.5 422.5 L508.2 425.8"/><path d="M483.0 421.0 L476.4 417.3 L471.8 411.3"/><path d="M617.0 489.0 L622.5 491.4 L627.2 494.9 L630.5 500.2 L635.3 503.5 L640.0 507.0"/><path d="M680.0 500.0 L681.8 495.0 L685.4 491.0 L686.9 485.8 L690.9 482.1 L693.4 477.5"/><path d="M783.0 513.0 L781.5 508.2 L779.8 503.4 L779.4 498.3 L777.4 493.6"/><path d="M770.0 456.0 L771.3 461.2 L773.2 466.2 L777.5 469.7 L780.1 474.3 L782.6 478.9"/><path d="M770.0 456.0 L769.0 462.3 L769.2 468.7"/><path d="M580.0 410.0 L580.8 403.4 L579.8 397.0 L579.0 390.5"/><path d="M580.0 410.0 L582.1 414.6 L585.8 418.2"/><path d="M580.0 410.0 L573.5 409.3 L566.9 408.3 L560.3 409.8"/><path d="M523.0 364.0 L527.0 368.4 L531.9 371.5 L536.7 374.8 L542.2 376.9 L547.2 379.8"/><path d="M523.0 364.0 L527.4 363.6 L531.8 362.8"/><path d="M563.0 290.0 L564.3 295.0 L563.8 300.0 L563.6 305.1"/><path d="M520.0 255.0 L516.6 260.2 L513.8 265.7 L509.1 270.1 L506.1 275.5"/><path d="M241.0 303.0 L246.5 302.7 L251.3 300.4 L255.7 296.8 L261.0 295.8"/><path d="M241.0 303.0 L242.3 297.1 L245.3 292.2 L247.8 287.0 L250.1 281.6 L252.3 276.2 L257.4 272.4"/><path d="M241.0 303.0 L243.1 308.1 L243.7 313.8 L245.5 319.0 L249.2 323.5"/><path d="M241.0 303.0 L244.0 308.4 L248.8 312.2 L253.1 316.5"/><path d="M262.0 269.0 L264.8 274.2 L267.9 279.2 L271.5 284.0"/><path d="M333.0 247.0 L329.6 250.9 L326.9 255.1 L323.5 259.0 L320.8 263.3 L319.6 268.5 L317.5 273.1"/><path d="M333.0 247.0 L337.1 250.4 L342.2 252.4 L345.2 257.2 L349.9 259.7 L354.5 262.5 L358.5 266.0 L361.9 270.2"/><path d="M360.0 273.0 L354.7 273.6 L349.5 275.8 L344.1 275.5 L338.6 274.7 L333.4 276.8 L328.1 277.1"/><path d="M293.0 354.0 L289.1 349.7 L283.8 347.5 L279.4 343.8 L274.6 340.8 L269.4 338.5"/><path d="M389.0 383.0 L394.0 384.8 L399.2 385.9 L404.7 385.4 L409.6 387.4"/><path d="M420.0 436.0 L417.9 430.7 L413.7 426.8 L410.3 422.4 L407.5 417.5 L403.5 413.6"/><path d="M252.0 499.0 L254.9 503.9 L258.4 508.2 L263.0 511.6"/><path d="M283.0 556.0 L278.4 557.2 L274.8 560.3"/><path d="M283.0 556.0 L289.5 554.4 L296.1 553.7 L302.8 555.0"/><path d="M245.0 372.0 L246.9 377.1 L250.2 381.4 L252.4 386.3 L255.7 390.6 L257.3 395.8"/><path d="M245.0 372.0 L243.0 367.3 L239.6 363.4 L238.6 358.2 L235.8 353.9"/><path d="M386.0 166.0 L380.3 166.8 L374.6 165.6 L369.0 166.9 L363.3 168.0 L357.6 167.1"/><path d="M386.0 166.0 L383.5 170.7 L382.3 176.0 L379.9 180.8"/><path d="M386.0 166.0 L383.0 161.4 L378.7 158.2 L373.9 155.6 L369.0 153.1 L366.0 148.5"/><path d="M615.0 598.0 L614.1 592.7 L613.1 587.5 L609.3 583.4 L607.0 578.7"/><path d="M720.0 570.0 L720.8 573.5 L720.0 577.0"/><path d="M720.0 570.0 L719.7 564.8 L717.3 560.2"/><path d="M722.0 389.0 L717.0 389.9 L712.0 390.9 L706.9 389.6 L701.8 388.2 L696.8 390.0 L691.8 391.2 L686.7 390.0"/><path d="M685.0 340.0 L689.7 344.0 L694.4 348.1 L699.4 351.8"/><path d="M736.0 372.0 L739.1 367.0 L740.5 361.4"/><path d="M736.0 372.0 L740.4 375.6 L744.6 379.5 L749.4 382.5 L753.6 386.4 L758.9 388.8 L763.0 392.8"/><path d="M540.7 234.1 L535.4 231.9 L530.5 229.0 L526.1 225.4 L521.1 222.7 L516.6 219.2 L511.6 216.6 L507.0 213.3"/><path d="M540.7 234.1 L541.4 239.6 L538.8 244.6 L539.2 250.0 L539.2 255.4 L536.2 260.3 L536.0 265.6"/><path d="M450.2 463.1 L450.7 457.1 L448.8 451.5 L448.0 445.7"/><path d="M249.8 247.3 L247.4 245.5 L244.4 245.7"/><path d="M308.5 477.2 L306.8 474.0 L308.2 470.6"/><path d="M400.0 240.7 L394.9 236.4 L390.5 231.3"/><path d="M400.0 240.7 L404.0 236.6 L405.5 231.2 L407.6 226.1 L410.3 221.3"/><path d="M619.2 463.7 L613.2 466.4 L607.3 469.5"/><path d="M380.5 345.6 L380.6 340.0 L381.3 334.4 L382.3 328.9 L383.2 323.4"/><path d="M504.1 307.8 L501.7 313.3 L498.4 318.1 L494.8 322.7 L490.4 326.7 L486.5 331.1"/><path d="M199.2 473.5 L200.4 478.9 L202.1 484.2 L202.5 489.7 L201.9 495.4 L202.4 500.9 L204.5 506.2"/><path d="M597.2 371.1 L594.1 375.1 L592.7 379.9"/><path d="M326.6 563.9 L329.0 569.2 L331.2 574.5 L333.4 579.9 L336.8 584.5 L341.1 588.7 L343.8 593.8"/><path d="M326.6 563.9 L331.6 561.5 L336.2 558.7 L340.7 555.5 L344.2 551.2 L348.9 548.5 L353.1 545.0 L356.6 540.6"/><path d="M627.9 472.8 L622.2 472.7 L616.9 474.8 L611.2 474.4 L606.0 477.1"/><path d="M639.5 517.3 L641.7 522.2 L644.4 526.9 L646.8 531.7 L648.2 537.0"/><path d="M708.4 499.6 L713.4 503.4 L719.8 504.7 L725.0 508.2 L730.5 511.0"/><path d="M708.4 499.6 L707.7 505.6 L708.4 511.4 L710.3 517.1 L711.0 523.0"/><path d="M347.4 172.0 L352.6 175.8 L358.8 177.8"/><path d="M347.4 172.0 L342.1 173.2 L337.4 175.8 L332.8 178.6"/><path d="M347.4 172.0 L351.7 167.8 L356.1 163.6 L360.4 159.4 L363.6 154.2 L366.0 148.5"/><path d="M514.8 475.6 L518.7 472.2 L523.6 470.4"/><path d="M300.7 541.7 L298.1 537.5 L295.6 533.3"/><path d="M300.7 541.7 L306.5 542.4 L311.2 545.9 L316.4 548.1"/><path d="M581.9 557.5 L585.9 561.2 L590.1 564.7 L595.0 567.5 L598.1 572.3 L602.4 575.7 L607.0 578.7"/><path d="M443.6 417.1 L449.2 415.3 L454.8 413.2 L460.0 410.4"/><path d="M296.4 461.6 L302.7 465.6 L308.2 470.6"/><path d="M517.8 400.5 L515.4 405.4 L513.0 410.3 L510.3 415.0 L507.8 419.8 L508.2 425.8"/><path d="M344.9 596.7 L349.5 593.3 L352.9 588.8 L355.8 583.8 L361.0 581.0 L364.6 576.6 L367.8 571.9 L371.9 568.1"/><path d="M308.2 470.6 L306.9 464.8 L304.4 459.2 L305.0 453.1"/><path d="M175.2 306.3 L177.4 301.1 L177.9 295.6 L180.4 290.5 L180.9 285.0 L180.6 279.2 L182.6 274.0"/><path d="M175.2 306.3 L180.4 305.8 L185.4 303.7 L190.1 301.1 L195.3 300.0 L200.7 300.0"/><path d="M605.5 407.5 L609.9 405.1 L614.8 405.7"/><path d="M180.8 405.6 L175.6 402.2 L172.0 397.0 L167.0 393.3"/><path d="M180.8 405.6 L176.6 410.3 L170.4 412.2 L165.8 416.2"/><path d="M332.2 469.1 L330.4 464.3 L328.4 459.6 L326.5 454.9 L324.8 450.0 L322.1 445.6"/><path d="M424.8 361.2 L420.0 358.4 L414.7 356.3 L410.2 353.0 L405.3 350.3 L401.2 346.3"/><path d="M424.8 361.2 L418.8 362.2 L413.5 365.0 L407.7 366.8 L402.2 369.2"/><path d="M125.8 340.1 L124.4 334.5 L124.1 328.7 L124.0 322.8 L121.8 317.3"/><path d="M125.8 340.1 L123.6 345.4 L119.8 349.9 L117.7 355.3 L115.7 360.6 L113.3 365.8"/><path d="M290.6 450.8 L287.1 449.6 L283.5 450.0"/><path d="M645.8 342.8 L642.5 347.7 L639.9 353.0 L637.7 358.4"/><path d="M290.0 255.5 L285.5 258.5 L279.9 258.3 L274.8 259.5 L270.2 262.1 L265.2 263.6"/><path d="M290.0 255.5 L291.1 250.4 L293.4 245.6 L293.6 240.4 L295.3 235.5 L294.0 230.0 L295.4 225.0"/><path d="M229.8 391.3 L235.4 391.3 L240.9 392.4 L246.3 394.2 L251.7 395.8 L257.3 395.8"/><path d="M229.8 391.3 L226.8 386.3 L223.7 381.4"/><path d="M647.1 587.6 L641.5 590.1 L635.5 591.3 L629.3 591.7 L623.6 593.8"/><path d="M485.2 249.8 L490.5 249.6 L495.8 249.6 L501.0 247.8"/><path d="M461.2 202.0 L456.3 200.4 L451.5 198.5 L446.1 199.9 L441.1 199.1"/><path d="M564.7 487.1 L559.3 489.5 L555.7 494.1"/><path d="M564.7 487.1 L570.2 485.2 L574.4 481.3 L579.0 477.9 L583.9 475.1"/><path d="M308.3 398.2 L313.5 394.5 L319.4 391.9"/><path d="M266.2 492.3 L263.8 498.5 L263.1 505.0 L263.0 511.6"/><path d="M387.8 411.7 L384.1 408.2 L382.7 403.0 L380.6 398.3 L377.2 394.5 L374.6 390.2 L369.7 387.6 L366.9 383.4"/><path d="M105.3 287.9 L111.5 285.3 L117.3 282.0 L121.8 276.9"/><path d="M238.6 212.8 L243.9 210.6 L249.7 210.2 L255.6 210.5 L260.8 207.5 L266.3 205.8 L272.1 205.6"/><path d="M209.9 353.4 L211.2 358.4 L212.1 363.5 L213.3 368.5 L216.2 372.9 L219.2 377.2"/><path d="M605.0 453.5 L600.3 450.6 L596.2 447.2 L591.8 444.0 L587.9 440.2 L585.5 434.9"/><path d="M305.4 333.1 L301.2 329.6 L297.6 325.6 L293.1 322.7"/><path d="M305.4 333.1 L308.0 328.4 L310.5 323.7"/><path d="M680.9 391.2 L683.6 389.4 L686.7 390.0"/><path d="M576.0 443.4 L578.2 438.5 L580.8 433.7 L581.1 428.0 L582.3 422.6 L585.8 418.2"/><path d="M576.0 443.4 L574.0 438.5 L571.1 434.0 L570.3 428.5 L568.0 423.7 L566.1 418.8 L563.4 414.2 L560.3 409.8"/><path d="M272.1 205.6 L277.3 208.0 L281.9 211.4 L287.9 212.0 L293.4 213.6 L297.8 217.7"/><path d="M701.8 562.2 L696.5 565.0 L690.7 566.4 L685.2 568.7 L680.3 572.1 L674.6 573.9"/><path d="M756.3 487.9 L753.7 483.0 L749.7 479.0 L747.9 473.6 L744.6 469.2"/><path d="M666.6 511.6 L667.4 517.8 L670.1 523.3"/><path d="M647.7 397.4 L652.6 399.0 L656.3 403.0 L660.8 405.4 L665.6 407.2"/><path d="M191.0 412.2 L190.3 406.9 L189.1 401.6 L188.1 396.2 L186.0 391.2"/><path d="M191.0 412.2 L195.7 415.2 L201.2 415.4 L206.6 416.1 L212.1 416.5 L216.9 419.3 L221.9 421.1"/><path d="M196.6 383.1 L202.0 385.9 L205.5 390.7"/><path d="M205.4 346.4 L203.9 351.9 L201.9 357.2 L198.7 362.0"/><path d="M278.6 465.6 L273.7 467.0 L268.7 468.3 L264.6 471.6 L259.7 473.0 L254.8 474.5 L250.3 476.8"/><path d="M274.8 560.3 L271.7 561.8 L270.3 565.0"/><path d="M274.8 560.3 L269.4 559.0 L264.7 555.8 L259.5 554.0"/><path d="M782.6 478.9 L781.8 484.1 L781.0 489.3 L777.4 493.6"/><path d="M313.2 278.6 L320.8 279.3 L328.1 277.1"/><path d="M165.5 351.8 L166.2 352.3 L167.1 352.3"/><path d="M278.6 356.6 L274.6 352.1 L271.7 346.6 L268.6 341.4 L263.5 337.7"/><path d="M278.6 356.6 L281.5 361.5 L285.0 365.9 L288.4 370.4 L290.5 375.8 L295.0 379.5"/><path d="M162.6 341.7 L167.3 338.3 L170.7 333.5 L175.1 329.9"/><path d="M619.6 565.3 L614.4 564.3 L609.6 562.2 L604.1 562.1 L599.5 559.2"/><path d="M619.6 565.3 L621.4 571.2 L625.7 575.6 L628.7 580.8"/><path d="M552.3 337.2 L550.2 332.1 L550.3 326.4 L548.3 321.2 L545.5 316.3 L545.7 310.6"/><path d="M811.4 439.6 L817.8 437.0 L822.7 432.3"/><path d="M567.4 474.6 L572.9 475.2 L578.4 474.3 L583.9 475.1"/><path d="M632.3 375.5 L631.9 369.2 L632.1 363.0 L634.6 357.0"/><path d="M632.3 375.5 L627.4 372.2 L623.0 368.4 L620.7 362.5 L617.7 357.4 L612.4 354.5"/><path d="M216.6 381.2 L218.8 379.8 L219.2 377.2"/><path d="M266.8 568.4 L265.4 563.1 L262.8 558.4 L259.5 554.0"/><path d="M334.0 344.3 L330.3 348.6 L326.1 352.5 L321.3 355.9 L318.2 360.7 L315.2 365.7"/><path d="M334.0 344.3 L335.3 347.1 L336.7 349.8"/><path d="M427.5 481.6 L426.2 487.2 L425.7 492.9 L424.4 498.5 L424.6 504.3 L424.8 510.0"/><path d="M427.5 481.6 L426.7 482.2 L427.2 481.3"/><path d="M427.5 481.6 L424.7 478.6 L424.9 474.6"/><path d="M466.5 530.1 L470.8 525.1 L474.7 519.9"/><path d="M489.4 278.3 L483.1 276.4 L476.6 276.7"/><path d="M225.2 341.6 L219.5 341.8 L213.8 342.9 L208.2 340.8"/><path d="M225.2 341.6 L229.4 345.1 L232.9 349.2 L235.8 353.9"/><path d="M328.1 277.1 L325.6 282.7 L324.0 288.5 L323.7 294.8 L321.1 300.4"/><path d="M531.3 503.8 L525.6 500.5 L521.9 495.1 L517.4 490.6"/><path d="M531.3 503.8 L536.2 502.0 L540.5 498.6 L546.1 498.5 L550.7 495.6 L555.7 494.1"/><path d="M531.3 503.8 L525.0 503.0 L519.8 499.3 L513.9 497.2"/><path d="M409.6 387.4 L406.4 393.9 L404.3 400.9"/><path d="M266.2 300.6 L263.7 303.0 L260.5 304.5"/><path d="M507.0 213.3 L505.5 218.7 L505.3 224.2 L504.9 229.7 L505.7 235.2 L505.9 240.7"/><path d="M637.1 397.2 L636.2 402.4 L633.9 407.1 L633.5 412.5 L632.7 417.7 L630.1 422.4 L628.0 427.2 L626.3 432.1"/><path d="M637.1 397.2 L632.0 400.5 L626.1 401.7 L620.2 403.1 L614.8 405.7"/><path d="M307.6 422.3 L302.8 422.3 L298.1 422.8"/><path d="M307.6 422.3 L309.2 427.8 L311.3 432.9 L315.6 436.7 L318.3 441.5 L322.1 445.6"/><path d="M145.0 306.2 L140.4 309.8 L135.9 313.3 L131.2 316.8 L128.1 321.9"/><path d="M145.0 306.2 L142.0 301.8 L138.1 298.1 L136.1 292.9 L133.5 288.1 L128.6 285.2 L124.2 281.9 L121.8 276.9"/><path d="M345.8 341.9 L340.8 345.3 L336.7 349.8"/><path d="M167.0 393.3 L167.7 387.0 L167.7 380.5 L167.5 374.1"/><path d="M207.4 395.8 L213.5 395.4 L219.7 394.6 L225.9 395.4"/><path d="M207.4 395.8 L205.3 393.7 L205.5 390.7"/><path d="M303.3 504.9 L309.4 505.9 L315.6 506.8 L321.6 509.0 L327.9 508.8"/><path d="M625.0 440.1 L624.4 438.5 L623.8 437.0"/><path d="M625.0 440.1 L627.2 436.4 L626.3 432.1"/><path d="M741.5 491.6 L743.9 496.3 L747.9 499.8 L751.2 503.8 L755.3 507.2 L758.0 511.7 L761.1 515.9"/><path d="M741.5 491.6 L740.0 486.8 L738.7 481.8 L736.7 477.2 L733.2 473.3"/><path d="M741.5 491.6 L735.4 489.3 L729.0 488.0"/><path d="M605.0 491.9 L606.6 484.6 L606.0 477.1"/><path d="M241.8 233.9 L237.4 237.9 L232.7 241.8 L230.2 247.4 L225.6 251.3 L222.9 256.8"/><path d="M146.9 329.5 L152.3 329.5 L157.5 328.2 L162.8 328.0"/><path d="M415.5 324.7 L416.3 319.4 L416.6 314.2 L414.7 309.0 L413.5 303.9 L414.1 298.6"/><path d="M415.5 324.7 L411.8 321.0 L406.7 319.5 L403.1 315.4 L397.9 314.1"/><path d="M731.0 438.4 L735.9 439.3 L740.8 440.7 L745.8 441.2 L751.0 440.1 L756.1 439.6 L760.8 442.5 L765.9 442.4 L770.8 443.4"/><path d="M731.0 438.4 L727.3 433.9 L721.7 431.5 L717.3 427.9 L713.7 423.3 L709.1 419.8"/><path d="M731.0 438.4 L727.1 442.4 L724.6 447.5 L721.7 452.1 L718.0 456.3 L714.5 460.6"/><path d="M717.3 560.2 L710.0 560.1 L702.8 558.9"/><path d="M281.4 414.6 L280.3 420.6 L279.6 426.7"/><path d="M441.1 199.1 L443.4 204.5 L445.1 210.3 L447.6 215.6 L452.3 219.8"/><path d="M441.1 199.1 L441.4 204.9 L440.6 210.5 L439.5 216.0 L437.6 221.4 L437.2 227.1 L435.2 232.5"/><path d="M163.3 359.2 L164.9 355.6 L167.1 352.3"/><path d="M826.1 482.4 L828.9 482.4 L831.6 481.5"/><path d="M654.6 433.8 L650.2 436.8 L647.8 441.6"/><path d="M768.4 554.8 L761.9 552.2 L755.0 551.1"/><path d="M768.4 554.8 L768.8 549.5 L769.3 544.1 L772.1 539.3 L774.0 534.3 L774.0 528.8 L775.4 523.7 L776.1 518.4"/><path d="M702.8 558.9 L705.0 553.8 L709.2 550.0"/><path d="M647.7 456.5 L643.5 460.8 L640.6 466.1"/><path d="M167.1 352.3 L168.5 357.7 L167.1 363.2 L168.3 368.7 L167.5 374.1"/><path d="M167.1 352.3 L171.1 348.9 L174.0 344.6 L177.3 340.6 L180.7 336.6 L183.7 332.4 L186.1 327.8"/><path d="M295.6 533.3 L292.5 537.6 L291.2 543.0 L289.1 548.0 L285.9 552.3 L282.0 556.2"/><path d="M201.9 306.3 L208.0 308.8 L213.7 312.2 L219.6 315.3"/><path d="M201.9 306.3 L200.9 303.2 L200.7 300.0"/><path d="M197.0 444.9 L197.4 451.2 L200.8 456.7 L200.7 463.1 L203.4 468.8"/><path d="M417.1 500.9 L413.4 504.3 L409.1 507.1"/><path d="M417.1 500.9 L420.2 506.1 L424.8 510.0"/><path d="M407.8 239.9 L410.1 246.6 L412.5 253.3"/><path d="M551.3 477.5 L550.4 472.2 L549.8 466.8 L547.1 462.0 L544.7 457.1 L544.9 451.5 L543.5 446.3"/><path d="M606.8 401.4 L601.4 398.8 L596.0 396.3 L590.8 393.1 L584.7 392.4 L579.0 390.5"/><path d="M308.5 204.3 L304.0 200.5 L299.3 197.1 L293.8 194.9"/><path d="M223.7 381.4 L225.4 388.3 L225.9 395.4"/><path d="M403.5 413.6 L407.6 409.9 L410.4 405.1 L415.3 402.0 L417.4 396.6 L421.2 392.7"/><path d="M322.9 392.7 L328.5 391.3 L332.6 387.3"/><path d="M282.0 556.2 L278.4 552.3 L274.3 548.8 L271.6 544.3 L267.9 540.5 L265.0 536.1 L261.4 532.2 L259.7 527.0"/><path d="M334.1 322.1 L330.5 318.4 L328.5 313.7 L325.5 309.5 L324.3 304.4 L321.1 300.4"/><path d="M370.2 416.1 L365.4 413.8 L360.5 411.9 L355.0 413.3 L349.9 412.1 L344.8 411.5 L339.8 410.0 L334.7 409.3"/><path d="M370.2 416.1 L370.7 410.5 L371.0 405.0 L368.7 399.7 L367.0 394.4 L367.3 388.9 L366.9 383.4"/><path d="M486.5 331.1 L481.5 332.2 L476.5 333.6 L471.8 336.0 L466.5 335.9 L461.2 335.8 L456.5 338.3"/><path d="M332.6 387.3 L331.8 392.8 L330.4 398.1"/><path d="M332.6 387.3 L326.9 385.9 L321.2 384.3 L315.3 384.5 L309.4 384.3"/><path d="M460.9 297.6 L459.0 302.6 L457.6 307.5 L457.7 312.7 L458.3 317.9 L459.1 323.1 L457.6 328.1 L457.3 333.2 L456.5 338.3"/><path d="M460.9 297.6 L459.5 292.9 L456.9 288.8"/><path d="M279.6 426.7 L280.0 432.6 L281.7 438.3 L282.5 444.2 L283.5 450.0"/><path d="M533.6 518.9 L534.7 524.0 L534.9 529.2 L533.6 534.4 L532.7 539.5 L532.0 544.7 L532.0 549.9 L533.2 555.0 L534.1 560.2"/><path d="M533.6 518.9 L528.3 520.1 L523.3 521.8 L519.5 525.8 L515.3 529.0"/><path d="M459.3 476.6 L464.1 474.1 L467.3 469.8"/><path d="M744.2 521.4 L741.9 527.2 L739.8 533.1 L739.7 539.3 L739.2 545.5"/><path d="M474.0 436.4 L474.4 442.3 L474.1 448.0 L470.8 453.1 L469.3 458.6 L468.5 464.2 L467.3 469.8"/><path d="M301.3 271.8 L296.3 273.5 L291.4 275.5 L286.3 277.2 L281.0 277.8 L276.1 279.8"/><path d="M371.6 528.7 L366.1 532.1 L360.9 535.8 L356.6 540.6"/><path d="M248.1 531.5 L253.4 528.1 L259.7 527.0"/><path d="M579.0 390.5 L583.0 386.2 L588.8 384.2 L592.7 379.9"/><path d="M193.7 450.5 L197.2 454.5 L198.2 459.8 L200.4 464.5 L203.4 468.8"/><path d="M740.5 361.4 L744.0 365.2 L746.2 370.1 L749.4 374.2 L753.6 377.5 L757.7 380.8 L759.8 385.8 L761.9 390.7 L766.1 394.0"/><path d="M740.5 361.4 L736.7 358.1 L733.6 354.1 L730.0 350.5 L727.1 346.3 L723.2 343.0 L719.1 340.1 L715.8 336.3 L711.1 333.9"/><path d="M740.5 361.4 L744.4 365.4 L746.2 370.9 L748.7 375.8 L753.5 379.2 L756.2 384.1 L760.8 387.5 L763.0 392.8"/><path d="M667.1 315.1 L672.6 316.7 L678.2 318.0 L683.6 320.0 L689.4 319.6 L695.1 319.9"/><path d="M667.1 315.1 L664.1 319.4 L659.5 322.2 L655.8 325.8 L653.2 330.5"/><path d="M667.1 315.1 L672.3 316.7 L676.2 320.2 L680.6 322.9 L684.0 327.0 L688.7 329.4"/><path d="M163.4 407.8 L163.7 412.3 L165.8 416.2"/><path d="M649.5 499.6 L649.9 493.1 L651.7 486.8 L653.7 480.7"/><path d="M222.9 256.8 L227.8 258.9 L232.9 260.8 L237.3 264.2 L241.8 267.4 L246.7 269.8 L252.0 271.3 L257.4 272.4"/><path d="M222.9 256.8 L219.8 252.4 L218.9 247.2 L216.1 242.7 L214.3 237.9 L214.6 232.4"/><path d="M623.8 437.0 L618.2 438.2 L612.8 436.7 L607.4 436.3 L601.9 435.6 L596.4 436.6 L590.9 437.3 L585.5 434.9"/><path d="M387.6 311.6 L393.3 309.8 L398.5 307.1 L403.7 304.2 L409.6 302.8 L414.1 298.6"/><path d="M387.6 311.6 L392.4 314.3 L397.9 314.1"/><path d="M387.6 311.6 L385.3 312.4 L383.0 313.3"/><path d="M394.8 494.3 L391.5 499.2 L390.0 504.9"/><path d="M394.8 494.3 L399.9 491.3 L405.9 490.7 L410.8 487.4 L415.7 484.0 L421.4 482.6 L427.2 481.3"/><path d="M311.0 445.6 L309.0 450.2 L305.0 453.1"/><path d="M269.8 292.8 L265.4 294.2 L261.0 295.8"/><path d="M356.6 540.6 L353.8 545.6 L352.9 551.3 L351.1 556.6 L349.1 561.9 L345.6 566.5"/><path d="M381.0 519.0 L383.7 514.1 L388.0 510.2 L390.0 504.9"/><path d="M330.4 398.1 L333.2 403.4 L334.7 409.3"/><path d="M519.4 462.6 L517.6 457.4 L515.0 452.5 L513.7 447.1 L513.6 441.4 L512.1 436.1 L511.5 430.5 L508.2 425.8"/><path d="M519.4 462.6 L523.9 458.9 L528.0 454.6 L532.7 451.2 L538.0 448.6 L543.5 446.3"/><path d="M774.2 477.6 L774.0 483.2 L774.0 488.7 L777.4 493.6"/><path d="M315.2 365.7 L309.2 367.8 L305.3 373.0 L300.9 377.3 L295.0 379.5"/><path d="M148.9 398.1 L150.8 403.2 L150.5 408.5 L151.1 413.7 L150.3 419.1 L150.7 424.4 L152.8 429.4"/><path d="M277.1 515.6 L284.0 517.9 L291.2 517.2"/><path d="M270.3 565.0 L267.1 561.0 L263.7 557.1 L259.5 554.0"/><path d="M474.7 519.9 L476.0 515.0 L477.0 510.0 L477.9 505.0 L480.7 500.6"/><path d="M711.0 523.0 L705.9 523.7 L700.8 522.9 L695.7 521.6 L690.5 521.3 L685.4 521.6 L680.3 521.0 L675.2 523.3 L670.1 523.3"/><path d="M711.0 523.0 L709.8 516.8 L707.7 511.1 L705.8 505.3 L700.7 500.9"/><path d="M632.9 515.4 L635.2 520.3 L638.6 524.3 L640.7 529.4 L643.9 533.6 L648.2 537.0"/><path d="M537.1 474.5 L538.5 468.9 L540.1 463.4 L541.6 457.8 L543.0 452.2 L543.5 446.3"/><path d="M293.8 194.9 L295.8 200.4 L297.4 206.0 L298.0 211.7 L297.8 217.7"/><path d="M650.4 543.3 L649.8 545.5 L651.1 547.4"/><path d="M432.6 393.0 L426.9 393.8 L421.2 392.7"/><path d="M244.8 428.1 L248.7 423.9 L252.3 419.6 L256.5 415.8 L261.1 412.4 L264.8 408.1 L268.9 404.3 L272.8 400.2"/><path d="M272.8 400.2 L275.6 395.8 L279.6 392.7 L283.9 389.8 L288.1 387.0 L292.5 384.3 L295.0 379.5"/><path d="M360.5 338.0 L365.7 336.1 L370.6 333.8 L374.1 329.2 L379.3 327.3 L383.2 323.4"/><path d="M334.7 409.3 L328.2 406.8 L323.2 401.9"/><path d="M761.1 515.9 L762.7 521.6 L764.5 527.2"/><path d="M452.3 219.8 L455.0 224.2 L457.6 228.8 L457.2 234.4 L460.1 238.9 L462.1 243.6 L463.0 248.8"/><path d="M695.1 319.9 L698.2 324.5 L702.7 327.3 L706.6 330.9 L711.1 333.9"/><path d="M506.1 275.5 L504.2 270.4 L502.4 265.3 L503.6 259.7 L502.3 254.5"/><path d="M182.6 274.0 L182.7 271.6 L181.3 269.6"/><path d="M182.6 274.0 L186.9 277.5 L189.4 282.1 L191.7 287.0 L195.6 290.7 L197.1 296.1 L200.7 300.0"/><path d="M293.1 322.7 L295.3 327.7 L299.2 331.7 L300.8 337.0"/><path d="M293.1 322.7 L287.9 322.3 L282.8 321.1 L277.6 320.9 L272.6 319.6 L267.4 319.1"/><path d="M440.4 298.2 L446.0 295.2 L452.2 293.2 L456.9 288.8"/><path d="M626.3 432.1 L624.5 426.6 L620.8 421.9 L619.3 416.3 L617.9 410.6 L614.8 405.7"/><path d="M414.1 298.6 L409.9 302.4 L406.8 307.2 L403.0 311.4 L397.9 314.1"/><path d="M259.7 527.0 L259.4 521.6 L260.3 516.4 L263.0 511.6"/><path d="M219.6 315.3 L214.5 313.6 L209.2 314.9 L203.9 315.5 L198.7 315.3 L193.7 313.2"/><path d="M219.6 315.3 L224.4 317.0 L229.7 317.3 L234.3 319.5 L239.3 321.0 L244.4 321.5 L249.2 323.5"/><path d="M219.6 315.3 L214.5 311.9 L209.3 308.7 L205.4 303.8 L200.7 300.0"/><path d="M705.8 489.2 L703.0 494.9 L700.7 500.9"/><path d="M435.2 232.5 L429.8 231.1 L424.5 229.5 L419.5 227.5 L414.6 224.9 L410.3 221.3"/><path d="M300.8 337.0 L295.5 336.3 L290.3 336.9 L285.2 338.9 L279.9 338.8 L274.7 339.5 L269.4 338.5"/><path d="M400.4 464.4 L404.8 467.6 L409.5 470.1 L414.8 471.3 L419.8 473.1 L424.9 474.6"/><path d="M853.7 453.6 L847.5 455.9 L841.0 457.1 L835.4 460.6"/><path d="M590.5 479.2 L587.3 477.0 L583.9 475.1"/><path d="M764.5 527.2 L770.5 523.1 L776.1 518.4"/><path d="M397.9 314.1 L393.8 318.5 L387.8 319.8 L383.2 323.4"/><path d="M612.4 354.5 L606.5 353.7 L600.7 353.2 L594.9 351.4 L588.9 352.0 L583.1 351.6"/><path d="M612.4 354.5 L607.5 352.7 L602.9 350.0 L598.3 347.6 L593.8 344.7 L588.6 343.8 L583.3 343.0"/><path d="M88.6 242.1 L87.5 241.7 L87.8 242.8"/><path d="M617.8 385.2 L613.1 382.7 L608.0 381.8 L603.2 379.8 L598.3 378.3 L592.7 379.9"/><path d="M193.7 313.2 L192.4 318.7 L188.9 323.0 L186.1 327.8"/><path d="M733.2 473.3 L739.2 472.0 L744.6 469.2"/><path d="M592.7 379.9 L589.3 374.7 L587.6 369.0 L585.3 363.4 L584.6 357.4 L583.1 351.6"/><path d="M253.1 316.5 L257.8 311.1 L260.5 304.5"/><path d="M517.5 482.4 L522.6 478.7 L527.9 475.5 L534.2 474.3"/><path d="M508.5 245.6 L508.3 242.6 L505.9 240.7"/><path d="M811.8 464.1 L809.0 459.1 L805.2 454.7 L802.9 449.4 L802.1 443.4 L800.0 438.1 L796.2 433.7"/><path d="M327.9 508.8 L327.2 514.7 L324.9 520.1"/><path d="M401.2 346.3 L401.8 344.4 L400.6 342.7"/><path d="M401.2 346.3 L402.2 352.0 L402.5 357.7 L403.0 363.4 L402.2 369.2"/><path d="M493.9 559.6 L498.9 562.1 L503.8 564.9 L508.4 568.0 L512.6 571.8 L516.9 575.3 L521.4 578.5 L524.9 583.2"/><path d="M115.7 248.9 L117.8 254.3 L117.7 260.1 L118.0 265.8 L119.4 271.3"/><path d="M332.3 513.2 L328.5 516.5 L324.9 520.1"/><path d="M272.9 301.3 L274.6 297.5 L277.5 294.4"/><path d="M411.2 219.0 L410.3 220.0 L410.3 221.3"/><path d="M623.4 557.7 L623.2 563.8 L626.3 569.2 L627.2 575.1 L628.7 580.8"/><path d="M543.5 446.3 L546.5 442.2 L548.1 437.4 L549.1 432.3 L550.1 427.2 L553.4 423.2 L554.6 418.2 L556.9 413.7 L560.3 409.8"/></g>
<g fill="none" stroke="#e2457a" stroke-width="1.1"><path d="M727.9 527.8 L728.9 523.2 L733.3 520.8 L736.7 517.8 L737.3 513.0 L739.8 509.4 L742.1 505.7 L745.8 502.8 L746.3 498.0"/><path d="M727.9 527.8 L732.1 527.9 L736.3 526.6 L740.5 526.4 L744.6 527.3 L748.9 525.6 L753.0 526.2 L757.2 526.6 L761.3 528.2 L765.5 529.3 L769.7 527.5 L773.9 527.3 L778.0 529.7 L782.3 527.7 L786.5 527.9 L790.6 529.6"/><path d="M869.7 538.4 L866.4 535.8 L864.5 531.7 L859.7 530.9 L857.2 527.5 L854.1 524.6 L850.2 522.7 L848.2 518.7 L843.9 517.3 L841.5 513.7 L838.9 510.4 L834.4 509.2 L831.9 505.7 L828.3 503.6 L826.7 499.1 L824.5 495.2 L820.1 493.9 L818.1 489.9 L814.0 488.2 L810.6 485.9 L807.5 483.0 L804.9 479.7 L801.8 477.0 L799.7 473.0 L794.7 472.3"/><path d="M794.7 472.3 L792.1 468.7 L791.7 464.5 L789.5 460.7 L788.2 456.7 L790.2 451.9 L789.1 447.9"/><path d="M733.3 441.1 L737.2 442.3 L741.2 442.2 L745.2 442.6 L749.2 443.3 L753.3 442.8 L757.3 442.9 L761.1 444.7 L765.1 445.7 L769.3 444.3 L773.3 444.6 L777.2 445.7 L781.0 448.0 L785.2 446.4 L789.1 447.9"/><path d="M789.1 447.9 L791.8 444.8 L793.5 441.2 L793.4 436.6 L794.7 432.8 L798.3 430.1 L800.7 426.8 L800.9 422.4 L803.4 419.2 L804.8 415.4 L808.1 412.6 L808.0 408.0 L809.5 404.3 L810.7 400.4 L814.2 397.7 L817.5 394.9 L820.8 392.1 L821.5 387.9 L823.0 384.2 L826.1 381.3 L828.8 378.2 L829.9 374.2 L829.7 369.6 L831.5 366.0 L833.8 362.7 L836.6 359.6 L836.5 355.0 L839.3 352.0 L841.6 348.7 L842.1 344.4 L842.9 340.3 L847.2 338.0 L847.9 333.9 L849.6 330.3 L851.5 326.7"/><path d="M707.5 541.9 L711.3 540.2 L714.0 536.8 L717.2 534.1 L721.5 533.1 L724.5 530.2 L727.9 527.8"/><path d="M194.1 283.4 L194.5 288.0 L198.5 290.4 L200.9 293.8 L204.1 296.7 L207.2 299.6 L209.3 303.2 L210.7 307.2 L212.3 311.1 L214.1 314.9 L215.7 318.8 L219.5 321.3 L222.7 324.1 L225.3 327.4 L228.1 330.5 L230.4 334.0 L232.8 337.3 L232.8 342.3 L234.8 345.9 L235.8 350.2 L238.9 353.2"/><path d="M179.5 292.4 L179.9 296.4 L178.4 300.6 L179.7 304.5 L181.5 308.3 L180.6 312.5 L182.4 316.3 L183.2 320.2 L182.8 324.3 L183.2 328.3 L185.3 332.1 L186.6 336.0 L184.3 340.3 L184.5 344.4 L183.6 348.5 L187.2 352.1 L189.3 355.9 L188.0 360.1 L187.2 364.3 L186.6 368.4 L189.1 372.1 L187.8 376.3 L190.4 380.1 L190.4 384.1"/><path d="M707.5 541.9 L704.6 542.7 L705.4 545.6"/><path d="M629.8 290.5 L625.3 289.7 L622.9 285.9 L620.1 282.5 L616.0 281.1 L613.5 277.4 L609.1 276.5 L605.2 274.8 L602.3 271.7 L599.7 268.0 L595.6 266.6 L591.0 266.2 L588.9 261.8 L584.5 260.8 L580.7 258.9 L577.8 255.9 L574.2 253.8"/><path d="M173.5 295.3 L170.0 293.2 L166.5 291.1 L163.7 288.2 L160.0 286.4 L156.3 284.5 L154.8 280.1 L151.4 278.0 L149.4 274.2 L146.1 271.8 L142.6 269.8 L139.2 267.6 L136.5 264.5 L135.3 259.9 L131.6 258.0"/><path d="M173.5 295.3 L170.7 298.6 L166.4 299.7"/><path d="M166.4 299.7 L163.1 297.1 L158.7 296.7 L155.7 293.6 L151.8 292.1 L149.3 288.2 L145.7 286.1 L141.1 286.1 L136.7 285.7 L134.0 282.1 L130.5 279.9 L126.6 278.5 L122.2 278.1 L119.4 274.5"/><path d="M131.6 258.0 L127.5 260.1 L126.9 264.7 L124.0 267.7 L122.2 271.4 L119.4 274.5"/><path d="M179.5 292.4 L176.3 293.3 L173.5 295.3"/><path d="M194.1 283.4 L195.8 282.8 L194.8 281.4"/><path d="M149.5 207.9 L147.7 211.7 L146.9 215.7 L145.2 219.4 L145.8 224.0 L145.2 228.1 L144.3 232.2 L142.3 235.8 L141.8 239.9 L137.7 242.8 L136.8 246.8 L137.0 251.2 L135.9 255.2 L131.6 258.0"/><path d="M47.7 292.6 L51.5 290.6 L55.6 290.1 L59.7 289.8 L63.3 287.1 L67.3 286.3 L71.7 286.9 L75.2 284.0 L79.3 283.2 L83.6 283.5 L87.7 283.0 L91.9 282.8 L95.6 280.9 L99.5 279.5 L104.0 280.6 L107.8 278.7 L112.0 278.6 L116.2 278.2 L119.4 274.5"/><path d="M160.3 349.0 L156.4 350.6 L152.4 352.0 L147.9 352.2 L144.4 354.9 L140.2 355.6 L136.2 357.0 L132.0 357.9 L127.5 357.7 L123.5 359.3 L120.1 362.5"/><path d="M160.3 349.0 L160.8 344.7 L157.7 341.4 L154.9 338.0 L154.7 333.8 L155.5 329.4 L154.6 325.5 L154.6 321.3 L151.3 318.0"/><path d="M151.3 318.0 L146.5 317.8 L142.3 320.9 L137.5 320.0 L133.3 322.9 L128.4 322.0"/><path d="M99.2 419.6 L102.5 416.5 L101.2 411.7 L104.9 408.7 L104.5 404.3 L104.1 399.8 L104.9 395.8 L109.4 393.1 L109.4 388.8 L113.0 385.8 L115.2 382.3 L115.5 378.0 L115.5 373.7 L116.0 369.6 L119.8 366.7 L120.1 362.5"/><path d="M183.0 383.2 L179.5 380.6 L176.1 377.9 L174.7 374.0 L173.0 370.1 L170.2 367.1 L168.4 363.4 L165.0 360.6 L164.9 355.8 L162.3 352.6 L160.3 349.0"/><path d="M166.4 299.7 L163.2 303.2 L158.6 305.6 L155.5 309.2 L151.6 312.1 L151.3 318.0"/><path d="M743.4 -211.2 L742.1 -207.4 L741.7 -203.1 L740.1 -199.4 L739.1 -195.5 L736.8 -192.1 L733.2 -189.4 L731.8 -185.7 L730.9 -181.6 L726.5 -179.4 L724.9 -175.7 L722.1 -172.6 L721.1 -168.7 L719.8 -164.8 L719.2 -160.6 L717.5 -157.0 L713.5 -154.5 L712.0 -150.8 L711.9 -146.4 L709.0 -143.3 L706.2 -140.3 L706.0 -135.9 L705.4 -131.7 L702.0 -128.9 L700.9 -125.0 L697.4 -122.3 L694.7 -119.2 L694.7 -114.7 L694.7 -110.2 L692.2 -107.0 L691.6 -102.8 L688.6 -99.8 L685.5 -96.9 L684.3 -93.0 L682.9 -89.2 L682.3 -85.1 L678.1 -82.7 L675.1 -79.7 L673.1 -76.3 L671.6 -72.5 L669.0 -69.4 L669.9 -64.4 L669.2 -60.2 L666.4 -57.2 L665.4 -53.2 L664.4 -49.2 L662.5 -45.7 L659.8 -42.6 L656.8 -39.6 L653.7 -36.7 L650.9 -33.6 L648.1 -30.5 L646.8 -26.7 L648.0 -21.6 L645.1 -18.6 L642.1 -15.6 L642.6 -10.9 L639.2 -8.1 L636.6 -5.0 L635.9 -0.8 L636.4 3.9 L634.3 7.3 L632.4 10.9 L631.7 15.0 L627.5 17.4 L624.7 20.4 L622.8 24.0 L622.0 28.1 L619.4 31.2 L619.1 35.6 L617.2 39.1 L617.3 43.6 L613.5 46.2 L612.7 50.3 L611.2 54.0 L607.6 56.7 L605.1 59.9 L603.7 63.7 L603.3 67.9 L601.2 71.4 L600.5 75.5 L596.7 78.1 L596.1 82.2 L592.7 85.0 L591.7 89.0 L590.6 92.9 L587.9 96.0 L587.6 100.4 L586.2 104.2 L584.8 107.9 L580.3 110.2 L579.1 114.1 L579.3 118.6 L576.0 121.5 L576.1 126.0 L574.6 129.7 L570.6 132.2 L567.4 135.1 L565.4 138.6 L565.0 142.8 L565.0 147.3 L563.6 151.1 L562.5 155.0 L561.1 158.8 L557.3 161.4 L554.6 164.5 L554.1 168.7 L552.5 172.4 L549.4 175.3 L546.2 178.2 L545.3 182.2 L544.9 186.5 L543.9 190.5 L540.4 193.2 L537.4 196.2 L534.2 199.0 L531.8 202.3 L531.1 206.5 L531.4 211.1 L529.5 214.6 L526.0 217.4 L525.3 221.5"/><path d="M525.3 221.5 L521.2 220.9 L517.0 220.7 L513.5 217.3 L509.4 216.5 L504.8 217.9 L501.2 215.1 L496.8 216.0 L493.1 213.2 L489.3 211.5 L485.5 209.4 L481.3 209.3 L476.7 210.6 L472.2 211.4 L467.9 211.5 L464.7 207.0"/><path d="M605.5 500.3 L609.5 501.9 L614.0 502.0 L617.3 505.6 L622.2 504.9 L626.1 506.8 L629.5 510.0 L633.7 511.1 L638.2 511.4 L642.2 513.0 L646.0 515.2 L650.0 516.8 L654.1 518.2"/><path d="M605.5 500.3 L608.6 497.7 L612.2 495.9 L615.8 494.2 L619.7 492.6 L622.0 488.9 L625.6 487.0 L628.6 484.2 L631.4 481.2 L634.1 478.0 L636.9 474.9 L640.1 472.5 L645.3 473.1 L649.9 472.8 L653.2 470.4 L656.2 467.6 L659.3 465.0 L662.5 462.5"/><path d="M654.1 518.2 L654.1 513.9 L656.7 510.2 L655.7 505.7 L657.9 501.9 L658.6 497.8 L660.3 493.9 L659.4 489.4 L660.6 485.4 L660.5 481.1 L662.5 477.3 L663.9 473.3 L666.7 469.7 L666.1 465.3"/><path d="M662.5 462.5 L665.5 462.3 L666.1 465.3"/><path d="M693.4 479.1 L690.1 476.0 L686.0 474.5 L682.2 472.3 L677.6 471.6 L673.4 470.2 L670.2 467.0 L666.1 465.3"/><path d="M655.5 421.5 L652.3 419.2 L650.2 415.3 L647.0 412.9 L642.2 412.5 L640.2 408.5 L636.4 406.8 L633.1 404.5 L629.9 402.1"/><path d="M579.6 474.9 L579.5 476.8 L580.7 478.4"/><path d="M605.5 500.3 L601.6 502.0 L597.7 500.3"/><path d="M580.7 478.4 L584.2 481.5 L585.5 486.4 L587.3 490.8 L592.0 493.0 L595.2 496.4 L597.7 500.3"/><path d="M238.9 353.2 L243.3 353.0 L246.0 349.1 L250.5 349.1 L253.9 346.7 L257.8 345.4 L260.7 341.8 L265.6 342.7 L268.9 340.1"/><path d="M268.9 340.1 L269.0 335.6 L271.0 332.0 L274.2 328.9 L275.5 325.1 L278.9 322.1 L281.1 318.6 L280.8 313.9"/><path d="M280.8 313.9 L281.8 309.5 L284.6 305.6 L287.0 301.5 L289.2 297.4 L291.1 293.2 L288.3 287.6"/><path d="M311.8 251.1 L309.0 247.9 L309.3 243.3 L307.4 239.7 L306.9 235.5 L304.0 232.4 L303.5 228.2 L302.2 224.3 L300.4 220.7 L298.5 217.1 L297.8 212.9 L293.4 210.5 L291.0 207.1 L287.9 204.1 L287.1 200.0 L284.9 196.6 L284.2 192.5 L284.6 187.8 L282.8 184.2 L280.8 180.7 L278.9 177.1 L278.6 172.8 L277.9 168.6 L273.4 166.2"/><path d="M290.9 286.1 L290.2 287.9 L288.3 287.6"/><path d="M629.7 401.1 L631.9 402.0 L631.1 399.7"/><path d="M311.8 251.1 L317.0 251.0 L322.2 250.3"/><path d="M444.0 67.5 L440.8 70.3 L440.3 74.7 L438.9 78.6 L437.6 82.6 L436.5 86.6 L432.6 89.0 L429.0 91.5 L426.5 94.8 L423.0 97.4 L422.5 101.9 L422.2 106.4 L418.2 108.7 L416.1 112.1 L414.5 115.9 L411.6 118.9 L410.1 122.8 L407.9 126.1 L407.5 130.6 L405.0 133.9 L401.6 136.6 L400.2 140.4 L399.3 144.6 L395.7 147.1 L393.2 150.4 L391.7 154.2 L391.7 158.9 L389.0 162.0 L386.3 165.2 L384.0 168.5 L382.0 172.0 L380.3 175.7 L378.5 179.4 L377.7 183.6 L376.4 187.5 L373.1 190.3 L372.5 194.6 L368.0 196.7"/><path d="M250.0 510.0 L254.4 508.0 L258.7 509.0 L263.0 511.0 L267.3 510.7 L271.7 508.7 L276.0 511.5 L280.3 510.6"/><path d="M250.0 510.0 L248.3 514.0 L245.7 517.2 L242.1 519.8 L239.5 523.1 L238.8 527.7 L235.5 530.5 L234.7 535.0 L230.7 537.3 L228.1 540.6 L226.1 544.3 L224.1 548.1 L223.2 552.5 L220.6 555.8 L218.4 559.3 L214.5 561.7 L211.5 564.7"/><path d="M314.5 563.3 L318.7 561.6 L322.4 559.6 L322.7 554.3 L324.4 550.4 L327.7 547.8 L329.4 544.0 L331.6 540.4 L336.5 539.4"/><path d="M314.5 563.3 L310.2 563.7 L306.9 560.3 L302.3 561.6 L298.8 559.1"/><path d="M328.7 521.7 L324.9 520.1 L320.9 519.7 L316.6 520.3 L312.3 520.6 L308.2 520.4 L304.6 518.1 L301.0 515.8 L296.7 516.6 L293.5 512.5 L289.7 510.8 L286.0 509.1 L281.6 510.3"/><path d="M281.6 510.3 L281.5 512.4 L280.3 510.6"/><path d="M311.4 464.8 L311.7 464.8 L312.0 464.7"/><path d="M495.5 499.3 L492.9 503.3 L488.2 504.1 L484.3 506.2 L481.1 509.2 L478.7 513.2 L474.2 514.4 L470.6 516.8 L467.0 519.4 L462.5 520.5 L460.2 524.7"/><path d="M533.9 512.7 L530.3 510.9 L526.6 509.1 L522.2 509.4 L518.0 508.9 L513.9 508.4 L510.3 506.3 L507.0 503.4 L503.0 502.6 L498.8 502.2 L495.5 499.3"/><path d="M533.9 512.7 L532.0 516.4 L530.3 520.1 L531.2 524.4 L532.0 528.8 L529.6 532.3 L526.6 535.7 L526.0 539.6 L525.7 543.7 L526.8 548.1 L523.1 551.3 L520.9 554.9 L522.2 559.4 L523.0 563.7 L523.0 567.8 L522.8 571.9 L519.2 575.1 L518.6 579.1 L518.4 583.2 L516.6 586.9 L514.9 590.6 L515.6 594.9 L513.6 598.5 L514.0 602.7 L513.3 606.7 L512.1 610.5 L511.4 614.5 L507.4 617.6 L505.8 621.3 L503.6 624.9 L502.2 628.7 L501.0 632.5 L500.3 636.4 L501.0 640.8"/><path d="M460.2 524.7 L458.9 528.9 L460.7 532.9 L461.7 537.0 L460.6 541.1 L459.3 545.3 L461.5 549.3 L461.3 553.5 L460.0 557.7 L459.0 561.8 L460.5 565.9 L462.6 569.9 L463.1 574.0 L465.0 578.0 L464.8 582.2 L465.5 586.2 L466.5 590.3 L464.4 594.5 L465.4 598.6 L463.4 602.8 L462.5 607.0 L463.8 611.1 L466.1 615.1 L465.8 619.2 L467.7 623.2 L466.3 627.4 L465.2 631.6"/><path d="M495.5 499.3 L495.8 497.8 L496.9 496.7"/><path d="M580.7 478.4 L578.6 482.5 L575.8 485.6 L572.6 488.3 L567.8 488.8 L564.9 491.8 L561.3 493.9 L557.1 495.3 L554.3 498.4 L550.6 500.4 L546.6 502.0 L544.0 505.3 L540.5 507.6 L538.2 511.5 L533.9 512.7"/><path d="M579.6 474.9 L577.1 471.0 L573.9 468.3 L570.7 465.6 L565.8 465.5 L561.6 464.4 L558.5 461.4"/><path d="M701.4 334.1 L700.1 338.2 L697.4 341.9 L696.1 346.0 L697.8 350.8 L696.3 354.8 L694.3 358.7 L694.2 363.0 L693.8 367.3 L694.4 371.8 L691.3 375.5"/><path d="M372.5 238.1 L371.4 233.2 L372.8 228.6 L375.6 224.2 L374.7 219.4"/><path d="M372.5 238.1 L376.9 238.4 L381.0 237.0 L385.3 236.7 L389.6 236.5 L393.5 233.9 L397.9 234.4 L401.6 231.0 L405.9 230.8 L409.9 228.5 L413.9 226.7 L418.2 226.6 L423.0 228.7 L427.1 227.8"/><path d="M370.4 242.5 L369.8 239.5 L372.5 238.1"/><path d="M-547.0 958.9 L-544.5 955.5 L-539.8 955.1 L-535.9 953.7 L-532.9 951.1 L-530.8 947.0 L-528.1 943.8 L-525.0 941.3 L-520.4 940.9 L-518.0 937.3 L-514.4 935.4 L-511.0 933.2 L-507.8 930.8 L-503.4 930.2 L-499.3 929.1 L-495.3 927.8 L-491.7 926.0 L-489.6 921.9 L-485.8 920.3 L-482.2 918.6 L-478.5 916.8 L-476.1 913.1 L-473.2 910.3 L-469.5 908.6 L-467.5 904.4 L-464.6 901.5 L-461.7 898.6 L-459.1 895.3 L-455.2 893.9 L-451.5 892.3 L-447.6 890.8 L-444.4 888.5 L-442.0 884.8 L-437.1 884.9 L-433.0 883.7 L-429.0 882.4 L-426.1 879.6 L-423.9 875.8 L-421.9 871.6 L-417.5 870.9 L-413.6 869.5 L-410.5 866.8 L-406.2 866.0 L-403.4 863.1 L-399.3 861.9 L-395.6 860.3 L-393.0 856.9 L-391.3 852.2 L-387.1 851.3 L-383.3 849.8 L-380.7 846.4 L-378.4 842.7 L-375.5 839.7 L-372.4 837.1 L-367.8 836.8 L-364.3 834.9 L-360.6 833.0 L-357.0 831.3 L-352.8 830.3 L-350.4 826.7 L-347.1 824.3 L-344.8 820.6 L-341.3 818.6 L-338.8 815.2 L-336.1 812.0 L-332.7 809.9 L-327.5 810.4 L-323.1 809.8 L-319.4 808.0 L-317.4 803.8 L-314.9 800.3 L-310.8 799.2 L-306.8 798.0 L-304.0 795.0 L-299.8 794.0 L-298.1 789.4 L-294.3 787.8 L-290.8 785.8 L-287.4 783.6 L-284.6 780.7 L-281.1 778.7 L-278.5 775.3 L-273.7 775.2 L-271.7 771.0 L-268.8 768.2 L-265.0 766.6 L-260.8 765.7 L-257.1 763.9 L-255.2 759.6 L-251.9 757.2 L-248.2 755.6 L-246.0 751.7 L-242.3 750.1 L-238.9 747.8 L-236.0 744.9 L-232.7 742.8 L-229.5 740.3 L-225.7 738.7 L-222.3 736.5 L-219.3 733.8 L-215.3 732.6 L-212.6 729.4 L-209.4 727.0 L-205.9 725.0 L-201.0 725.1 L-197.3 723.4 L-194.8 719.9 L-190.3 719.3 L-186.4 717.9 L-183.5 715.0 L-180.0 713.1 L-176.1 711.7 L-174.3 707.2 L-170.6 705.5 L-167.8 702.4 L-163.7 701.4 L-161.3 697.7 L-157.1 696.8 L-155.0 692.8 L-151.7 690.4 L-148.8 687.6 L-145.5 685.3 L-142.4 682.6 L-138.9 680.7 L-135.9 678.0 L-133.0 675.0 L-129.6 673.0 L-125.4 672.0 L-121.6 670.4 L-117.2 669.8 L-114.7 666.3 L-112.0 663.2 L-109.7 659.4 L-104.9 659.2 L-101.9 656.5 L-98.5 654.4 L-94.1 653.7 L-90.5 651.9 L-87.4 649.3 L-83.7 647.7 L-81.0 644.5 L-76.9 643.3 L-75.1 638.8 L-71.5 636.9 L-68.9 633.7 L-64.8 632.6 L-61.0 631.0 L-57.3 629.3 L-54.8 625.9 L-51.8 623.1 L-48.9 620.2 L-45.6 617.9 L-42.1 615.9 L-39.1 613.2 L-35.2 611.9 L-31.0 610.9 L-27.6 608.7 L-25.0 605.4 L-20.6 604.7 L-18.7 600.3 L-15.6 597.8 L-11.6 596.5 L-8.3 594.2 L-4.7 592.4 L-1.4 590.1 L1.2 586.8 L4.4 584.4 L8.8 583.7 L10.6 579.2 L13.0 575.6 L16.2 573.1 L20.6 572.4 L24.0 570.3 L26.8 567.4 L29.5 564.2 L32.3 561.1 L37.1 561.1 L40.4 558.7 L44.0 556.9 L47.1 554.3 L50.7 552.4 L54.1 550.4 L57.1 547.6 L60.3 545.1 L64.1 543.6 L66.6 540.1 L71.4 540.1 L74.7 537.9 L76.7 533.5 L80.3 531.7 L84.8 531.2 L87.4 528.0 L91.9 527.4 L94.9 524.6 L96.8 520.3 L100.2 518.2 L103.7 516.1 L107.5 514.6 L112.0 514.0 L115.1 511.6 L119.3 510.5 L121.1 506.1 L123.9 502.9 L126.3 499.4 L130.9 499.1 L133.3 495.4 L137.0 493.8 L140.0 491.0 L143.2 488.6 L146.7 486.6 L150.3 484.7 L153.8 482.7 L157.4 480.9 L160.7 478.6 L164.8 477.5 L168.6 475.9 L170.7 471.8 L173.8 469.3 L177.3 467.3 L179.9 464.0 L184.4 463.5 L187.9 461.5 L191.7 459.9 L193.5 455.5 L196.7 452.9 L200.0 450.7 L204.0 449.5 L208.2 448.4 L210.4 444.6 L212.6 440.6 L216.8 439.6 L219.0 435.8 L223.8 435.8"/><path d="M218.9 390.2 L219.5 394.3 L221.1 398.0 L222.9 401.6 L226.3 404.6 L226.1 409.0 L227.5 412.7"/><path d="M223.8 435.8 L223.0 430.9 L224.8 426.5 L224.9 421.8 L228.2 417.6 L227.5 412.7"/><path d="M340.1 446.9 L344.0 449.0 L345.1 453.5 L348.7 455.8 L351.7 458.6 L354.2 461.9 L356.6 465.3 L360.9 466.9 L362.2 471.3 L365.0 474.3 L369.2 476.1 L370.5 480.4"/><path d="M334.4 492.6 L338.4 491.3 L342.8 490.9 L346.5 488.6 L350.3 486.8 L354.0 484.6 L358.7 485.3 L362.3 482.5 L366.3 481.3 L370.5 480.4"/><path d="M340.1 446.9 L334.2 445.1 L330.1 440.5"/><path d="M330.1 440.5 L327.6 441.6 L324.8 441.8"/><path d="M445.7 264.6 L449.9 264.4 L453.6 266.3 L457.6 267.0 L461.5 268.4 L465.5 269.1 L469.7 268.5"/><path d="M370.4 242.5 L373.8 245.5 L377.0 248.7 L377.3 253.3 L378.7 257.3 L380.9 260.9 L383.1 264.6 L385.0 268.3 L385.7 272.7 L387.7 276.5"/><path d="M387.7 276.5 L391.7 275.9 L395.7 274.5 L400.0 276.0 L404.0 274.4 L408.0 273.7 L412.0 273.1 L416.2 273.5 L420.3 272.9 L424.3 272.3 L428.5 272.8 L432.4 270.8"/><path d="M445.7 264.6 L441.5 267.1 L437.9 270.9 L432.4 270.8"/><path d="M387.7 276.5 L386.6 280.4 L386.1 284.7 L382.8 287.6 L382.0 291.7 L378.6 294.5 L375.7 297.5 L372.1 300.1 L369.5 303.3 L370.5 308.4"/><path d="M369.0 308.0 L364.7 306.2 L360.3 306.1 L355.8 306.7 L351.5 305.3 L346.9 307.4 L342.4 308.3 L338.1 306.3"/><path d="M280.8 313.9 L285.1 314.4 L288.7 317.0 L292.8 318.0 L296.9 319.0 L301.2 319.5 L304.5 322.7 L309.0 323.0 L313.4 323.2 L316.6 326.7 L320.9 327.2 L324.2 330.5"/><path d="M338.1 306.3 L336.2 310.5 L331.9 313.4 L328.8 317.0 L327.7 321.8 L324.4 325.3 L324.2 330.5"/><path d="M268.9 340.1 L273.6 340.8 L277.3 342.8 L279.5 347.2 L283.2 349.4 L285.8 353.1 L290.5 353.7 L292.9 357.8 L297.2 359.0 L300.3 362.0 L304.5 363.4 L309.2 364.0 L312.3 367.1 L315.7 369.6 L318.7 372.9"/><path d="M324.2 330.5 L325.9 334.4 L327.2 338.3 L325.5 342.6 L326.3 346.6 L325.6 350.7 L324.4 354.9 L325.5 358.9 L326.0 362.9 L327.5 366.8 L328.8 370.7"/><path d="M591.3 537.7 L589.3 541.5 L587.9 545.7 L583.7 547.8 L581.4 551.3 L579.5 555.1 L576.8 558.3 L573.4 561.1 L570.4 564.0 L569.5 568.6 L568.0 572.7 L566.0 576.5 L560.9 577.9 L558.7 581.5 L557.4 585.8 L554.7 589.0 L551.0 591.5"/><path d="M643.5 572.6 L640.8 576.6 L637.0 579.2 L633.3 581.9 L628.4 582.9 L625.2 586.1"/><path d="M703.8 579.3 L700.0 577.0 L695.9 577.6 L691.6 579.3 L687.8 576.4 L683.8 576.6 L679.7 576.9 L675.6 576.9 L671.3 578.3 L667.4 576.9 L663.4 576.2 L659.5 575.1 L655.4 575.3 L651.5 574.0 L647.3 574.4 L643.5 572.6"/><path d="M514.8 433.8 L509.7 435.2 L505.2 438.2 L500.2 440.0"/><path d="M500.2 440.0 L499.5 443.3 L497.0 445.5"/><path d="M515.8 394.1 L515.8 392.2 L517.5 393.0"/><path d="M515.8 394.1 L517.3 398.6 L516.2 402.9 L516.7 407.4 L514.9 411.7 L516.1 416.2 L516.4 420.6 L517.9 425.0 L514.9 429.4 L514.8 433.8"/><path d="M553.2 455.7 L555.2 451.9 L553.8 447.6 L556.7 444.0 L555.6 439.7 L555.4 435.6 L555.0 431.4 L556.3 427.5 L558.3 423.8 L559.0 419.8 L558.6 415.7 L562.3 412.3 L564.3 408.6 L566.0 404.8 L564.7 400.4 L566.6 396.7 L566.6 392.6 L567.8 388.7 L568.9 384.8 L567.5 380.4"/><path d="M620.9 297.2 L617.1 299.3 L612.8 299.5 L608.8 301.1 L604.6 301.7 L600.0 300.4 L596.5 303.8 L592.1 303.6 L587.9 304.4 L584.4 307.5 L580.4 309.0 L576.2 309.6 L572.4 311.9 L567.8 310.6 L563.7 311.8 L559.8 313.7 L555.4 313.4"/><path d="M555.4 313.4 L554.5 317.9 L558.3 321.0 L560.2 324.7 L559.0 329.2 L561.8 332.6 L563.4 336.4 L565.4 340.0 L566.6 343.9 L569.0 347.4 L567.2 352.1 L566.2 356.7 L568.5 360.2 L569.0 364.3 L572.3 367.5 L574.9 371.0 L574.0 375.5"/><path d="M574.0 375.5 L570.3 377.4 L567.5 380.4"/><path d="M711.4 402.1 L714.0 398.4 L713.3 394.3 L715.5 390.5 L716.2 386.5 L713.4 382.2 L715.2 378.4 L717.2 374.5 L715.9 370.4 L714.9 366.3 L715.8 362.3"/><path d="M691.3 375.5 L695.0 378.0 L697.2 381.5 L700.8 384.0 L701.5 388.7 L704.1 391.9 L706.3 395.5 L709.2 398.6 L711.4 402.1"/><path d="M851.5 326.7 L849.0 330.4 L845.9 333.1 L841.5 333.6 L837.1 334.2 L833.3 335.8 L831.1 339.9 L827.6 342.0 L824.5 344.6 L820.0 345.0 L816.5 347.2 L812.3 348.1 L809.1 350.6 L805.9 353.1 L802.6 355.4 L798.4 356.4 L795.2 358.8 L792.4 362.0 L788.7 363.8 L786.7 368.2 L782.5 369.0 L778.7 370.7 L776.2 374.2 L773.8 378.1 L770.4 380.3 L766.6 381.8 L763.3 384.3 L760.4 387.2 L755.9 387.7 L752.6 390.0 L749.7 393.0 L745.2 393.4"/><path d="M701.4 334.1 L705.2 337.3 L705.5 342.2 L707.0 346.5 L707.7 351.2 L712.2 354.0 L715.2 357.6 L715.8 362.3"/><path d="M311.4 464.8 L310.2 466.0 L309.6 464.4"/><path d="M223.8 435.8 L227.8 438.7 L230.8 442.3 L234.4 445.6 L235.4 450.5 L236.7 455.2"/><path d="M312.2 424.0 L307.8 424.6 L303.4 425.2 L299.0 425.1 L294.6 424.7 L290.2 424.2 L285.8 423.7 L281.5 421.3 L277.0 423.0"/><path d="M318.7 372.9 L315.7 377.3 L313.9 382.4"/><path d="M227.5 412.7 L231.9 411.1 L236.0 413.0 L240.3 412.0 L244.6 412.0 L248.7 414.0 L253.0 412.5 L257.2 414.1"/><path d="M289.9 450.4 L287.9 446.6 L284.1 443.5 L282.4 439.6 L281.0 435.5 L279.1 431.6 L276.0 428.3 L277.0 423.0"/><path d="M574.2 253.8 L570.2 255.6 L567.1 258.5 L564.5 262.0 L562.3 266.1 L558.1 267.5 L554.5 269.8 L551.6 273.0 L549.0 276.5 L544.5 277.7 L542.5 281.9 L539.9 285.4 L536.8 288.3 L532.9 290.2 L528.1 291.0"/><path d="M525.3 221.5 L523.6 225.3 L523.6 229.8 L522.1 233.8 L522.0 238.2 L519.8 241.9 L519.7 246.3 L516.6 249.7 L513.7 253.2 L513.8 257.7 L512.2 261.6 L510.4 265.4 L508.2 269.1 L507.5 273.3"/><path d="M507.5 273.3 L511.8 275.3 L513.9 279.7 L518.6 281.2 L520.3 286.2 L523.9 288.9 L528.1 291.0"/><path d="M469.7 268.5 L473.5 269.8 L477.6 270.6 L480.9 273.1 L484.4 275.2"/><path d="M507.5 273.3 L502.8 272.7 L498.2 273.7 L493.7 275.5 L489.2 277.2 L484.4 275.2"/><path d="M555.4 313.4 L550.9 313.2 L547.0 311.4 L543.9 307.9 L539.8 306.5"/><path d="M517.5 393.0 L517.3 388.7 L520.8 385.4 L520.7 381.2 L522.6 377.4 L523.6 373.5 L523.0 369.1 L524.4 365.3 L526.6 361.6 L526.8 357.5 L526.8 353.2 L528.9 349.6 L531.6 346.0 L529.7 341.4 L532.4 337.8 L531.0 333.3 L533.0 329.5 L532.6 325.3 L534.1 321.4 L534.4 317.3 L535.8 313.4 L537.7 309.7"/><path d="M539.8 306.5 L538.5 307.9 L537.7 309.7"/><path d="M484.4 275.2 L482.3 278.6 L482.2 283.0 L478.8 285.9 L476.0 289.0 L476.4 293.6 L476.4 298.1 L473.8 301.3 L472.0 304.9 L470.5 308.6 L467.7 311.7 L466.5 315.6 L463.4 318.6 L463.6 323.1 L461.0 326.3 L457.4 329.1 L455.2 332.5 L455.3 337.0 L454.9 341.2 L454.0 345.2 L453.6 349.4 L448.9 351.7 L448.3 355.9 L445.9 359.2"/><path d="M477.9 370.4 L474.0 368.1 L469.8 370.2 L465.8 369.3 L461.6 370.2 L457.7 368.2 L453.6 368.4"/><path d="M453.6 368.4 L450.0 366.2 L447.1 363.4 L445.9 359.2"/><path d="M370.5 308.4 L370.8 313.9 L371.5 319.2 L375.4 323.4"/><path d="M342.1 371.1 L343.0 366.7 L344.3 362.5 L348.5 360.4 L352.8 358.3 L355.7 355.3 L355.7 350.2 L357.4 346.3 L359.0 342.4 L361.5 339.1 L365.3 336.6 L367.6 333.2 L369.5 329.4 L371.2 325.5 L375.4 323.4"/><path d="M432.4 270.8 L432.8 275.2 L431.8 279.3 L432.0 283.6 L430.6 287.6 L430.0 291.8 L428.0 295.7 L425.9 299.6 L425.7 303.9 L425.4 308.1 L423.6 312.0 L422.0 316.0 L421.4 320.2 L419.7 324.2 L418.4 328.2 L420.6 332.9 L421.4 337.4 L421.6 341.7 L417.9 345.3"/><path d="M460.2 524.7 L457.4 521.0 L453.7 517.9 L450.4 514.5 L447.1 511.2 L447.6 505.4"/><path d="M497.0 445.5 L494.1 448.4 L490.3 450.1 L486.1 451.2 L482.3 452.8 L479.6 456.1 L476.6 458.9"/><path d="M447.6 505.4 L449.9 501.9 L451.3 497.8 L453.5 494.1 L456.4 491.0 L458.4 487.3 L461.2 484.1 L464.1 480.9 L464.2 476.0 L466.8 472.6 L469.9 469.6 L472.5 466.3 L475.9 463.5 L476.6 458.9"/><path d="M460.2 406.3 L457.6 409.8 L453.7 412.6 L453.0 417.3 L450.5 420.9 L450.3 425.9 L447.7 429.4 L443.7 432.1 L441.5 435.9 L439.7 440.0 L438.2 444.1"/><path d="M453.3 370.7 L451.9 374.8 L447.4 376.5 L446.0 380.5 L442.3 382.8 L439.5 385.7 L437.6 389.4 L434.8 392.4 L433.2 396.2 L430.6 399.4 L428.7 403.0 L426.5 406.3 L425.7 410.8 L422.7 413.6 L419.5 416.3 L418.9 420.9 L416.4 424.1 L412.3 426.1"/><path d="M485.4 433.1 L481.3 433.1 L477.0 432.4 L473.6 435.6 L470.0 438.0 L465.5 436.8 L462.1 439.8 L457.8 439.3 L453.6 438.9 L449.6 439.6 L445.3 439.3 L442.2 443.4 L438.2 444.1"/><path d="M485.4 433.1 L488.5 436.1 L492.9 436.4 L496.7 437.9 L500.2 440.0"/><path d="M476.6 458.9 L472.3 458.5 L469.2 455.0 L464.7 455.2 L461.6 451.8 L457.9 449.9 L454.2 448.1 L450.0 447.5 L445.5 447.9 L441.5 446.7 L438.1 444.2"/><path d="M427.6 354.2 L425.5 355.2 L425.7 352.9"/><path d="M409.3 464.2 L404.8 465.0 L402.1 469.3 L399.1 472.9 L394.6 473.8 L389.9 474.1 L385.9 475.9 L382.0 477.8 L378.5 480.5"/><path d="M378.5 480.5 L378.3 484.6 L375.8 488.4 L375.0 492.4 L374.0 496.4 L375.6 500.8 L375.4 504.9 L373.5 508.8 L375.2 513.2 L374.0 517.2 L373.6 521.2 L370.8 525.0 L372.8 529.4 L371.0 533.3 L370.4 537.3 L367.7 541.1 L369.0 545.4"/><path d="M409.6 458.6 L410.0 461.4 L409.3 464.2"/><path d="M397.5 450.3 L401.2 453.6 L405.6 455.9 L409.6 458.6"/><path d="M389.0 396.7 L384.5 395.7 L380.0 394.8 L375.2 394.6 L370.6 393.8 L366.1 392.9 L363.0 388.0 L358.9 386.0"/><path d="M425.7 352.9 L422.4 355.5 L419.4 358.8 L414.4 358.2 L410.4 359.4 L407.4 362.6 L404.4 365.9 L399.7 365.7 L396.7 368.9 L393.7 372.2 L389.4 372.8 L385.0 373.5 L381.2 375.1 L377.9 377.6 L374.5 380.2 L369.7 379.9 L365.2 380.1 L362.5 384.0 L358.9 386.0"/><path d="M397.5 450.3 L393.8 447.9 L391.4 444.2 L389.4 440.0 L385.4 438.0 L381.4 436.0 L377.5 433.9 L375.2 430.0"/><path d="M330.1 440.5 L332.0 436.4 L335.6 434.1 L339.7 432.4 L344.0 430.9 L346.6 427.4 L349.0 423.9 L352.1 421.0 L355.2 418.2"/></g>
<g fill="none" stroke="#f2ad24" stroke-width="2" stroke-linejoin="round"><path d="M355.0 321.0 L358.6 326.2 L363.5 330.3 L367.0 335.6 L370.8 340.6 L375.4 344.9 L379.3 349.9 L383.0 355.0 L387.0 359.6 L389.5 365.2 L392.8 370.3 L397.1 374.6 L400.0 380.0 L404.3 384.4 L409.1 388.1 L414.3 391.4 L418.8 395.5 L423.0 400.0 L425.8 406.6 L427.6 413.6 L431.0 420.0 L437.2 424.4 L443.1 429.2 L448.0 435.0 L452.7 439.0 L457.7 442.5 L463.3 445.4 L468.2 449.0 L473.0 452.8 L478.2 456.1 L483.0 460.0 L488.8 463.0 L495.2 464.7 L500.8 468.2 L506.8 470.7 L513.2 472.3 L519.1 475.2 L525.0 478.0 L529.4 482.3 L534.8 485.3 L540.4 488.0 L545.4 491.4 L550.7 494.5 L555.0 499.0 L561.7 501.8 L567.4 506.2 L573.2 510.6 L579.7 513.6 L586.0 517.0 L593.0 517.9 L600.0 517.5 L607.0 517.0 L613.5 514.3 L620.2 512.3 L627.1 510.7 L633.7 508.2 L640.0 505.0 L645.8 502.3 L651.5 499.4 L656.7 495.6 L662.9 493.7 L668.6 490.7 L674.5 488.3 L680.0 485.0 L686.7 483.0 L693.2 480.7 L699.7 478.2 L706.1 475.2 L713.0 474.0 L718.3 470.7 L723.7 467.7 L729.4 465.1 L734.2 461.1 L739.8 458.5 L745.0 455.0 L749.3 450.2 L754.4 446.4 L759.4 442.4 L763.1 437.1 L768.6 433.6 L773.3 429.3 L777.7 424.7 L782.0 420.0"/><path d="M355.0 321.0 L349.1 323.2 L343.4 325.8 L337.6 328.3 L332.0 331.3 L326.0 333.0 L320.0 335.0 L313.7 337.5 L307.9 340.8 L302.0 344.0 L295.6 346.3 L290.0 350.0 L283.1 352.0 L276.2 354.5 L269.2 356.1 L262.0 357.0 L256.0 357.7 L250.0 359.0 L243.9 359.7 L237.9 360.1 L232.0 362.0 L226.0 361.7 L220.0 361.5 L214.0 361.2 L208.0 360.7 L202.0 362.2 L196.0 363.1 L190.0 362.0 L183.3 361.8 L176.6 361.8 L170.0 363.6 L163.4 364.7 L156.7 364.9 L150.0 365.0 L143.8 367.3 L137.3 368.1 L131.0 370.0 L124.4 370.7 L118.0 372.0"/><path d="M355.0 321.0 L352.2 315.1 L350.5 308.8 L348.6 302.5 L346.0 296.5 L345.0 290.0 L343.1 284.0 L341.0 278.0 L339.6 271.8 L336.9 266.0 L335.0 260.0 L334.2 253.1 L333.1 246.3 L331.8 239.5 L330.9 232.7 L329.0 226.0 L329.8 219.5 L330.3 213.0 L330.8 206.5 L330.0 200.0"/><path d="M355.0 321.0 L360.2 317.4 L365.2 313.5 L370.0 309.3 L374.7 305.1 L379.4 300.8 L385.1 297.9 L390.3 294.3 L395.0 290.0 L400.5 286.4 L406.3 283.3 L411.4 279.0 L416.2 274.5 L421.7 270.8 L427.9 268.2 L433.0 264.0 L436.7 259.2 L440.8 254.7 L445.0 250.2 L448.8 245.6 L452.2 240.5 L455.0 235.0 L458.6 229.5 L461.0 223.5 L464.3 217.9 L466.6 211.8 L469.0 205.8 L472.0 200.0"/><path d="M355.0 321.0 L360.7 323.1 L366.4 325.1 L372.0 327.3 L377.6 329.6 L383.2 332.0 L389.0 333.9 L395.0 335.0 L401.4 336.7 L408.1 336.8 L414.6 338.1 L421.2 338.6 L427.6 340.1 L434.0 342.0 L439.8 338.7 L445.5 335.3 L451.7 332.8 L458.0 330.8 L463.9 327.7 L470.0 325.0 L475.1 321.5 L479.0 316.5 L483.0 311.8 L487.3 307.4 L492.4 303.8 L497.8 300.6 L502.0 296.0"/><path d="M355.0 321.0 L355.0 327.7 L356.7 334.1 L357.1 340.7 L358.6 347.2 L360.0 353.6 L359.6 360.3 L360.5 366.9 L362.2 373.3 L362.0 380.0 L363.1 386.0 L363.7 392.0 L363.7 398.1 L364.2 404.1 L365.4 410.1 L365.5 416.2 L367.2 422.1 L367.4 428.2 L368.0 434.2 L369.4 440.1 L371.0 446.0 L367.4 451.7 L363.5 457.1 L359.5 462.6 L354.9 467.6 L351.2 473.2 L347.0 478.4 L342.9 483.8 L340.0 490.0 L335.3 494.7 L330.2 498.9 L325.2 503.3 L321.4 508.9 L316.1 513.0 L311.8 518.0 L307.4 523.0 L303.0 528.0"/><path d="M610.0 516.0 L610.7 522.3 L611.4 528.6 L611.3 534.9 L612.9 541.1 L614.2 547.4 L615.1 553.6 L615.0 560.0 L615.5 566.4 L616.5 572.8 L616.4 579.3 L617.4 585.7 L617.4 592.1 L617.2 598.5 L617.0 605.0"/><path d="M232.0 362.0 L228.0 357.1 L225.7 351.2 L222.2 346.1 L219.4 340.4 L215.9 335.3 L212.8 329.9 L209.3 324.7 L205.0 320.0 L201.2 315.2 L197.3 310.4 L194.3 305.2 L190.9 300.1 L187.9 294.9 L185.3 289.3 L182.0 284.1 L179.1 278.8 L175.6 273.8 L173.1 268.2 L170.4 262.7 L167.3 257.5 L163.0 253.0 L156.7 255.1 L150.8 258.0 L144.3 259.5 L138.4 262.8 L132.4 265.4 L126.4 268.2 L120.0 270.0 L114.9 274.1 L110.8 279.3 L106.1 283.8 L101.8 288.7 L96.0 292.0"/><path d="M355.0 321.0 L349.1 318.1 L342.9 316.0 L336.8 313.5 L330.7 311.2 L324.9 308.2 L318.3 307.0 L312.4 304.3 L306.2 302.2 L300.0 300.0 L295.7 295.8 L291.0 292.0 L286.7 287.8 L282.0 284.0 L277.7 279.8 L274.5 274.5 L270.6 269.9 L265.9 266.1 L261.5 262.0 L256.7 258.3 L253.0 253.5 L248.4 249.6 L244.6 244.9 L239.8 241.2 L235.4 237.1 L232.0 232.0"/><path d="M670.0 447.0 L665.5 451.5 L661.2 456.2 L656.2 460.3 L651.9 465.0 L648.3 470.3 L643.4 474.5 L640.0 480.0 L635.0 484.6 L631.7 490.5 L628.0 496.1 L624.0 501.5 L619.3 506.3 L615.0 511.4 L610.0 516.0"/><path d="M782.0 420.0 L788.7 420.6 L795.4 422.1 L802.1 422.4 L808.9 422.3 L815.7 422.3 L822.4 423.3 L829.0 425.0 L834.5 422.4 L839.5 418.9 L845.1 416.5 L850.0 413.0"/><path d="M355.0 321.0 L351.5 326.6 L348.1 332.3 L344.9 338.1 L341.5 343.8 L337.8 349.3 L333.6 354.4 L330.0 360.0 L326.4 365.1 L322.5 369.9 L317.4 373.5 L313.1 377.9 L308.2 381.8 L303.9 386.2 L300.0 391.0"/></g>
<g font-family="Liberation Sans" font-size="6" fill="#222"><text x="543" y="233">Náhožípa</text><text x="340" y="449">Paviny</text><text x="402" y="240">Rankov</text><text x="506" y="307">Měnkov</text><text x="599" y="370">Panypadl</text><text x="724" y="525">Náínnkín</text><text x="710" y="499">Ínpařivi</text><text x="517" y="475">Žístží</text><text x="125" y="246">Ínviží</text><text x="177" y="305">Nánk</text><text x="375" y="357">Cestmě</text><text x="609" y="469">Měnánk</text><text x="183" y="405">Ínná</text><text x="695" y="365">Vink</text><text x="128" y="339">Kopa</text><text x="440" y="272">Řiko</text><text x="648" y="342">Ínnyžívi</text><text x="254" y="527">Ranátynk</text><text x="158" y="251">Ínínvity</text><text x="234" y="215">Ceměnáři</text><text x="609" y="578">Boín</text><text x="649" y="587">Koínhoží</text><text x="487" y="249">Ínstpa</text><text x="552" y="595">Tynkměce</text><text x="346" y="593">Baží</text><text x="241" y="212">Ovbobo</text><text x="607" y="453">Patystty</text><text x="307" y="332">Raři</text><text x="669" y="511">Pabaři</text><text x="528" y="278">Vihoná</text><text x="653" y="583">Paviba</text><text x="336" y="515">Hopale</text><text x="335" y="418">Bahole</text><text x="281" y="356">Řiřibabo</text><text x="269" y="567">Cepaínná</text><text x="429" y="481">Měra</text><text x="372" y="417">Dlra</text><text x="319" y="272">Tyínínty</text><text x="376" y="541">Nkdl</text><text x="268" y="300">Žíst</text><text x="147" y="305">Leov</text><text x="385" y="487">Nkží</text><text x="418" y="324">Ovba</text><text x="406" y="400">Tydlho</text><text x="165" y="358">Leba</text><text x="828" y="481">Cecetyři</text><text x="567" y="451">Žítyží</text><text x="825" y="431">Řiín</text><text x="716" y="551">Kobapa</text><text x="650" y="456">Řimě</text><text x="298" y="532">Měnyvi</text><text x="204" y="305">Pabomě</text><text x="199" y="444">Cenkžíra</text><text x="462" y="409">Tystpa</text><text x="310" y="203">Žítyraho</text><text x="226" y="380">Kora</text><text x="780" y="440">Pakoty</text><text x="811" y="428">Stce</text><text x="130" y="321">Žíba</text><text x="572" y="560">Kodlři</text><text x="307" y="219">Baři</text><text x="679" y="439">Pahoba</text><text x="664" y="335">Lenk</text><text x="536" y="518">Nápa</text><text x="473" y="543">Řibo</text><text x="746" y="520">Řiměpa</text><text x="318" y="547">Měnáko</text><text x="504" y="232">Dlleraho</text><text x="374" y="528">Ovra</text><text x="581" y="389">Nkdl</text><text x="369" y="199">Pace</text><text x="362" y="323">Cenkžípa</text><text x="568" y="358">Dlstovba</text><text x="219" y="479">Stín</text><text x="669" y="314">Žídlpaba</text><text x="733" y="510">Nyín</text><text x="165" y="407">Leín</text><text x="225" y="256">Bodl</text><text x="278" y="279">Nyko</text><text x="526" y="469">Kokoviín</text><text x="397" y="493">Raboba</text><text x="313" y="445">Hovistov</text><text x="290" y="435">Žírabaží</text><text x="359" y="540">Nymě</text><text x="332" y="397">Nkhoov</text><text x="548" y="310">Nknkvi</text><text x="392" y="230">Nycedl</text><text x="741" y="545">Stra</text><text x="323" y="488">Bankba</text><text x="124" y="276">Nyměhoba</text><text x="512" y="388">Baíndlná</text><text x="364" y="269">Žíbavi</text><text x="539" y="474">Bodl</text><text x="296" y="194">Dlín</text><text x="588" y="434">Hopamě</text><text x="469" y="469">Náři</text><text x="247" y="427">Leceov</text><text x="351" y="356">Tynkží</text><text x="362" y="337">Pakotypa</text><text x="337" y="408">Měná</text><text x="348" y="370">Stpabadl</text><text x="656" y="480">Lecenkdl</text><text x="454" y="219">Bohoboři</text><text x="697" y="319">Boko</text><text x="684" y="405">Měřink</text><text x="323" y="299">Řistlera</text><text x="305" y="554">Tyovba</text><text x="442" y="297">Leín</text><text x="267" y="263">Lerankvi</text><text x="416" y="298">Žíratyín</text><text x="262" y="526">Vira</text><text x="222" y="314">Řist</text><text x="677" y="551">Leři</text><text x="708" y="488">Cecedlle</text><text x="127" y="244">Dlbo</text><text x="455" y="384">Náovměov</text><text x="471" y="351">Božíměnk</text><text x="423" y="392">Ceko</text><text x="592" y="478">Dlnyží</text><text x="269" y="318">Nylekoba</text><text x="601" y="558">Dlnkceov</text><text x="265" y="511">Řinkny</text><text x="429" y="259">Lehopa</text><text x="722" y="353">Paviko</text><text x="259" y="271">Hopaba</text><text x="767" y="526">Nktyovny</text><text x="652" y="511">Lele</text><text x="379" y="348">Stdl</text><text x="514" y="521">Raty</text><text x="845" y="413">Řinkín</text><text x="516" y="496">Dlží</text><text x="592" y="513">Raží</text><text x="701" y="325">Tykony</text><text x="194" y="430">Pastnk</text><text x="510" y="425">Hoty</text><text x="251" y="322">Lebonkpa</text><text x="330" y="508">Řipa</text><text x="672" y="522">Ovceraba</text><text x="307" y="452">Kobaměín</text><text x="709" y="547">Bace</text><text x="329" y="525">Ovov</text><text x="539" y="516">Lecemě</text><text x="769" y="406">Bace</text><text x="275" y="300">Měho</text><text x="713" y="333">Rabakole</text><text x="585" y="534">Řirabo</text><text x="436" y="391">Náná</text><text x="505" y="556">Kodlkoov</text><text x="335" y="178">Řileží</text><text x="655" y="329">Dlnkměho</text><text x="121" y="270">Vivi</text><text x="503" y="247">Dlřidlpa</text><text x="404" y="368">Boínží</text><text x="798" y="433">Parace</text><text x="716" y="460">Ovná</text><text x="479" y="276">Viovpa</text><text x="631" y="580">Raží</text><text x="545" y="445">Ínvist</text><text x="640" y="357">Měhoín</text><text x="677" y="573">Božídlři</text><text x="627" y="459">Nkpaty</text><text x="744" y="578">Baba</text><text x="402" y="458">Padlstny</text><text x="362" y="521">Ínlepa</text><text x="252" y="476">Nkmě</text><text x="102" y="275">Banystra</text></g>
<g font-family="Liberation Sans" fill="#111"><text x="355" y="321" font-size="8.5" font-weight="bold" text-anchor="middle">PRAHA</text><text x="232" y="362" font-size="8.5" font-weight="bold" text-anchor="middle">PLZEŇ</text><text x="610" y="516" font-size="8.5" font-weight="bold" text-anchor="middle">BRNO</text><text x="782" y="420" font-size="8.5" font-weight="bold" text-anchor="middle">OSTRAVA</text><text x="670" y="447" font-size="8.5" font-weight="bold" text-anchor="middle">OLOMOUC</text><text x="463" y="204" font-size="8.5" font-weight="bold" text-anchor="middle">LIBEREC</text><text x="329" y="226" font-size="8.5" font-weight="bold" text-anchor="middle">ÚSTÍ</text><text x="520" y="302" font-size="8.5" font-weight="bold" text-anchor="middle">HRADEC</text><text x="520" y="345" font-size="8.5" font-weight="bold" text-anchor="middle">PARDUBICE</text><text x="303" y="520" font-size="8.5" font-weight="bold" text-anchor="middle">ČESKÉ</text><text x="303" y="528" font-size="8.5" font-weight="bold" text-anchor="middle">BUDĚJOVICE</text><text x="478" y="470" font-size="8.5" font-weight="bold" text-anchor="middle">JIHLAVA</text><text x="724" y="532" font-size="8.5" font-weight="bold" text-anchor="middle">ZLÍN</text><text x="268" y="235" font-size="8.5" font-weight="bold" text-anchor="middle">MOST</text><text x="320" y="308" font-size="8.5" font-weight="bold" text-anchor="middle">KLADNO</text><text x="181" y="262" font-size="7" font-weight="normal" text-anchor="middle">Karlovy Vary</text><text x="110" y="293" font-size="7" font-weight="normal" text-anchor="middle">Cheb</text><text x="371" y="446" font-size="7" font-weight="normal" text-anchor="middle">Tábor</text><text x="306" y="453" font-size="7" font-weight="normal" text-anchor="middle">Písek</text><text x="434" y="342" font-size="7" font-weight="normal" text-anchor="middle">Kolín</text><text x="828" y="442" font-size="8.5" font-weight="bold" text-anchor="middle">FRÝDEK-</text><text x="828" y="450" font-size="8.5" font-weight="bold" text-anchor="middle">MÍSTEK</text><text x="749" y="393" font-size="7" font-weight="normal" text-anchor="middle">OPAVA</text><text x="307" y="220" font-size="7" font-weight="normal" text-anchor="middle">Teplice</text><text x="246" y="238" font-size="7" font-weight="normal" text-anchor="middle">Chomutov</text><text x="433" y="256" font-size="7" font-weight="normal" text-anchor="middle">Mladá</text><text x="433" y="264" font-size="7" font-weight="normal" text-anchor="middle">Boleslav</text><text x="374" y="208" font-size="7" font-weight="normal" text-anchor="middle">Česká Lípa</text><text x="520" y="310" font-size="8.5" font-weight="bold" text-anchor="middle">KRÁLOVÉ</text><text x="660" y="467" font-size="7" font-weight="normal" text-anchor="middle">Prostějov</text><text x="713" y="474" font-size="7" font-weight="normal" text-anchor="middle">Přerov</text><text x="645" y="583" font-size="7" font-weight="normal" text-anchor="middle">Hodonín</text><text x="527" y="567" font-size="7" font-weight="normal" text-anchor="middle">Znojmo</text><text x="510" y="505" font-size="7" font-weight="normal" text-anchor="middle">Třebíč</text><text x="460" y="356" font-size="7" font-weight="normal" text-anchor="middle">Kutná Hora</text><text x="300" y="391" font-size="7" font-weight="normal" text-anchor="middle">Příbram</text><text x="167" y="424" font-size="7" font-weight="normal" text-anchor="middle">Klatovy</text><text x="141" y="267" font-size="7" font-weight="normal" text-anchor="middle">Sokolov</text><text x="237" y="465" font-size="7" font-weight="normal" text-anchor="middle">Strakonice</text><text x="399" y="506" font-size="7" font-weight="normal" text-anchor="middle">Jindřichův</text><text x="399" y="513" font-size="7" font-weight="normal" text-anchor="middle">Hradec</text><text x="483" y="413" font-size="7" font-weight="normal" text-anchor="middle">Havlíčkův</text><text x="483" y="421" font-size="7" font-weight="normal" text-anchor="middle">Brod</text><text x="521" y="430" font-size="7" font-weight="normal" text-anchor="middle">Žďár</text><text x="617" y="489" font-size="7" font-weight="normal" text-anchor="middle">Blansko</text><text x="640" y="507" font-size="7" font-weight="normal" text-anchor="middle">Vyškov</text><text x="680" y="500" font-size="7" font-weight="normal" text-anchor="middle">Kroměříž</text><text x="783" y="513" font-size="7" font-weight="normal" text-anchor="middle">Vsetín</text><text x="770" y="456" font-size="7" font-weight="normal" text-anchor="middle">Nový Jičín</text><text x="660" y="377" font-size="7" font-weight="normal" text-anchor="middle">Šumperk</text><text x="580" y="410" font-size="7" font-weight="normal" text-anchor="middle">Svitavy</text><text x="563" y="375" font-size="7" font-weight="normal" text-anchor="middle">Ústí n.O.</text><text x="523" y="364" font-size="7" font-weight="normal" text-anchor="middle">Chrudim</text><text x="563" y="290" font-size="7" font-weight="normal" text-anchor="middle">Náchod</text><text x="520" y="255" font-size="7" font-weight="normal" text-anchor="middle">Trutnov</text><text x="465" y="278" font-size="7" font-weight="normal" text-anchor="middle">Jičín</text><text x="470" y="245" font-size="7" font-weight="normal" text-anchor="middle">Semily</text><text x="470" y="214" font-size="7" font-weight="normal" text-anchor="middle">Jablonec</text><text x="241" y="303" font-size="7" font-weight="normal" text-anchor="middle">Rakovník</text><text x="262" y="269" font-size="7" font-weight="normal" text-anchor="middle">Louny</text><text x="333" y="247" font-size="7" font-weight="normal" text-anchor="middle">Litoměřice</text><text x="360" y="273" font-size="7" font-weight="normal" text-anchor="middle">Mělník</text><text x="293" y="354" font-size="7" font-weight="normal" text-anchor="middle">Beroun</text><text x="389" y="383" font-size="7" font-weight="normal" text-anchor="middle">Benešov</text><text x="420" y="436" font-size="7" font-weight="normal" text-anchor="middle">Pelhřimov</text><text x="252" y="499" font-size="7" font-weight="normal" text-anchor="middle">Prachatice</text><text x="283" y="556" font-size="7" font-weight="normal" text-anchor="middle">Český Krumlov</text><text x="132" y="432" font-size="7" font-weight="normal" text-anchor="middle">Domažlice</text><text x="104" y="340" font-size="7" font-weight="normal" text-anchor="middle">Tachov</text><text x="245" y="372" font-size="7" font-weight="normal" text-anchor="middle">Rokycany</text><text x="365" y="203" font-size="7" font-weight="normal" text-anchor="middle">Děčín</text><text x="386" y="166" font-size="7" font-weight="normal" text-anchor="middle">Rumburk</text><text x="615" y="598" font-size="7" font-weight="normal" text-anchor="middle">Břeclav</text><text x="720" y="570" font-size="7" font-weight="normal" text-anchor="middle">Uherské</text><text x="720" y="577" font-size="7" font-weight="normal" text-anchor="middle">Hradiště</text><text x="722" y="389" font-size="7" font-weight="normal" text-anchor="middle">Bruntál</text><text x="685" y="340" font-size="7" font-weight="normal" text-anchor="middle">Jeseník</text><text x="736" y="372" font-size="7" font-weight="normal" text-anchor="middle">Krnov</text></g>
</g>
<g font-family="Liberation Sans" fill="#111"><text x="829" y="425" font-size="8.5" font-weight="bold" text-anchor="middle">HAVÍŘOV</text><text x="850" y="413" font-size="8.5" font-weight="bold" text-anchor="middle">KARVINÁ</text></g>
<use href="#czp" fill="none" stroke="#e2476c" stroke-width="1.3"/>
<g fill="#0010f0"><ellipse cx="265.5" cy="342.5" rx="6" ry="5.5"/><ellipse cx="266" cy="351.5" rx="7" ry="6"/></g>
</svg>
</div>
<div style="position:absolute;left:21px;top:107px;width:46px;height:149px;background:#6c757d"></div>
<svg style="position:absolute;left:27px;top:111px" width="36" height="36" viewBox="0 0 36 36"><g fill="none" stroke="#e4e6e8" stroke-width="2"><circle cx="18" cy="18" r="10"/><circle cx="18" cy="18" r="5"/><path d="M18 2 V8 M18 28 V34 M2 18 H8 M28 18 H34"/></g></svg>
<svg style="position:absolute;left:29px;top:148px" width="32" height="32" viewBox="0 0 32 32"><g fill="none" stroke="#e4e6e8" stroke-width="2"><rect x="3" y="3" width="27" height="27" rx="4"/><path d="M9 16 L16.5 9.5 L24 16 M11 14 V23 H22 V14 M14.5 23 V18 H18.5 V23"/></g></svg>
<svg style="position:absolute;left:29px;top:182px" width="32" height="32" viewBox="0 0 32 32"><g fill="none" stroke="#e4e6e8" stroke-width="2"><rect x="3" y="2.5" width="27" height="27" rx="4"/><path d="M16.5 8 V24 M8.5 16 H24.5"/></g></svg>
<svg style="position:absolute;left:29px;top:217px" width="32" height="32" viewBox="0 0 32 32"><g fill="none" stroke="#e4e6e8" stroke-width="2"><rect x="3" y="2.5" width="27" height="27" rx="4"/><path d="M8.5 16 H24.5"/></g></svg>
<div style="position:absolute;left:821px;top:636px;width:97px;height:22px;background:#6c757d"></div>
<svg style="position:absolute;left:826px;top:638px" width="90" height="8" viewBox="0 0 90 8"><g stroke="#e8e8e8" stroke-width="1.6" fill="none"><path d="M2 4 H87 M2 1 V7 M87 1 V7"/></g></svg>
<div style="position:absolute;left:821px;top:644px;width:97px;text-align:center;color:#fff;font-size:11px;line-height:13px">50 km</div>
<svg style="position:absolute;left:0;top:0" width="1222" height="678" viewBox="0 0 1222 678"><g fill="none" stroke="#e61e2a"><rect x="226" y="44" width="44" height="43" stroke-width="4" rx="1"/><path d="M247 88 L272 170" stroke-width="4"/></g><path d="M263 166 L277 163 L275.5 181Z" fill="#e61e2a"/></svg>

<div style="position:absolute;left:0;top:657px;width:918px;height:1.5px;background:#7a8086"></div>
<div style="position:absolute;left:5px;top:658px;font-size:13.9px;color:#2b3035;white-space:nowrap;line-height:20px">x: -768116, y: -1198999, měřítko 1: 2041936, celkový počet: 17006, výběr: 0</div>
<div style="position:absolute;left:918px;top:46px;width:5px;height:632px;background:#6c757d"></div>
<div style="position:absolute;left:920px;top:353px;width:2px;height:20px;background:#fff"></div>
<div style="position:absolute;left:923px;top:47px;width:299px;height:631px;background:#fff;border:1px solid #d8dde2;border-bottom:none"></div>
<div style="position:absolute;left:924px;top:48px;width:297px;height:32px;background:#6c757d"></div>
<svg style="position:absolute;left:933px;top:53px" width="20" height="20" viewBox="0 0 20 20"><g fill="#fff"><path d="M10 1.5 L18.5 6 L10 10.5 L1.5 6Z"/><path d="M3.5 8.8 L10 12.3 L16.5 8.8 L18.5 10 L10 14.5 L1.5 10Z"/><path d="M3.5 12.8 L10 16.3 L16.5 12.8 L18.5 14 L10 18.5 L1.5 14Z"/></g></svg>
<div style="position:absolute;left:959px;top:54px;color:#fff;font-size:17px;white-space:nowrap;line-height:20px">Vrstvy mapy</div>
<svg style="position:absolute;left:1180px;top:54px" width="12" height="18" viewBox="0 0 12 18"><g fill="#fff"><circle cx="6.1" cy="3.9" r="1.7"/><circle cx="6.1" cy="9" r="1.7"/><circle cx="6.1" cy="14.1" r="1.7"/></g></svg>
<svg style="position:absolute;left:1198px;top:55px" width="16" height="16" viewBox="0 0 16 16"><path d="M3 3.2 L13.4 12.8 M13.4 3.2 L3 12.8" stroke="#fff" stroke-width="1.9"/></svg>
<div style="position:absolute;left:1202px;top:79px;width:19px;height:598px;background:#f7f7f7"></div>
<svg style="position:absolute;left:1204px;top:86px" width="15" height="10" viewBox="0 0 15 10"><path d="M1 9 L7.5 1.5 L14 9Z" fill="#8a8a8a"/></svg>
<div style="position:absolute;left:1206px;top:103px;width:11px;height:311px;background:#8c8c8c;border-radius:6px"></div>
<svg style="position:absolute;left:1204px;top:661px" width="15" height="10" viewBox="0 0 15 10"><path d="M1 1 L14 1 L7.5 8.5Z" fill="#8a8a8a"/></svg>
<div style="position:absolute;left:935px;top:90px;width:16px;height:16px;border:2px solid #212529;border-radius:2.5px;background:#fff"></div>
<svg style="position:absolute;left:954px;top:89px" width="17" height="17" viewBox="0 0 17 17"><circle cx="8.5" cy="8.5" r="7.6" fill="#2d6fd6"/><path d="M3 5 C5 3 8 3 8 6 C7 8 5 8 6 11 C4 11 2 9 2.5 7Z M9 12 C10 10 13 10 14.5 11 C13.5 14 11 15.5 9.5 15Z M10 3 C12 3 14.5 5 15 7 C13 7 11 5.5 10 3Z" fill="#3cb84a"/><circle cx="6" cy="5" r="2" fill="#9fd0ff" opacity=".7"/></svg>
<div style="position:absolute;left:975px;top:89.5px;font-size:14px;font-weight:normal;color:#6c757d;white-space:nowrap;line-height:17px">DMVS - Technická infrastruktu…</div>
<svg style="position:absolute;left:1175px;top:93px" width="19" height="12" viewBox="0 0 19 12"><path d="M2.5 2 L9.6 9 L16.7 2" fill="none" stroke="#111" stroke-width="1.8"/></svg>
<div style="position:absolute;left:925px;top:113.4px;width:277px;height:1.3px;background:#dde2e7"></div>
<div style="position:absolute;left:935px;top:125px;width:16px;height:16px;border:2px solid #212529;border-radius:2.5px;background:#fff"></div>
<svg style="position:absolute;left:954px;top:124px" width="17" height="17" viewBox="0 0 17 17"><circle cx="8.5" cy="8.5" r="7.6" fill="#2d6fd6"/><path d="M3 5 C5 3 8 3 8 6 C7 8 5 8 6 11 C4 11 2 9 2.5 7Z M9 12 C10 10 13 10 14.5 11 C13.5 14 11 15.5 9.5 15Z M10 3 C12 3 14.5 5 15 7 C13 7 11 5.5 10 3Z" fill="#3cb84a"/><circle cx="6" cy="5" r="2" fill="#9fd0ff" opacity=".7"/></svg>
<div style="position:absolute;left:975px;top:124.5px;font-size:14px;font-weight:normal;color:#6c757d;white-space:nowrap;line-height:17px">DMVS - Dopravní infrastruktura</div>
<svg style="position:absolute;left:1175px;top:128px" width="19" height="12" viewBox="0 0 19 12"><path d="M2.5 2 L9.6 9 L16.7 2" fill="none" stroke="#111" stroke-width="1.8"/></svg>
<div style="position:absolute;left:925px;top:148.4px;width:277px;height:1.3px;background:#dde2e7"></div>
<div style="position:absolute;left:935px;top:160px;width:16px;height:16px;border:2px solid #212529;border-radius:2.5px;background:#fff"></div>
<svg style="position:absolute;left:935px;top:160px" width="16" height="16" viewBox="0 0 16 16"><path d="M3.4 7.6 L6.5 10.6 L11.8 5.3" fill="none" stroke="#212529" stroke-width="1.7"/></svg>
<svg style="position:absolute;left:955px;top:160px" width="16" height="16" viewBox="0 0 16 16"><circle cx="8" cy="8" r="7.9" fill="#000"/><path d="M1.4 10.8 A7 7 0 1 1 14.6 10.6 L12 10.8 Z" fill="#f5f000"/><path d="M4.2 6.2 C5.3 4 9 3.4 9.9 5.8 C10.6 7.8 8.8 9 8.4 11.5 L8 15" fill="none" stroke="#000" stroke-width="2.7"/><path d="M5.5 10.5 L11 10.5 L10 16 L6 16Z" fill="#000"/></svg>
<div style="position:absolute;left:975px;top:159.5px;font-size:14px;font-weight:bold;color:#6c757d;white-space:nowrap;line-height:17px">Obce</div>
<svg style="position:absolute;left:1175px;top:163px" width="19" height="12" viewBox="0 0 19 12"><path d="M2.5 2 L9.6 9 L16.7 2" fill="none" stroke="#111" stroke-width="1.8"/></svg>
<div style="position:absolute;left:925px;top:183.4px;width:277px;height:1.3px;background:#dde2e7"></div>
<div style="position:absolute;left:935px;top:195px;width:16px;height:16px;border:2px solid #212529;border-radius:2.5px;background:#fff"></div>
<svg style="position:absolute;left:935px;top:195px" width="16" height="16" viewBox="0 0 16 16"><path d="M3.4 7.6 L6.5 10.6 L11.8 5.3" fill="none" stroke="#212529" stroke-width="1.7"/></svg>
<svg style="position:absolute;left:955px;top:195px" width="16" height="16" viewBox="0 0 16 16"><circle cx="8" cy="8" r="7.9" fill="#000"/><path d="M1.4 10.8 A7 7 0 1 1 14.6 10.6 L12 10.8 Z" fill="#f5f000"/><path d="M4.2 6.2 C5.3 4 9 3.4 9.9 5.8 C10.6 7.8 8.8 9 8.4 11.5 L8 15" fill="none" stroke="#000" stroke-width="2.7"/><path d="M5.5 10.5 L11 10.5 L10 16 L6 16Z" fill="#000"/></svg>
<div style="position:absolute;left:975px;top:194.5px;font-size:14px;font-weight:bold;color:#6c757d;white-space:nowrap;line-height:17px">Katastrální území</div>
<svg style="position:absolute;left:1175px;top:198px" width="19" height="12" viewBox="0 0 19 12"><path d="M2.5 2 L9.6 9 L16.7 2" fill="none" stroke="#111" stroke-width="1.8"/></svg>
<div style="position:absolute;left:925px;top:218.4px;width:277px;height:1.3px;background:#dde2e7"></div>
<div style="position:absolute;left:935px;top:230px;width:16px;height:16px;border:2px solid #212529;border-radius:2.5px;background:#fff"></div>
<svg style="position:absolute;left:955px;top:230px" width="16" height="16" viewBox="0 0 16 16"><circle cx="8" cy="8" r="7.9" fill="#000"/><path d="M1.4 10.8 A7 7 0 1 1 14.6 10.6 L12 10.8 Z" fill="#f5f000"/><path d="M4.2 6.2 C5.3 4 9 3.4 9.9 5.8 C10.6 7.8 8.8 9 8.4 11.5 L8 15" fill="none" stroke="#000" stroke-width="2.7"/><path d="M5.5 10.5 L11 10.5 L10 16 L6 16Z" fill="#000"/></svg>
<div style="position:absolute;left:975px;top:229.5px;font-size:14px;font-weight:normal;color:#6c757d;white-space:nowrap;line-height:17px">ÚAP IS plynovod</div>
<svg style="position:absolute;left:1175px;top:233px" width="19" height="12" viewBox="0 0 19 12"><path d="M2.5 2 L9.6 9 L16.7 2" fill="none" stroke="#111" stroke-width="1.8"/></svg>
<div style="position:absolute;left:925px;top:253.4px;width:277px;height:1.3px;background:#dde2e7"></div>
<div style="position:absolute;left:935px;top:265px;width:16px;height:16px;border:2px solid #212529;border-radius:2.5px;background:#fff"></div>
<svg style="position:absolute;left:955px;top:265px" width="16" height="16" viewBox="0 0 16 16"><circle cx="8" cy="8" r="7.9" fill="#000"/><path d="M1.4 10.8 A7 7 0 1 1 14.6 10.6 L12 10.8 Z" fill="#f5f000"/><path d="M4.2 6.2 C5.3 4 9 3.4 9.9 5.8 C10.6 7.8 8.8 9 8.4 11.5 L8 15" fill="none" stroke="#000" stroke-width="2.7"/><path d="M5.5 10.5 L11 10.5 L10 16 L6 16Z" fill="#000"/></svg>
<div style="position:absolute;left:975px;top:264.5px;font-size:14px;font-weight:normal;color:#6c757d;white-space:nowrap;line-height:17px">ÚAP IS teplovod</div>
<svg style="position:absolute;left:1175px;top:268px" width="19" height="12" viewBox="0 0 19 12"><path d="M2.5 2 L9.6 9 L16.7 2" fill="none" stroke="#111" stroke-width="1.8"/></svg>
<div style="position:absolute;left:925px;top:288.4px;width:277px;height:1.3px;background:#dde2e7"></div>
<div style="position:absolute;left:935px;top:300px;width:16px;height:16px;border:2px solid #212529;border-radius:2.5px;background:#fff"></div>
<svg style="position:absolute;left:955px;top:300px" width="16" height="16" viewBox="0 0 16 16"><circle cx="8" cy="8" r="7.9" fill="#000"/><path d="M1.4 10.8 A7 7 0 1 1 14.6 10.6 L12 10.8 Z" fill="#f5f000"/><path d="M4.2 6.2 C5.3 4 9 3.4 9.9 5.8 C10.6 7.8 8.8 9 8.4 11.5 L8 15" fill="none" stroke="#000" stroke-width="2.7"/><path d="M5.5 10.5 L11 10.5 L10 16 L6 16Z" fill="#000"/></svg>
<div style="position:absolute;left:975px;top:299.5px;font-size:14px;font-weight:normal;color:#6c757d;white-space:nowrap;line-height:17px">ÚAP IS telekomunikace</div>
<svg style="position:absolute;left:1175px;top:303px" width="19" height="12" viewBox="0 0 19 12"><path d="M2.5 2 L9.6 9 L16.7 2" fill="none" stroke="#111" stroke-width="1.8"/></svg>
<div style="position:absolute;left:925px;top:323.4px;width:277px;height:1.3px;background:#dde2e7"></div>
<div style="position:absolute;left:935px;top:335px;width:16px;height:16px;border:2px solid #212529;border-radius:2.5px;background:#fff"></div>
<svg style="position:absolute;left:955px;top:335px" width="16" height="16" viewBox="0 0 16 16"><circle cx="8" cy="8" r="7.9" fill="#000"/><path d="M1.4 10.8 A7 7 0 1 1 14.6 10.6 L12 10.8 Z" fill="#f5f000"/><path d="M4.2 6.2 C5.3 4 9 3.4 9.9 5.8 C10.6 7.8 8.8 9 8.4 11.5 L8 15" fill="none" stroke="#000" stroke-width="2.7"/><path d="M5.5 10.5 L11 10.5 L10 16 L6 16Z" fill="#000"/></svg>
<div style="position:absolute;left:975px;top:334.5px;font-size:14px;font-weight:normal;color:#6c757d;white-space:nowrap;line-height:17px">ÚAP IS elektřina</div>
<svg style="position:absolute;left:1175px;top:338px" width="19" height="12" viewBox="0 0 19 12"><path d="M2.5 2 L9.6 9 L16.7 2" fill="none" stroke="#111" stroke-width="1.8"/></svg>
<div style="position:absolute;left:925px;top:358.4px;width:277px;height:1.3px;background:#dde2e7"></div>
<div style="position:absolute;left:935px;top:370px;width:16px;height:16px;border:2px solid #212529;border-radius:2.5px;background:#fff"></div>
<svg style="position:absolute;left:935px;top:370px" width="16" height="16" viewBox="0 0 16 16"><path d="M3.4 7.6 L6.5 10.6 L11.8 5.3" fill="none" stroke="#212529" stroke-width="1.7"/></svg>
<svg style="position:absolute;left:955px;top:370px" width="16" height="16" viewBox="0 0 16 16"><circle cx="8" cy="8" r="7.9" fill="#000"/><path d="M1.4 10.8 A7 7 0 1 1 14.6 10.6 L12 10.8 Z" fill="#f5f000"/><path d="M4.2 6.2 C5.3 4 9 3.4 9.9 5.8 C10.6 7.8 8.8 9 8.4 11.5 L8 15" fill="none" stroke="#000" stroke-width="2.7"/><path d="M5.5 10.5 L11 10.5 L10 16 L6 16Z" fill="#000"/></svg>
<div style="position:absolute;left:975px;top:369.5px;font-size:14px;font-weight:bold;color:#6c757d;white-space:nowrap;line-height:17px">Popisy</div>
<svg style="position:absolute;left:1175px;top:373px" width="19" height="12" viewBox="0 0 19 12"><path d="M2.5 2 L9.6 9 L16.7 2" fill="none" stroke="#111" stroke-width="1.8"/></svg>
<div style="position:absolute;left:925px;top:393.4px;width:277px;height:1.3px;background:#dde2e7"></div>
<div style="position:absolute;left:935px;top:405px;width:16px;height:16px;border:2px solid #212529;border-radius:2.5px;background:#fff"></div>
<svg style="position:absolute;left:955px;top:405px" width="16" height="16" viewBox="0 0 16 16"><circle cx="8" cy="8" r="7.9" fill="#000"/><path d="M1.4 10.8 A7 7 0 1 1 14.6 10.6 L12 10.8 Z" fill="#f5f000"/><path d="M4.2 6.2 C5.3 4 9 3.4 9.9 5.8 C10.6 7.8 8.8 9 8.4 11.5 L8 15" fill="none" stroke="#000" stroke-width="2.7"/><path d="M5.5 10.5 L11 10.5 L10 16 L6 16Z" fill="#000"/></svg>
<div style="position:absolute;left:975px;top:404.5px;font-size:14px;font-weight:normal;color:#6c757d;white-space:nowrap;line-height:17px">Čísla parcel</div>
<svg style="position:absolute;left:1175px;top:408px" width="19" height="12" viewBox="0 0 19 12"><path d="M2.5 2 L9.6 9 L16.7 2" fill="none" stroke="#111" stroke-width="1.8"/></svg>
<div style="position:absolute;left:925px;top:428.4px;width:277px;height:1.3px;background:#dde2e7"></div>
<div style="position:absolute;left:935px;top:440px;width:16px;height:16px;border:2px solid #212529;border-radius:2.5px;background:#fff"></div>
<svg style="position:absolute;left:955px;top:440px" width="16" height="16" viewBox="0 0 16 16"><circle cx="8" cy="8" r="7.9" fill="#000"/><path d="M1.4 10.8 A7 7 0 1 1 14.6 10.6 L12 10.8 Z" fill="#f5f000"/><path d="M4.2 6.2 C5.3 4 9 3.4 9.9 5.8 C10.6 7.8 8.8 9 8.4 11.5 L8 15" fill="none" stroke="#000" stroke-width="2.7"/><path d="M5.5 10.5 L11 10.5 L10 16 L6 16Z" fill="#000"/></svg>
<div style="position:absolute;left:975px;top:439.5px;font-size:14px;font-weight:normal;color:#6c757d;white-space:nowrap;line-height:17px">Pomocná čísla parcel</div>
<svg style="position:absolute;left:1175px;top:443px" width="19" height="12" viewBox="0 0 19 12"><path d="M2.5 2 L9.6 9 L16.7 2" fill="none" stroke="#111" stroke-width="1.8"/></svg>
<div style="position:absolute;left:925px;top:463.4px;width:277px;height:1.3px;background:#dde2e7"></div>
<div style="position:absolute;left:935px;top:475px;width:16px;height:16px;border:2px solid #212529;border-radius:2.5px;background:#fff"></div>
<svg style="position:absolute;left:935px;top:475px" width="16" height="16" viewBox="0 0 16 16"><path d="M3.4 7.6 L6.5 10.6 L11.8 5.3" fill="none" stroke="#212529" stroke-width="1.7"/></svg>
<svg style="position:absolute;left:955px;top:475px" width="16" height="16" viewBox="0 0 16 16"><circle cx="8" cy="8" r="7.9" fill="#000"/><path d="M1.4 10.8 A7 7 0 1 1 14.6 10.6 L12 10.8 Z" fill="#f5f000"/><path d="M4.2 6.2 C5.3 4 9 3.4 9.9 5.8 C10.6 7.8 8.8 9 8.4 11.5 L8 15" fill="none" stroke="#000" stroke-width="2.7"/><path d="M5.5 10.5 L11 10.5 L10 16 L6 16Z" fill="#000"/></svg>
<div style="position:absolute;left:975px;top:474.5px;font-size:14px;font-weight:bold;color:#6c757d;white-space:nowrap;line-height:17px">Technické objekty</div>
<svg style="position:absolute;left:1175px;top:478px" width="19" height="12" viewBox="0 0 19 12"><path d="M2.5 2 L9.6 9 L16.7 2" fill="none" stroke="#111" stroke-width="1.8"/></svg>
<div style="position:absolute;left:925px;top:498.4px;width:277px;height:1.3px;background:#dde2e7"></div>
<div style="position:absolute;left:935px;top:510px;width:16px;height:16px;border:2px solid #212529;border-radius:2.5px;background:#fff"></div>
<svg style="position:absolute;left:935px;top:510px" width="16" height="16" viewBox="0 0 16 16"><path d="M3.4 7.6 L6.5 10.6 L11.8 5.3" fill="none" stroke="#212529" stroke-width="1.7"/></svg>
<svg style="position:absolute;left:955px;top:510px" width="16" height="16" viewBox="0 0 16 16"><circle cx="8" cy="8" r="7.9" fill="#000"/><path d="M1.4 10.8 A7 7 0 1 1 14.6 10.6 L12 10.8 Z" fill="#f5f000"/><path d="M4.2 6.2 C5.3 4 9 3.4 9.9 5.8 C10.6 7.8 8.8 9 8.4 11.5 L8 15" fill="none" stroke="#000" stroke-width="2.7"/><path d="M5.5 10.5 L11 10.5 L10 16 L6 16Z" fill="#000"/></svg>
<div style="position:absolute;left:975px;top:509.5px;font-size:14px;font-weight:bold;color:#6c757d;white-space:nowrap;line-height:17px">Vodorovné značky</div>
<svg style="position:absolute;left:1175px;top:513px" width="19" height="12" viewBox="0 0 19 12"><path d="M2.5 2 L9.6 9 L16.7 2" fill="none" stroke="#111" stroke-width="1.8"/></svg>
<div style="position:absolute;left:925px;top:533.4px;width:277px;height:1.3px;background:#dde2e7"></div>
<div style="position:absolute;left:935px;top:545px;width:16px;height:16px;border:2px solid #212529;border-radius:2.5px;background:#fff"></div>
<svg style="position:absolute;left:935px;top:545px" width="16" height="16" viewBox="0 0 16 16"><path d="M3.4 7.6 L6.5 10.6 L11.8 5.3" fill="none" stroke="#212529" stroke-width="1.7"/></svg>
<svg style="position:absolute;left:955px;top:545px" width="16" height="16" viewBox="0 0 16 16"><circle cx="8" cy="8" r="7.9" fill="#000"/><path d="M1.4 10.8 A7 7 0 1 1 14.6 10.6 L12 10.8 Z" fill="#f5f000"/><path d="M4.2 6.2 C5.3 4 9 3.4 9.9 5.8 C10.6 7.8 8.8 9 8.4 11.5 L8 15" fill="none" stroke="#000" stroke-width="2.7"/><path d="M5.5 10.5 L11 10.5 L10 16 L6 16Z" fill="#000"/></svg>
<div style="position:absolute;left:975px;top:544.5px;font-size:14px;font-weight:bold;color:#6c757d;white-space:nowrap;line-height:17px">Mosty</div>
<svg style="position:absolute;left:1175px;top:548px" width="19" height="12" viewBox="0 0 19 12"><path d="M2.5 2 L9.6 9 L16.7 2" fill="none" stroke="#111" stroke-width="1.8"/></svg>
<div style="position:absolute;left:925px;top:568.4px;width:277px;height:1.3px;background:#dde2e7"></div>
<div style="position:absolute;left:935px;top:580px;width:16px;height:16px;border:2px solid #212529;border-radius:2.5px;background:#fff"></div>
<svg style="position:absolute;left:935px;top:580px" width="16" height="16" viewBox="0 0 16 16"><path d="M3.4 7.6 L6.5 10.6 L11.8 5.3" fill="none" stroke="#212529" stroke-width="1.7"/></svg>
<svg style="position:absolute;left:955px;top:580px" width="16" height="16" viewBox="0 0 16 16"><circle cx="8" cy="8" r="7.9" fill="#000"/><path d="M1.4 10.8 A7 7 0 1 1 14.6 10.6 L12 10.8 Z" fill="#f5f000"/><path d="M4.2 6.2 C5.3 4 9 3.4 9.9 5.8 C10.6 7.8 8.8 9 8.4 11.5 L8 15" fill="none" stroke="#000" stroke-width="2.7"/><path d="M5.5 10.5 L11 10.5 L10 16 L6 16Z" fill="#000"/></svg>
<div style="position:absolute;left:975px;top:579.5px;font-size:14px;font-weight:bold;color:#6c757d;white-space:nowrap;line-height:17px">Vpustě</div>
<svg style="position:absolute;left:1175px;top:583px" width="19" height="12" viewBox="0 0 19 12"><path d="M2.5 2 L9.6 9 L16.7 2" fill="none" stroke="#111" stroke-width="1.8"/></svg>
<div style="position:absolute;left:925px;top:603.4px;width:277px;height:1.3px;background:#dde2e7"></div>
<div style="position:absolute;left:935px;top:615px;width:16px;height:16px;border:2px solid #212529;border-radius:2.5px;background:#fff"></div>
<svg style="position:absolute;left:935px;top:615px" width="16" height="16" viewBox="0 0 16 16"><path d="M3.4 7.6 L6.5 10.6 L11.8 5.3" fill="none" stroke="#212529" stroke-width="1.7"/></svg>
<svg style="position:absolute;left:955px;top:615px" width="16" height="16" viewBox="0 0 16 16"><circle cx="8" cy="8" r="7.9" fill="#000"/><path d="M1.4 10.8 A7 7 0 1 1 14.6 10.6 L12 10.8 Z" fill="#f5f000"/><path d="M4.2 6.2 C5.3 4 9 3.4 9.9 5.8 C10.6 7.8 8.8 9 8.4 11.5 L8 15" fill="none" stroke="#000" stroke-width="2.7"/><path d="M5.5 10.5 L11 10.5 L10 16 L6 16Z" fill="#000"/></svg>
<div style="position:absolute;left:975px;top:614.5px;font-size:14px;font-weight:bold;color:#6c757d;white-space:nowrap;line-height:17px">Svítidla</div>
<svg style="position:absolute;left:1175px;top:618px" width="19" height="12" viewBox="0 0 19 12"><path d="M2.5 2 L9.6 9 L16.7 2" fill="none" stroke="#111" stroke-width="1.8"/></svg>
<div style="position:absolute;left:925px;top:638.4px;width:277px;height:1.3px;background:#dde2e7"></div>
<div style="position:absolute;left:935px;top:650px;width:16px;height:16px;border:2px solid #212529;border-radius:2.5px;background:#fff"></div>
<svg style="position:absolute;left:935px;top:650px" width="16" height="16" viewBox="0 0 16 16"><path d="M3.4 7.6 L6.5 10.6 L11.8 5.3" fill="none" stroke="#212529" stroke-width="1.7"/></svg>
<svg style="position:absolute;left:955px;top:650px" width="16" height="16" viewBox="0 0 16 16"><circle cx="8" cy="8" r="7.9" fill="#000"/><path d="M1.4 10.8 A7 7 0 1 1 14.6 10.6 L12 10.8 Z" fill="#f5f000"/><path d="M4.2 6.2 C5.3 4 9 3.4 9.9 5.8 C10.6 7.8 8.8 9 8.4 11.5 L8 15" fill="none" stroke="#000" stroke-width="2.7"/><path d="M5.5 10.5 L11 10.5 L10 16 L6 16Z" fill="#000"/></svg>
<div style="position:absolute;left:975px;top:649.5px;font-size:14px;font-weight:bold;color:#6c757d;white-space:nowrap;line-height:17px">Vedení</div>
<svg style="position:absolute;left:1175px;top:653px" width="19" height="12" viewBox="0 0 19 12"><path d="M2.5 2 L9.6 9 L16.7 2" fill="none" stroke="#111" stroke-width="1.8"/></svg>
<div style="position:absolute;left:925px;top:673.4px;width:277px;height:1.3px;background:#dde2e7"></div>
<div style="position:absolute;left:923px;top:676px;width:299px;height:2px;background:#c9ced3"></div>
<div style="position:absolute;left:0;top:0;width:1.5px;height:678px;background:#23409a"></div>
</body></html>
